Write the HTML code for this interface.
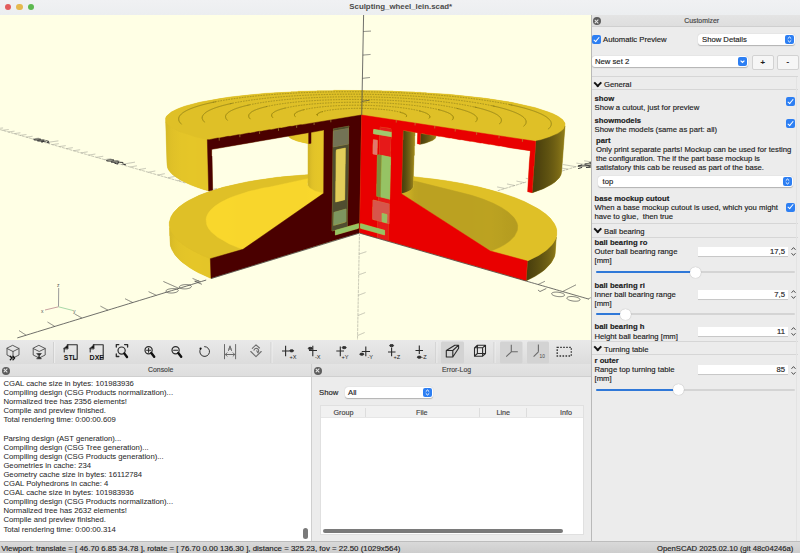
<!DOCTYPE html>
<html><head><meta charset="utf-8">
<style>
*{box-sizing:border-box;margin:0;padding:0}
html,body{width:800px;height:553px;overflow:hidden;background:#ececec}
body{position:relative;font-family:"Liberation Sans",sans-serif;font-size:7.7px;color:#1c1c1c}
.a{position:absolute;white-space:pre;line-height:1;-webkit-text-stroke:0.15px currentColor}
.b{font-weight:bold;color:#1a1a1a}
#title{position:absolute;left:0;top:0;width:800px;height:15px;background:linear-gradient(#f0f1f3,#eceef0)}
.tl{position:absolute;top:3.7px;width:6.6px;height:6.6px;border-radius:50%}
#vp{position:absolute;left:0;top:15px;width:591px;height:325px;background:#ffffe5;overflow:hidden}
#tb{position:absolute;left:0;top:339.5px;width:591px;height:25px;background:linear-gradient(#e9e9e9,#dcdcdc);border-bottom:1px solid #c9c9c9}
.dh{position:absolute;height:13px;background:linear-gradient(#e4e4e4,#dedede);border-bottom:1px solid #cfcfcf}
.cx{position:absolute;width:8px;height:8px;border-radius:50%;background:#5d5d5d}
.cx:before,.cx:after{content:"";position:absolute;left:3.4px;top:1.5px;width:1.3px;height:5px;background:#e8e8e8;transform:rotate(45deg)}
.cx:after{transform:rotate(-45deg)}
#con{position:absolute;left:0;top:377px;width:311px;height:164px;background:#fff}
#err{position:absolute;left:311px;top:364px;width:280px;height:177px;background:#ececec;border-left:1px solid #cfcfcf}
#cust{position:absolute;left:591px;top:15px;width:209px;height:526px;background:#ececec;border-left:1px solid #b9b9b9}
#sb{position:absolute;left:0;top:541px;width:800px;height:12px;background:linear-gradient(#d9d9d9,#cdcdcd);border-top:1px solid #bdbdbd}
.cb{position:absolute;width:9px;height:9px;border-radius:2px;background:#2d7ff3}
.cb:after{content:"";position:absolute;left:2.9px;top:0.9px;width:2.2px;height:5px;border:solid #fff;border-width:0 1.4px 1.4px 0;transform:rotate(40deg)}
.combo{position:absolute;height:11px;background:#fff;border-radius:3px;box-shadow:0 0.5px 1px rgba(0,0,0,.25)}
.bbtn{position:absolute;top:1px;right:1px;width:9px;height:9px;border-radius:2px;background:#2d7ff3}
.bbtn svg{position:absolute;left:0;top:0}
.spin{position:absolute;height:9px;background:#fff;box-shadow:0 0.5px 0.5px rgba(0,0,0,.15)}
.sep{position:absolute;left:592px;width:206px;height:1px;background:#d6d6d6}
.chev{position:absolute;width:5.5px;height:5.5px;border:solid #111;border-width:0 2px 2px 0;transform:rotate(45deg)}
.track{position:absolute;height:2px;border-radius:1px;background:#d4d4d4}
.fill{position:absolute;height:2px;border-radius:1px;background:#2f78d8}
.knob{position:absolute;width:11px;height:11px;border-radius:50%;background:#fff;box-shadow:0 0 1px rgba(0,0,0,.35)}
</style></head><body>

<div id="title">
 <div class="tl" style="left:4.7px;background:#e25c5c"></div>
 <div class="tl" style="left:16.2px;background:#e5b94f"></div>
 <div class="tl" style="left:27.7px;background:#5cb84f"></div>
 <div class="a b" style="left:349.3px;top:3.3px;font-size:7.85px;color:#4a4a4a;-webkit-text-stroke:0">Sculpting_wheel_lein.scad*</div>
</div>

<div id="vp">
<svg width="591" height="325" viewBox="0 15 591 325" style="position:absolute;left:0;top:0">
<g id="model"><defs><linearGradient id="g0" gradientUnits="userSpaceOnUse" x1="165.7" y1="0" x2="208.7" y2="0"><stop offset="0.024" stop-color="#d7ba26"/><stop offset="0.071" stop-color="#dbbd27"/><stop offset="0.119" stop-color="#dec027"/><stop offset="0.167" stop-color="#e0c128"/><stop offset="0.214" stop-color="#e1c228"/><stop offset="0.262" stop-color="#e2c328"/><stop offset="0.310" stop-color="#e3c428"/><stop offset="0.357" stop-color="#e4c528"/><stop offset="0.405" stop-color="#e4c528"/><stop offset="0.452" stop-color="#e4c528"/><stop offset="0.500" stop-color="#e5c528"/><stop offset="0.548" stop-color="#e5c628"/><stop offset="0.595" stop-color="#e5c628"/><stop offset="0.643" stop-color="#e5c628"/><stop offset="0.690" stop-color="#e5c628"/><stop offset="0.738" stop-color="#e5c528"/><stop offset="0.786" stop-color="#e5c528"/><stop offset="0.833" stop-color="#e4c528"/><stop offset="0.881" stop-color="#e4c528"/><stop offset="0.929" stop-color="#e4c528"/><stop offset="0.976" stop-color="#e4c528"/></linearGradient><linearGradient id="g1" gradientUnits="userSpaceOnUse" x1="532.3" y1="0" x2="565.3" y2="0"><stop offset="0.031" stop-color="#493f0d"/><stop offset="0.094" stop-color="#4b400d"/><stop offset="0.156" stop-color="#4d430e"/><stop offset="0.219" stop-color="#50450e"/><stop offset="0.281" stop-color="#54480f"/><stop offset="0.344" stop-color="#574c0f"/><stop offset="0.406" stop-color="#5b4f10"/><stop offset="0.469" stop-color="#5f5211"/><stop offset="0.531" stop-color="#635612"/><stop offset="0.594" stop-color="#685a12"/><stop offset="0.656" stop-color="#6d5e13"/><stop offset="0.719" stop-color="#736314"/><stop offset="0.781" stop-color="#796815"/><stop offset="0.844" stop-color="#806f17"/><stop offset="0.906" stop-color="#887618"/><stop offset="0.969" stop-color="#8e7b19"/></linearGradient><linearGradient id="g2" gradientUnits="userSpaceOnUse" x1="288.7" y1="0" x2="308.7" y2="0"><stop offset="0.050" stop-color="#d8bb26"/><stop offset="0.150" stop-color="#ddbf27"/><stop offset="0.250" stop-color="#e0c228"/><stop offset="0.350" stop-color="#e3c428"/><stop offset="0.450" stop-color="#e4c528"/><stop offset="0.550" stop-color="#e5c528"/><stop offset="0.650" stop-color="#e5c628"/><stop offset="0.750" stop-color="#e5c628"/><stop offset="0.850" stop-color="#e4c528"/><stop offset="0.950" stop-color="#e4c528"/></linearGradient><linearGradient id="g3" gradientUnits="userSpaceOnUse" x1="420.3" y1="0" x2="436.3" y2="0"><stop offset="0.062" stop-color="#4b410d"/><stop offset="0.188" stop-color="#52470f"/><stop offset="0.312" stop-color="#5a4e10"/><stop offset="0.438" stop-color="#635612"/><stop offset="0.562" stop-color="#6d5e13"/><stop offset="0.688" stop-color="#786715"/><stop offset="0.812" stop-color="#857317"/><stop offset="0.938" stop-color="#96811a"/></linearGradient><linearGradient id="g4" gradientUnits="userSpaceOnUse" x1="308.0" y1="0" x2="324.0" y2="0"><stop offset="0.062" stop-color="#d2b525"/><stop offset="0.188" stop-color="#dcbe27"/><stop offset="0.312" stop-color="#e1c228"/><stop offset="0.438" stop-color="#e3c428"/><stop offset="0.562" stop-color="#e4c528"/><stop offset="0.688" stop-color="#e5c628"/><stop offset="0.812" stop-color="#e5c528"/><stop offset="0.938" stop-color="#e4c528"/></linearGradient><linearGradient id="g5" gradientUnits="userSpaceOnUse" x1="401.7" y1="0" x2="415.3" y2="0"><stop offset="0.083" stop-color="#4c420d"/><stop offset="0.250" stop-color="#564a0f"/><stop offset="0.417" stop-color="#645712"/><stop offset="0.583" stop-color="#746415"/><stop offset="0.750" stop-color="#897618"/><stop offset="0.917" stop-color="#9d871c"/></linearGradient><linearGradient id="g6" gradientUnits="userSpaceOnUse" x1="169.7" y1="0" x2="211.0" y2="0"><stop offset="0.025" stop-color="#d8ba26"/><stop offset="0.075" stop-color="#dcbe27"/><stop offset="0.125" stop-color="#dfc027"/><stop offset="0.175" stop-color="#e0c228"/><stop offset="0.225" stop-color="#e2c328"/><stop offset="0.275" stop-color="#e3c428"/><stop offset="0.325" stop-color="#e3c428"/><stop offset="0.375" stop-color="#e4c528"/><stop offset="0.425" stop-color="#e4c528"/><stop offset="0.475" stop-color="#e5c528"/><stop offset="0.525" stop-color="#e5c628"/><stop offset="0.575" stop-color="#e5c628"/><stop offset="0.625" stop-color="#e5c628"/><stop offset="0.675" stop-color="#e5c628"/><stop offset="0.725" stop-color="#e5c628"/><stop offset="0.775" stop-color="#e5c528"/><stop offset="0.825" stop-color="#e4c528"/><stop offset="0.875" stop-color="#e4c528"/><stop offset="0.925" stop-color="#e4c528"/><stop offset="0.975" stop-color="#e4c528"/></linearGradient><linearGradient id="g7" gradientUnits="userSpaceOnUse" x1="526.3" y1="0" x2="556.7" y2="0"><stop offset="0.033" stop-color="#493f0d"/><stop offset="0.100" stop-color="#4c420d"/><stop offset="0.167" stop-color="#4f440e"/><stop offset="0.233" stop-color="#53470f"/><stop offset="0.300" stop-color="#564a0f"/><stop offset="0.367" stop-color="#5a4d10"/><stop offset="0.433" stop-color="#5d5110"/><stop offset="0.500" stop-color="#615411"/><stop offset="0.567" stop-color="#665812"/><stop offset="0.633" stop-color="#6a5c13"/><stop offset="0.700" stop-color="#6f6014"/><stop offset="0.767" stop-color="#756515"/><stop offset="0.833" stop-color="#7b6b16"/><stop offset="0.900" stop-color="#837117"/><stop offset="0.967" stop-color="#8d7a19"/></linearGradient><linearGradient id="g8" gradientUnits="userSpaceOnUse" x1="206.0" y1="0" x2="323.3" y2="0"><stop offset="0.021" stop-color="#f9d72c"/><stop offset="0.062" stop-color="#f9d72c"/><stop offset="0.104" stop-color="#f9d72c"/><stop offset="0.146" stop-color="#f9d72c"/><stop offset="0.188" stop-color="#f9d72c"/><stop offset="0.229" stop-color="#f8d72c"/><stop offset="0.271" stop-color="#f8d62c"/><stop offset="0.312" stop-color="#f8d62c"/><stop offset="0.354" stop-color="#f8d62c"/><stop offset="0.396" stop-color="#f8d62c"/><stop offset="0.438" stop-color="#f8d62c"/><stop offset="0.479" stop-color="#f8d62c"/><stop offset="0.521" stop-color="#f8d62c"/><stop offset="0.562" stop-color="#f8d62c"/><stop offset="0.604" stop-color="#f8d62c"/><stop offset="0.646" stop-color="#f8d62c"/><stop offset="0.688" stop-color="#f8d62c"/><stop offset="0.729" stop-color="#f8d62c"/><stop offset="0.771" stop-color="#f8d62c"/><stop offset="0.812" stop-color="#f8d62c"/><stop offset="0.854" stop-color="#f8d62c"/><stop offset="0.896" stop-color="#f9d72c"/><stop offset="0.938" stop-color="#f9d72c"/><stop offset="0.979" stop-color="#f9d72c"/></linearGradient><linearGradient id="g9" gradientUnits="userSpaceOnUse" x1="402.0" y1="0" x2="518.0" y2="0"><stop offset="0.021" stop-color="#cdb124"/><stop offset="0.062" stop-color="#c9ad23"/><stop offset="0.104" stop-color="#bea421"/><stop offset="0.146" stop-color="#bba121"/><stop offset="0.188" stop-color="#bba121"/><stop offset="0.229" stop-color="#bba121"/><stop offset="0.271" stop-color="#bba121"/><stop offset="0.312" stop-color="#bba121"/><stop offset="0.354" stop-color="#bba121"/><stop offset="0.396" stop-color="#bba121"/><stop offset="0.438" stop-color="#bba121"/><stop offset="0.479" stop-color="#bba121"/><stop offset="0.521" stop-color="#bba121"/><stop offset="0.562" stop-color="#bba121"/><stop offset="0.604" stop-color="#bba121"/><stop offset="0.646" stop-color="#bba221"/><stop offset="0.688" stop-color="#bba221"/><stop offset="0.729" stop-color="#bca221"/><stop offset="0.771" stop-color="#bca221"/><stop offset="0.812" stop-color="#baa121"/><stop offset="0.854" stop-color="#b9a021"/><stop offset="0.896" stop-color="#b79e20"/><stop offset="0.938" stop-color="#b69d20"/><stop offset="0.979" stop-color="#b59c20"/></linearGradient></defs><path fill="#d6b82a" fill-rule="evenodd" d="M165.67 118.00 167.00 163.67 167.67 168.00 168.67 170.00 170.67 172.67 175.67 177.00 181.00 180.33 187.00 183.33 197.00 187.33 208.67 191.00 210.67 190.33 212.00 190.67 199.33 195.33 186.67 201.67 178.67 207.33 173.00 213.33 171.00 216.67 169.33 222.33 170.00 243.33 170.67 246.67 174.33 254.00 177.00 257.33 182.67 262.67 194.67 270.67 210.67 278.33 359.33 232.67 525.33 280.67 526.67 280.67 535.00 276.33 544.67 269.67 550.00 264.33 552.33 261.00 554.33 257.00 555.33 253.00 556.33 236.33 556.67 236.00 556.67 230.00 556.00 227.33 554.33 223.67 550.33 218.33 545.67 214.00 537.00 208.00 524.67 201.67 515.00 197.67 491.00 190.00 479.00 187.00 458.00 182.67 434.67 179.00 415.00 177.00 413.33 176.33 413.67 165.33 414.00 165.00 414.00 155.67 414.33 155.33 414.33 146.00 414.67 145.67 414.67 136.33 415.00 136.00 415.00 132.67 416.00 132.33 417.67 133.00 417.33 143.67 420.00 144.33 425.67 143.00 432.67 140.33 435.33 138.33 436.00 136.00 436.67 135.67 529.67 150.67 530.33 151.33 529.33 162.67 527.67 191.67 532.67 192.67 543.33 188.67 550.00 185.33 555.00 182.00 559.33 177.67 561.00 174.67 561.67 171.00 561.67 167.00 562.00 166.67 562.00 162.67 562.33 162.33 562.33 158.33 562.67 158.00 562.67 154.00 563.00 153.67 563.00 149.67 563.33 149.33 563.33 145.33 563.67 145.00 563.67 141.00 565.00 127.67 565.00 123.33 562.67 119.67 557.00 115.67 548.00 111.67 535.33 107.67 511.33 102.33 485.67 98.33 456.00 95.00 431.67 93.33 431.33 93.00 426.67 93.00 426.33 92.67 401.67 91.67 401.33 91.33 393.00 91.33 392.67 91.00 364.67 90.67 364.33 90.33 333.67 90.33 333.33 90.67 306.33 91.00 306.00 91.33 298.00 91.33 297.67 91.67 274.33 92.67 274.00 93.00 269.67 93.00 269.33 93.33 247.00 95.00 220.67 98.33 197.67 102.67 182.33 107.00 175.67 109.67 171.33 112.00 166.67 116.00ZM212.00 190.33 212.33 190.00 213.00 190.33 212.67 190.67ZM412.67 187.67 413.00 187.33 413.33 187.67 413.00 188.00ZM308.00 186.33 308.33 186.00 308.67 186.33 308.33 186.67ZM307.67 185.67 308.00 185.33 308.33 185.67 308.00 186.00ZM413.33 184.67 413.67 185.00 413.33 187.33 413.00 187.00ZM307.67 182.67 308.00 183.00 307.67 185.33 307.33 185.00ZM308.00 144.00 308.00 174.33 307.67 174.67 286.00 176.33 257.67 180.00 238.00 183.67 223.00 187.33 213.67 190.33 212.67 190.00 212.00 156.00 211.67 155.67 211.67 149.67 212.00 149.33 287.00 136.33 288.33 136.33 291.33 138.67 297.00 141.00 304.33 143.00 307.33 143.33Z"/>
<path fill="#dfc027" stroke="#dfc027" stroke-width="0.45" fill-rule="evenodd" d="M165.67 118.00 165.67 121.33 166.33 122.67 169.00 125.67 172.33 128.00 183.33 133.00 195.00 136.67 206.00 139.33 209.33 139.33 217.67 137.67 219.67 137.67 228.00 136.00 230.00 136.00 360.33 114.67 367.33 115.33 374.00 116.67 391.67 119.00 398.33 120.33 416.00 122.67 422.67 124.00 433.67 125.33 440.33 126.67 458.00 129.00 460.33 129.67 475.67 131.67 478.00 132.33 500.00 135.33 535.67 141.00 549.33 137.00 557.67 133.33 561.67 130.67 563.67 128.67 565.00 126.00 565.00 123.33 562.67 119.67 558.67 116.67 553.00 113.67 535.33 107.67 511.33 102.33 485.67 98.33 448.67 94.33 426.67 93.00 426.33 92.67 421.33 92.67 421.00 92.33 415.33 92.33 415.00 92.00 393.00 91.33 392.67 91.00 382.00 91.00 381.67 90.67 333.67 90.33 333.33 90.67 317.00 90.67 316.67 91.00 298.00 91.33 297.67 91.67 291.00 91.67 290.67 92.00 265.33 93.33 230.00 97.00 200.67 102.00 185.33 106.00 178.00 108.67 171.33 112.00 166.67 116.00Z"/>
<path fill="url(#g0)" stroke="url(#g0)" stroke-width="0.45" fill-rule="evenodd" d="M165.67 121.67 167.00 163.67 167.67 168.00 168.67 170.00 172.67 174.67 181.00 180.33 191.67 185.33 204.00 189.67 208.33 190.67 207.00 139.67 195.00 137.00 179.00 131.67 170.33 127.00 166.67 123.67Z"/>
<path fill="url(#g1)" stroke="url(#g1)" stroke-width="0.45" fill-rule="evenodd" d="M565.00 126.33 564.00 128.67 561.67 131.00 557.67 133.67 549.33 137.33 541.00 140.00 536.00 141.00 532.33 192.67 543.33 188.67 551.67 184.33 555.00 182.00 559.33 177.67 561.00 174.67 561.67 171.00Z"/>
<path fill="url(#g2)" stroke="url(#g2)" stroke-width="0.45" fill-rule="evenodd" d="M308.33 143.67 308.33 133.00 288.67 136.67 291.33 138.67 297.00 141.00Z"/>
<path fill="url(#g3)" stroke="url(#g3)" stroke-width="0.45" fill-rule="evenodd" d="M420.33 144.33 425.67 143.00 432.67 140.33 435.33 138.33 436.00 136.00 420.67 133.67Z"/>
<path fill="url(#g4)" stroke="url(#g4)" stroke-width="0.45" fill-rule="evenodd" d="M323.67 130.33 311.33 132.67 311.33 143.33 309.67 144.00 308.00 144.00 308.00 185.33 308.67 186.67 311.67 189.00 317.67 191.67 323.33 193.33Z"/>
<path fill="url(#g5)" stroke="url(#g5)" stroke-width="0.45" fill-rule="evenodd" d="M403.33 130.67 403.33 139.67 403.00 140.00 401.67 193.67 409.00 191.00 410.67 190.00 413.00 187.33 414.00 155.67 414.33 155.33 414.33 146.00 414.67 145.67 414.67 136.33 415.00 136.00 415.00 132.67Z"/>
<path fill="url(#g6)" stroke="url(#g6)" stroke-width="0.45" fill-rule="evenodd" d="M169.67 227.67 169.67 235.67 170.00 236.00 170.33 245.33 171.67 249.33 175.33 255.33 180.33 260.67 189.67 267.67 198.33 272.67 210.67 278.33 210.00 258.67 201.00 255.00 191.67 250.33 182.33 244.33 178.67 241.33 173.33 235.67 170.67 231.33Z"/>
<path fill="url(#g7)" stroke="url(#g7)" stroke-width="0.45" fill-rule="evenodd" d="M556.33 237.00 556.00 238.67 553.33 243.33 547.33 249.67 538.67 255.67 527.67 261.00 526.33 280.67 535.00 276.33 541.67 272.00 544.67 269.67 551.00 263.00 554.33 257.00 555.00 254.67Z"/>
<path fill="#dfc027" stroke="#dfc027" stroke-width="0.45" fill-rule="evenodd" d="M413.67 176.67 413.67 180.67 463.33 192.67 483.67 199.00 499.33 206.00 509.33 212.67 514.00 217.33 517.33 223.00 518.00 225.67 518.00 228.67 517.00 232.33 514.67 236.33 509.67 241.33 503.33 245.67 498.33 248.33 491.67 251.00 492.00 251.33 525.33 260.33 528.00 260.67 538.67 255.33 545.67 250.67 552.00 244.67 555.67 238.67 556.67 235.00 556.67 230.00 556.00 227.33 554.33 223.67 550.33 218.33 545.67 214.00 539.67 209.67 524.67 201.67 515.00 197.67 501.33 193.00 479.00 187.00 463.33 183.67 446.00 180.67ZM307.67 174.67 277.00 177.33 248.00 181.67 223.00 187.33 207.00 192.33 199.33 195.33 189.00 200.33 184.00 203.33 178.67 207.33 174.00 212.00 171.00 216.67 169.33 222.33 169.33 225.67 171.00 231.33 175.33 237.67 178.67 241.00 184.67 245.67 191.67 250.00 201.00 254.67 210.00 258.33 242.33 249.33 232.33 245.67 222.33 240.67 215.00 235.67 209.33 230.00 206.33 224.67 205.67 219.33 206.33 216.33 208.00 213.00 210.00 210.33 214.67 206.00 220.67 202.00 228.67 198.00 235.33 195.33 244.33 192.33 257.00 189.00 307.33 178.67 307.67 178.33Z"/>
<path fill="url(#g8)" stroke="url(#g8)" stroke-width="0.45" fill-rule="evenodd" d="M323.00 193.33 315.00 191.00 309.67 188.00 307.33 185.00 307.67 178.67 269.33 187.00 263.00 188.00 249.00 191.33 235.33 195.67 228.67 198.33 220.67 202.33 214.67 206.33 210.33 210.33 208.33 213.00 206.67 216.33 206.00 219.33 206.67 224.67 208.67 228.67 211.33 232.00 217.67 237.33 229.33 244.00 239.67 248.33 243.00 249.00Z"/>
<path fill="url(#g9)" stroke="url(#g9)" stroke-width="0.45" fill-rule="evenodd" d="M402.00 193.67 405.00 196.00 491.00 251.00 499.67 247.33 505.00 244.33 509.67 241.00 514.33 236.33 517.33 230.33 517.67 225.67 517.00 223.00 515.33 219.67 513.67 217.33 507.67 211.67 501.67 207.67 493.33 203.33 483.67 199.33 471.67 195.33 414.67 181.00 413.67 181.00 413.33 187.67 410.67 190.33 406.00 192.67Z"/>
<path fill="#4a0000" stroke="#4a0000" stroke-width="0.45" fill-rule="evenodd" d="M361.33 115.00 302.33 124.67 300.33 124.67 292.00 126.33 290.00 126.33 281.67 128.00 279.67 128.00 271.33 129.67 269.33 129.67 261.00 131.33 259.00 131.33 250.67 133.00 248.67 133.00 240.33 134.67 238.33 134.67 230.00 136.33 228.00 136.33 219.67 138.00 217.67 138.00 209.33 139.67 207.33 139.67 208.67 191.00 212.67 190.00 212.00 156.00 211.67 155.67 211.67 149.67 212.00 149.33 308.33 132.67 308.67 133.00 308.67 143.67 311.00 143.33 311.00 132.67 311.33 132.33 323.67 130.00 324.00 130.33 323.67 193.33 243.00 249.33 210.33 258.67 211.00 278.33 334.00 240.33 359.00 233.00 359.33 231.67ZM349.00 125.67 349.33 127.00 349.00 127.33 347.67 226.33 358.67 223.33 359.00 223.67 359.00 228.00 358.33 228.67 335.33 235.33 335.00 235.00 335.00 230.67 332.67 231.33 331.67 231.00 333.00 128.67Z"/>
<path fill="#504e30" stroke="#504e30" stroke-width="0.45" fill-rule="evenodd" d="M348.67 144.33 333.00 147.33 332.00 231.00 347.33 226.67ZM346.00 208.67 346.33 209.00 346.33 221.67 344.67 222.67 333.67 225.67 333.33 225.33 333.67 212.33ZM345.33 147.67 345.67 148.00 345.67 163.67 345.33 164.00 345.00 199.67 344.33 200.33 335.67 202.33 335.33 202.00 335.33 181.33 335.67 181.00 335.67 153.00 336.00 150.00 337.00 149.33ZM349.00 126.00 333.33 128.67 333.33 130.67 348.33 128.33Z"/>
<path fill="#737355" stroke="#737355" stroke-width="0.45" fill-rule="evenodd" d="M348.67 128.33 333.33 131.00 333.00 147.00 348.67 144.00Z"/>
<path fill="#e1cd5a" stroke="#e1cd5a" stroke-width="0.45" fill-rule="evenodd" d="M345.33 148.00 336.33 150.00 335.67 202.00 344.67 199.67Z"/>
<path fill="#7d965f" stroke="#7d965f" stroke-width="0.45" fill-rule="evenodd" d="M346.00 209.00 334.00 212.33 333.67 225.33 346.00 221.67Z"/>
<path fill="#96c364" stroke="#96c364" stroke-width="0.45" fill-rule="evenodd" d="M358.67 223.67 335.33 230.33 335.33 235.00 358.33 228.33 358.67 228.00Z"/>
<path fill="#e90000" stroke="#e90000" stroke-width="0.45" fill-rule="evenodd" d="M361.67 115.00 359.67 231.67 359.33 232.67 377.00 238.00 377.00 233.33 376.67 233.00 360.67 228.67 360.00 228.00 360.00 223.67 361.33 223.33 377.33 228.00 377.33 220.67 373.67 220.00 372.33 219.33 372.33 207.00 372.67 206.67 372.67 200.00 373.67 199.67 378.00 200.67 378.00 196.67 377.00 196.67 376.33 196.00 376.33 184.00 376.67 183.67 377.00 155.67 377.67 154.33 379.00 154.67 379.33 135.00 373.33 134.00 373.00 131.00 373.67 129.00 379.67 130.00 380.00 126.67 391.00 128.33 391.67 132.33 391.67 136.67 391.00 139.67 391.00 151.33 390.67 151.67 391.00 164.67 390.67 165.00 390.00 199.33 389.33 200.33 389.67 213.00 389.33 213.33 389.33 223.67 388.67 224.67 388.33 241.00 526.00 280.67 527.33 261.00 490.33 251.00 401.33 193.67 403.00 130.67 403.67 130.33 417.33 132.67 417.67 133.00 417.33 143.67 420.00 144.33 420.33 133.67 422.33 133.33 428.67 134.67 430.67 134.67 439.00 136.33 441.00 136.33 449.33 138.00 451.33 138.00 459.67 139.67 461.67 139.67 470.00 141.33 472.00 141.33 480.33 143.00 482.33 143.00 488.67 144.33 490.67 144.33 499.00 146.00 501.00 146.00 509.33 147.67 529.67 150.67 530.33 151.33 529.33 162.67 527.67 191.67 532.00 192.67 532.33 190.33 532.33 185.67 532.67 185.33 533.00 176.00 533.33 175.67 533.67 166.33 534.00 166.00 535.67 141.33ZM373.33 139.33 376.33 139.67 377.67 140.33 377.67 148.00 377.33 148.33 377.33 154.67 377.00 155.00 372.67 154.00 372.67 146.00Z"/>
<path fill="#e61919" stroke="#e61919" stroke-width="0.45" fill-rule="evenodd" d="M377.67 221.00 377.67 228.00 384.67 230.00 385.00 230.33 385.00 235.00 384.33 235.33 377.33 233.33 377.33 238.00 388.00 241.00 388.33 224.67 388.67 224.00ZM378.33 196.67 378.33 200.67 378.00 201.00 389.00 203.67 389.33 199.33ZM379.67 135.00 379.33 154.67 390.33 156.67 391.00 137.00ZM380.00 127.00 380.33 130.33 391.00 132.00 391.00 128.67Z"/>
<path fill="#a0c86e" stroke="#a0c86e" stroke-width="0.45" fill-rule="evenodd" d="M373.67 129.33 373.33 133.67 391.33 136.67 391.33 132.33Z"/>
<path fill="#e1786e" stroke="#e1786e" stroke-width="0.45" fill-rule="evenodd" d="M373.33 139.67 373.00 154.00 377.00 154.67 377.33 140.33Z"/>
<path fill="#96c364" stroke="#96c364" stroke-width="0.45" fill-rule="evenodd" d="M381.67 155.33 380.67 197.00 389.67 199.33 390.67 157.33Z"/>
<path fill="#7d8c3c" stroke="#7d8c3c" stroke-width="0.45" fill-rule="evenodd" d="M377.67 154.67 377.33 155.67 376.67 196.00 380.33 197.00 381.33 155.33Z"/>
<path fill="#d7554b" stroke="#d7554b" stroke-width="0.45" fill-rule="evenodd" d="M373.00 200.00 372.67 219.33 381.67 221.67 381.67 213.33 382.67 213.00 386.67 214.00 387.33 214.67 387.00 223.00 389.00 223.67 389.33 204.00Z"/>
<path fill="#96be64" stroke="#96be64" stroke-width="0.45" fill-rule="evenodd" d="M382.00 213.33 382.00 221.67 386.67 223.00 387.00 214.67Z"/>
<path fill="#96c364" stroke="#96c364" stroke-width="0.45" fill-rule="evenodd" d="M360.33 223.67 360.33 228.00 360.67 228.33 384.67 235.00 384.67 230.33Z"/><path fill="none" stroke="#7d7018" stroke-width="0.8" stroke-opacity="0.85" d="M405.88 117.08 405.91 117.05 405.95 117.02 405.98 116.99 406.01 116.96 406.04 116.93 406.07 116.90 406.10 116.87 406.13 116.84 406.16 116.81 406.18 116.78 406.21 116.75 406.23 116.72 406.26 116.69 406.28 116.66 406.30 116.63 406.32 116.60 406.34 116.57 406.36 116.54 406.38 116.51 406.40 116.48 406.42 116.45 406.43 116.42 406.45 116.39 406.46 116.36 406.47 116.33 406.49 116.30 406.50 116.27 406.51 116.24 406.52 116.21 406.53 116.18 406.54 116.15 406.54 116.12 406.55 116.09 406.55 116.06 406.56 116.03 406.56 116.00 406.57 115.97 406.57 115.93 406.57 115.90 406.57 115.87 406.57 115.84 406.57 115.81 406.57 115.78 406.56 115.75 406.56 115.72 406.55 115.69 406.55 115.66 406.54 115.63 406.54 115.60 406.53 115.57 406.52 115.54 406.51 115.51 406.50 115.48 406.49 115.45 406.47 115.42 406.46 115.39 406.45 115.36 406.43 115.33 406.41 115.30 406.40 115.27 406.38 115.24 406.36 115.20 406.34 115.17 406.32 115.14 406.30 115.11 406.28 115.08 406.26 115.05 406.23 115.02 406.21 114.99 406.19 114.96 406.16 114.93 406.13 114.90 406.10 114.87 406.08 114.84 406.05 114.81 406.02 114.78 405.99 114.75 405.95 114.72 405.92 114.69 405.89 114.66 405.85 114.63 405.82 114.60 405.78 114.57 405.75 114.54 405.71 114.51 405.67 114.48 405.63 114.45 405.59 114.42 405.55 114.39 405.51 114.36 405.47 114.33 405.42 114.30 405.38 114.27 405.34 114.24 405.29 114.21 405.24 114.18 405.20 114.15 405.15 114.12 405.10 114.09 405.05 114.06 405.00 114.03 404.95 114.00 404.90 113.97 404.84 113.94 404.79 113.91 404.74 113.89 404.68 113.86 404.62 113.83 404.57 113.80 404.51 113.77 404.45 113.74 404.39 113.71 404.33 113.68 404.27 113.65 404.21 113.62 404.15 113.59 404.09 113.56 404.02 113.54 403.96 113.51 403.89 113.48 403.83 113.45 403.76 113.42 403.69 113.39 403.62 113.36 403.55 113.33 403.48 113.30 403.41 113.28 403.34 113.25 403.27 113.22 403.20 113.19 403.12 113.16 403.05 113.13 402.97 113.11 402.90 113.08 402.82 113.05 402.75 113.02 402.67 112.99 402.59 112.96 402.51 112.94 402.43 112.91 402.35 112.88 402.27 112.85 402.18 112.82 402.10 112.80 402.02 112.77 401.93 112.74 401.85 112.71 401.76 112.69 401.67 112.66 401.59 112.63 401.50 112.60 401.41 112.58 401.32 112.55 401.23 112.52 401.14 112.49 401.05 112.47 400.96 112.44 400.86 112.41 400.77 112.39 400.67 112.36 400.58 112.33 400.48 112.31 400.39 112.28 400.29 112.25 400.19 112.23M322.95 111.45 322.86 111.47 322.77 111.50 322.67 111.52 322.58 111.55 322.49 111.57 322.40 111.60 322.32 111.62 322.23 111.65 322.14 111.67 322.06 111.70 321.97 111.72 321.89 111.75 321.80 111.77 321.72 111.80 321.63 111.82 321.55 111.85 321.47 111.88 321.39 111.90 321.31 111.93 321.23 111.95 321.15 111.98 321.08 112.00 321.00 112.03 320.92 112.06 320.85 112.08 320.77 112.11 320.70 112.14 320.63 112.16 320.55 112.19 320.48 112.22 320.41 112.24 320.34 112.27 320.27 112.30 320.20 112.32 320.13 112.35 320.07 112.38 320.00 112.40 319.93 112.43 319.87 112.46 319.80 112.48 319.74 112.51 319.68 112.54 319.61 112.57 319.55 112.59 319.49 112.62 319.43 112.65 319.37 112.68 319.32 112.70 319.26 112.73 319.20 112.76 319.15 112.79 319.09 112.81 319.04 112.84 318.98 112.87 318.93 112.90 318.88 112.93 318.83 112.95 318.78 112.98 318.73 113.01 318.68 113.04 318.63 113.07 318.58 113.09 318.53 113.12 318.49 113.15 318.44 113.18 318.40 113.21 318.36 113.24 318.31 113.26 318.27 113.29 318.23 113.32 318.19 113.35 318.15 113.38 318.11 113.41 318.07 113.44 318.04 113.47 318.00 113.49 317.97 113.52 317.93 113.55 317.90 113.58 317.86 113.61 317.83 113.64 317.80 113.67 317.77 113.70 317.74 113.73 317.71 113.76 317.68 113.79 317.66 113.82 317.63 113.84 317.60 113.87 317.58 113.90 317.55 113.93 317.53 113.96 317.51 113.99 317.49 114.02 317.47 114.05 317.45 114.08 317.43 114.11 317.41 114.14 317.39 114.17 317.38 114.20 317.36 114.23 317.34 114.26 317.33 114.29 317.32 114.32 317.31 114.35 317.29 114.38 317.28 114.41 317.27 114.44 317.26 114.47 317.26 114.50 317.25 114.53 317.24 114.56 317.24 114.59 317.23 114.62 317.23 114.65 317.22 114.68 317.22 114.71 317.22 114.74 317.22 114.77 317.22 114.80 317.22 114.83 317.22 114.86 317.23 114.89 317.23 114.92 317.23 114.95 317.24 114.98 317.25 115.01 317.25 115.04 317.26 115.07 317.27 115.10 317.28 115.13 317.29 115.16 317.30 115.19 317.31 115.22 317.32 115.25 317.34 115.28 317.35 115.31 317.37 115.34 317.39 115.37 317.40 115.41 317.42 115.44 317.44 115.47 317.46 115.50 317.48 115.53 317.50 115.56 317.52 115.59 317.55 115.62 317.57 115.65 317.60 115.68 317.62 115.71 317.65 115.74 317.68 115.77 317.70 115.80 317.73 115.83 317.76 115.86 317.79 115.89 317.83 115.92 317.86 115.95 317.89 115.98M428.80 118.47 428.85 118.43 428.90 118.38 428.95 118.34 429.00 118.29 429.05 118.25 429.09 118.20 429.14 118.15 429.18 118.11 429.22 118.06 429.26 118.02 429.30 117.97 429.34 117.92 429.38 117.88 429.41 117.83 429.44 117.79 429.48 117.74 429.51 117.69 429.54 117.65 429.56 117.60 429.59 117.55 429.62 117.51 429.64 117.46 429.66 117.42 429.69 117.37 429.71 117.32 429.72 117.28 429.74 117.23 429.76 117.18 429.77 117.14 429.79 117.09 429.80 117.05 429.81 117.00 429.82 116.95 429.83 116.91 429.83 116.86 429.84 116.81 429.84 116.77 429.85 116.72 429.85 116.67 429.85 116.63 429.85 116.58 429.84 116.54 429.84 116.49 429.84 116.44 429.83 116.40 429.82 116.35 429.81 116.30 429.80 116.26 429.79 116.21 429.78 116.16 429.76 116.12 429.75 116.07 429.73 116.03 429.71 115.98 429.70 115.93 429.68 115.89 429.65 115.84 429.63 115.79 429.61 115.75 429.58 115.70 429.55 115.66 429.52 115.61 429.50 115.56 429.46 115.52 429.43 115.47 429.40 115.42 429.36 115.38 429.33 115.33 429.29 115.29 429.25 115.24 429.21 115.19 429.17 115.15 429.13 115.10 429.09 115.06 429.04 115.01 429.00 114.97 428.95 114.92 428.90 114.87 428.85 114.83 428.80 114.78 428.75 114.74 428.69 114.69 428.64 114.65 428.58 114.60 428.53 114.55 428.47 114.51 428.41 114.46 428.35 114.42 428.29 114.37 428.22 114.33 428.16 114.28 428.09 114.24 428.03 114.19 427.96 114.15 427.89 114.10 427.82 114.06 427.75 114.01 427.67 113.97 427.60 113.92 427.52 113.88 427.45 113.83 427.37 113.79 427.29 113.74 427.21 113.70 427.13 113.65 427.05 113.61 426.96 113.56 426.88 113.52 426.79 113.48 426.71 113.43 426.62 113.39 426.53 113.34 426.44 113.30 426.35 113.26 426.25 113.21 426.16 113.17 426.06 113.12 425.97 113.08 425.87 113.04 425.77 112.99 425.67 112.95 425.57 112.91 425.47 112.86 425.37 112.82 425.26 112.78 425.16 112.73 425.05 112.69 424.94 112.65 424.83 112.60 424.72 112.56 424.61 112.52 424.50 112.47 424.39 112.43 424.27 112.39 424.16 112.35 424.04 112.30 423.93 112.26 423.81 112.22 423.69 112.18 423.57 112.13 423.44 112.09 423.32 112.05 423.20 112.01 423.07 111.97 422.95 111.92 422.82 111.88 422.69 111.84 422.56 111.80 422.43 111.76 422.30 111.72 422.17 111.68 422.04 111.63 421.90 111.59 421.77 111.55 421.63 111.51 421.49 111.47 421.35 111.43 421.21 111.39 421.07 111.35 420.93 111.31 420.79 111.27 420.65 111.23 420.50 111.19 420.36 111.15 420.21 111.11 420.06 111.07 419.91 111.03 419.76 110.99 419.61 110.95 419.46 110.91 419.31 110.87M303.87 109.72 303.73 109.76 303.58 109.79 303.44 109.83 303.30 109.87 303.16 109.90 303.02 109.94 302.89 109.98 302.75 110.01 302.61 110.05 302.48 110.09 302.35 110.13 302.21 110.16 302.08 110.20 301.95 110.24 301.82 110.28 301.69 110.31 301.57 110.35 301.44 110.39 301.31 110.43 301.19 110.47 301.07 110.50 300.94 110.54 300.82 110.58 300.70 110.62 300.58 110.66 300.47 110.70 300.35 110.74 300.23 110.78 300.12 110.81 300.00 110.85 299.89 110.89 299.78 110.93 299.67 110.97 299.56 111.01 299.45 111.05 299.34 111.09 299.24 111.13 299.13 111.17 299.03 111.21 298.92 111.25 298.82 111.29 298.72 111.33 298.62 111.37 298.52 111.41 298.43 111.45 298.33 111.50 298.23 111.54 298.14 111.58 298.05 111.62 297.95 111.66 297.86 111.70 297.77 111.74 297.68 111.78 297.60 111.82 297.51 111.87 297.43 111.91 297.34 111.95 297.26 111.99 297.18 112.03 297.10 112.08 297.02 112.12 296.94 112.16 296.86 112.20 296.79 112.24 296.71 112.29 296.64 112.33 296.56 112.37 296.49 112.41 296.42 112.46 296.35 112.50 296.29 112.54 296.22 112.59 296.15 112.63 296.09 112.67 296.03 112.71 295.96 112.76 295.90 112.80 295.84 112.84 295.79 112.89 295.73 112.93 295.67 112.97 295.62 113.02 295.56 113.06 295.51 113.11 295.46 113.15 295.41 113.19 295.36 113.24 295.31 113.28 295.27 113.33 295.22 113.37 295.18 113.41 295.14 113.46 295.10 113.50 295.06 113.55 295.02 113.59 294.98 113.64 294.94 113.68 294.91 113.73 294.87 113.77 294.84 113.81 294.81 113.86 294.78 113.90 294.75 113.95 294.72 113.99 294.70 114.04 294.67 114.08 294.65 114.13 294.62 114.17 294.60 114.22 294.58 114.26 294.56 114.31 294.54 114.35 294.53 114.40 294.51 114.45 294.50 114.49 294.49 114.54 294.47 114.58 294.46 114.63 294.46 114.67 294.45 114.72 294.44 114.76 294.44 114.81 294.43 114.86 294.43 114.90 294.43 114.95 294.43 114.99 294.43 115.04 294.43 115.08 294.44 115.13 294.44 115.18 294.45 115.22 294.46 115.27 294.46 115.31 294.47 115.36 294.49 115.41 294.50 115.45 294.51 115.50 294.53 115.54 294.55 115.59 294.56 115.64 294.58 115.68 294.60 115.73 294.63 115.78 294.65 115.82 294.67 115.87 294.70 115.91 294.73 115.96 294.75 116.01 294.78 116.05 294.82 116.10 294.85 116.15 294.88 116.19 294.92 116.24 294.95 116.28 294.99 116.33 295.03 116.38 295.07 116.42 295.11 116.47 295.15 116.52 295.20 116.56 295.24 116.61 295.29 116.66 295.34 116.70 295.39 116.75 295.44 116.80M451.90 120.14 451.97 120.08 452.05 120.02 452.11 119.96 452.18 119.90 452.25 119.83 452.31 119.77 452.37 119.71 452.43 119.65 452.49 119.59 452.55 119.52 452.60 119.46 452.65 119.40 452.70 119.34 452.75 119.27 452.80 119.21 452.84 119.15 452.89 119.09 452.93 119.02 452.97 118.96 453.01 118.90 453.04 118.84 453.08 118.77 453.11 118.71 453.14 118.65 453.17 118.58 453.20 118.52 453.22 118.46 453.24 118.40 453.27 118.33 453.28 118.27 453.30 118.21 453.32 118.15 453.33 118.08 453.35 118.02 453.36 117.96 453.37 117.89 453.37 117.83 453.38 117.77 453.38 117.71 453.38 117.64 453.38 117.58 453.38 117.52 453.38 117.46 453.37 117.39 453.36 117.33 453.36 117.27 453.34 117.20 453.33 117.14 453.32 117.08 453.30 117.02 453.28 116.95 453.26 116.89 453.24 116.83 453.22 116.77 453.20 116.70 453.17 116.64 453.14 116.58 453.11 116.52 453.08 116.45 453.05 116.39 453.01 116.33 452.97 116.27 452.94 116.20 452.90 116.14 452.85 116.08 452.81 116.02 452.76 115.96 452.72 115.89 452.67 115.83 452.62 115.77 452.57 115.71 452.51 115.65 452.46 115.58 452.40 115.52 452.34 115.46 452.28 115.40 452.22 115.34 452.15 115.28 452.09 115.21 452.02 115.15 451.95 115.09 451.88 115.03 451.81 114.97 451.73 114.91 451.66 114.85 451.58 114.78 451.50 114.72 451.42 114.66 451.34 114.60 451.26 114.54 451.17 114.48 451.08 114.42 450.99 114.36 450.90 114.30 450.81 114.24 450.72 114.18 450.62 114.12 450.53 114.06 450.43 114.00 450.33 113.93 450.23 113.87 450.13 113.81 450.02 113.75 449.92 113.69 449.81 113.63 449.70 113.58 449.59 113.52 449.48 113.46 449.36 113.40 449.25 113.34 449.13 113.28 449.01 113.22 448.89 113.16 448.77 113.10 448.65 113.04 448.52 112.98 448.40 112.92 448.27 112.86 448.14 112.81 448.01 112.75 447.88 112.69 447.74 112.63 447.61 112.57 447.47 112.51 447.33 112.46 447.19 112.40 447.05 112.34 446.91 112.28 446.77 112.22 446.62 112.17 446.47 112.11 446.33 112.05 446.18 111.99 446.03 111.94 445.87 111.88 445.72 111.82 445.56 111.77 445.41 111.71 445.25 111.65 445.09 111.60 444.93 111.54 444.77 111.48 444.60 111.43 444.44 111.37 444.27 111.32 444.10 111.26 443.93 111.21 443.76 111.15 443.59 111.09 443.42 111.04 443.24 110.98 443.07 110.93 442.89 110.87 442.71 110.82 442.53 110.76 442.35 110.71 442.17 110.65 441.98 110.60 441.80 110.55 441.61 110.49 441.42 110.44 441.23 110.38 441.04 110.33 440.85 110.28 440.66 110.22 440.46 110.17 440.26 110.12 440.07 110.06 439.87 110.01 439.67 109.96 439.47 109.91 439.27 109.85 439.06 109.80 438.86 109.75 438.65 109.70 438.45 109.65 438.24 109.59 438.03 109.54M285.30 108.04 285.11 108.09 284.91 108.14 284.72 108.18 284.52 108.23 284.33 108.28 284.14 108.33 283.95 108.37 283.76 108.42 283.58 108.47 283.39 108.52 283.21 108.57 283.03 108.62 282.84 108.67 282.66 108.72 282.48 108.76 282.31 108.81 282.13 108.86 281.96 108.91 281.78 108.96 281.61 109.01 281.44 109.06 281.27 109.11 281.10 109.16 280.93 109.21 280.77 109.27 280.60 109.32 280.44 109.37 280.28 109.42 280.12 109.47 279.96 109.52 279.80 109.57 279.64 109.62 279.49 109.68 279.34 109.73 279.18 109.78 279.03 109.83 278.88 109.89 278.73 109.94 278.59 109.99 278.44 110.04 278.30 110.10 278.16 110.15 278.01 110.20 277.88 110.26 277.74 110.31 277.60 110.36 277.46 110.42 277.33 110.47 277.20 110.52 277.07 110.58 276.94 110.63 276.81 110.69 276.68 110.74 276.56 110.80 276.43 110.85 276.31 110.91 276.19 110.96 276.07 111.02 275.95 111.07 275.84 111.13 275.72 111.18 275.61 111.24 275.50 111.29 275.39 111.35 275.28 111.41 275.17 111.46 275.06 111.52 274.96 111.57 274.86 111.63 274.75 111.69 274.65 111.74 274.56 111.80 274.46 111.86 274.36 111.92 274.27 111.97 274.18 112.03 274.09 112.09 274.00 112.14 273.91 112.20 273.83 112.26 273.74 112.32 273.66 112.37 273.58 112.43 273.50 112.49 273.42 112.55 273.34 112.61 273.27 112.67 273.19 112.72 273.12 112.78 273.05 112.84 272.98 112.90 272.92 112.96 272.85 113.02 272.79 113.08 272.72 113.14 272.66 113.19 272.61 113.25 272.55 113.31 272.49 113.37 272.44 113.43 272.39 113.49 272.33 113.55 272.29 113.61 272.24 113.67 272.19 113.73 272.15 113.79 272.11 113.85 272.06 113.91 272.03 113.97 271.99 114.03 271.95 114.09 271.92 114.15 271.88 114.21 271.85 114.27 271.82 114.33 271.80 114.39 271.77 114.46 271.75 114.52 271.72 114.58 271.70 114.64 271.68 114.70 271.67 114.76 271.65 114.82 271.64 114.88 271.62 114.94 271.61 115.01 271.60 115.07 271.60 115.13 271.59 115.19 271.59 115.25 271.59 115.31 271.58 115.37 271.59 115.44 271.59 115.50 271.59 115.56 271.60 115.62 271.61 115.68 271.62 115.75 271.63 115.81 271.64 115.87 271.66 115.93 271.68 115.99 271.69 116.06 271.71 116.12 271.74 116.18 271.76 116.24 271.79 116.30 271.81 116.37 271.84 116.43 271.87 116.49 271.91 116.55 271.94 116.62 271.98 116.68 272.02 116.74 272.05 116.80 272.10 116.87 272.14 116.93 272.18 116.99 272.23 117.05 272.28 117.12 272.33 117.18 272.38 117.24 272.44 117.30 272.49 117.37 272.55 117.43 272.61 117.49 272.67 117.56 272.73 117.62 272.80 117.68 272.86 117.74 272.93 117.81 273.00 117.87M475.37 122.00 475.46 121.92 475.55 121.84 475.64 121.76 475.72 121.68 475.80 121.60 475.88 121.52 475.96 121.45 476.04 121.37 476.11 121.29 476.18 121.21 476.25 121.13 476.32 121.05 476.38 120.97 476.44 120.89 476.50 120.81 476.56 120.73 476.62 120.65 476.67 120.57 476.72 120.49 476.77 120.41 476.81 120.33 476.85 120.25 476.89 120.17 476.93 120.09 476.97 120.01 477.00 119.93 477.03 119.85 477.06 119.77 477.09 119.70 477.11 119.62 477.14 119.54 477.16 119.46 477.17 119.38 477.19 119.30 477.20 119.22 477.21 119.14 477.22 119.06 477.23 118.98 477.23 118.90 477.23 118.82 477.23 118.74 477.23 118.66 477.22 118.58 477.22 118.50 477.21 118.42 477.19 118.34 477.18 118.26 477.16 118.18 477.14 118.10 477.12 118.02 477.10 117.94 477.07 117.87 477.05 117.79 477.02 117.71 476.99 117.63 476.95 117.55 476.91 117.47 476.88 117.39 476.84 117.31 476.79 117.23 476.75 117.15 476.70 117.08 476.65 117.00 476.60 116.92 476.55 116.84 476.49 116.76 476.43 116.68 476.37 116.60 476.31 116.52 476.24 116.45 476.18 116.37 476.11 116.29 476.04 116.21 475.97 116.13 475.89 116.06 475.81 115.98 475.73 115.90 475.65 115.82 475.57 115.74 475.48 115.67 475.40 115.59 475.31 115.51 475.21 115.43 475.12 115.36 475.02 115.28 474.93 115.20 474.83 115.13 474.72 115.05 474.62 114.97 474.51 114.89 474.41 114.82 474.30 114.74 474.18 114.66 474.07 114.59 473.95 114.51 473.84 114.44 473.72 114.36 473.59 114.28 473.47 114.21 473.34 114.13 473.22 114.06 473.09 113.98 472.95 113.90 472.82 113.83 472.68 113.75 472.55 113.68 472.41 113.60 472.27 113.53 472.12 113.45 471.98 113.38 471.83 113.30 471.68 113.23 471.53 113.16 471.38 113.08 471.22 113.01 471.06 112.93 470.91 112.86 470.75 112.79 470.58 112.71 470.42 112.64 470.25 112.56 470.09 112.49 469.92 112.42 469.74 112.35 469.57 112.27 469.40 112.20 469.22 112.13 469.04 112.05 468.86 111.98 468.68 111.91 468.49 111.84 468.31 111.77 468.12 111.69 467.93 111.62 467.74 111.55 467.55 111.48 467.35 111.41 467.16 111.34 466.96 111.27 466.76 111.20 466.56 111.13 466.35 111.05 466.15 110.98 465.94 110.91 465.73 110.84 465.52 110.77 465.31 110.70 465.10 110.63 464.88 110.57 464.67 110.50 464.45 110.43 464.23 110.36 464.01 110.29 463.78 110.22 463.56 110.15 463.33 110.08 463.10 110.02 462.87 109.95 462.64 109.88 462.41 109.81 462.17 109.75 461.94 109.68 461.70 109.61 461.46 109.54 461.22 109.48 460.98 109.41 460.73 109.34 460.49 109.28 460.24 109.21 459.99 109.15 459.74 109.08 459.49 109.01 459.24 108.95 458.98 108.88 458.73 108.82 458.47 108.75 458.21 108.69 457.95 108.62 457.69 108.56 457.42 108.50 457.16 108.43 456.89 108.37 456.62 108.30 456.35 108.24M267.23 106.41 266.98 106.46 266.73 106.52 266.48 106.58 266.23 106.64 265.98 106.70 265.74 106.75 265.50 106.81 265.25 106.87 265.01 106.93 264.78 106.99 264.54 107.05 264.30 107.11 264.07 107.17 263.84 107.23 263.61 107.29 263.38 107.35 263.15 107.41 262.92 107.47 262.70 107.53 262.48 107.59 262.25 107.65 262.03 107.72 261.82 107.78 261.60 107.84 261.38 107.90 261.17 107.96 260.96 108.03 260.75 108.09 260.54 108.15 260.33 108.22 260.12 108.28 259.92 108.34 259.72 108.41 259.52 108.47 259.32 108.53 259.12 108.60 258.93 108.66 258.73 108.73 258.54 108.79 258.35 108.86 258.16 108.92 257.97 108.99 257.79 109.05 257.60 109.12 257.42 109.19 257.24 109.25 257.06 109.32 256.88 109.38 256.71 109.45 256.53 109.52 256.36 109.58 256.19 109.65 256.02 109.72 255.85 109.79 255.69 109.85 255.53 109.92 255.36 109.99 255.20 110.06 255.05 110.13 254.89 110.19 254.74 110.26 254.58 110.33 254.43 110.40 254.28 110.47 254.14 110.54 253.99 110.61 253.85 110.68 253.71 110.75 253.57 110.82 253.43 110.89 253.29 110.96 253.16 111.03 253.02 111.10 252.89 111.17 252.77 111.24 252.64 111.31 252.51 111.38 252.39 111.45 252.27 111.52 252.15 111.59 252.03 111.67 251.92 111.74 251.80 111.81 251.69 111.88 251.58 111.95 251.47 112.03 251.37 112.10 251.26 112.17 251.16 112.24 251.06 112.32 250.96 112.39 250.87 112.46 250.77 112.54 250.68 112.61 250.59 112.68 250.50 112.76 250.42 112.83 250.33 112.90 250.25 112.98 250.17 113.05 250.09 113.13 250.01 113.20 249.94 113.27 249.87 113.35 249.80 113.42 249.73 113.50 249.66 113.57 249.60 113.65 249.54 113.72 249.47 113.80 249.42 113.87 249.36 113.95 249.31 114.03 249.25 114.10 249.20 114.18 249.16 114.25 249.11 114.33 249.07 114.41 249.03 114.48 248.99 114.56 248.95 114.63 248.91 114.71 248.88 114.79 248.85 114.86 248.82 114.94 248.79 115.02 248.77 115.09 248.75 115.17 248.73 115.25 248.71 115.33 248.69 115.40 248.68 115.48 248.67 115.56 248.66 115.64 248.65 115.71 248.64 115.79 248.64 115.87 248.64 115.95 248.64 116.02 248.64 116.10 248.65 116.18 248.66 116.26 248.67 116.34 248.68 116.42 248.69 116.49 248.71 116.57 248.73 116.65 248.75 116.73 248.77 116.81 248.79 116.89 248.82 116.96 248.85 117.04 248.88 117.12 248.92 117.20 248.95 117.28 248.99 117.36 249.03 117.44 249.08 117.52 249.12 117.60 249.17 117.68 249.22 117.75 249.27 117.83 249.32 117.91 249.38 117.99 249.44 118.07 249.50 118.15 249.56 118.23 249.63 118.31 249.70 118.39 249.77 118.47 249.84 118.55 249.91 118.63 249.99 118.71 250.07 118.79 250.15 118.87 250.23 118.95 250.32 119.03 250.41 119.11M499.20 124.10 499.31 124.00 499.42 123.90 499.53 123.81 499.63 123.71 499.73 123.61 499.83 123.52 499.93 123.42 500.02 123.32 500.11 123.22 500.20 123.13 500.28 123.03 500.36 122.93 500.44 122.84 500.51 122.74 500.59 122.64 500.65 122.54 500.72 122.45 500.78 122.35 500.84 122.25 500.90 122.15 500.96 122.06 501.01 121.96 501.06 121.86 501.10 121.76 501.15 121.67 501.19 121.57 501.22 121.47 501.26 121.38 501.29 121.28 501.32 121.18 501.35 121.08 501.37 120.99 501.39 120.89 501.41 120.79 501.42 120.69 501.44 120.60 501.45 120.50 501.45 120.40 501.46 120.31 501.46 120.21 501.45 120.11 501.45 120.01 501.44 119.92 501.43 119.82 501.42 119.72 501.41 119.63 501.39 119.53 501.37 119.43 501.34 119.34 501.32 119.24 501.29 119.14 501.26 119.05 501.22 118.95 501.18 118.85 501.14 118.76 501.10 118.66 501.06 118.57 501.01 118.47 500.96 118.37 500.91 118.28 500.85 118.18 500.79 118.09 500.73 117.99 500.67 117.89 500.60 117.80 500.53 117.70 500.46 117.61 500.39 117.51 500.31 117.42 500.23 117.32 500.15 117.23 500.06 117.13 499.98 117.04 499.89 116.94 499.80 116.85 499.70 116.75 499.60 116.66 499.50 116.56 499.40 116.47 499.30 116.37 499.19 116.28 499.08 116.19 498.97 116.09 498.86 116.00 498.74 115.90 498.62 115.81 498.50 115.72 498.37 115.62 498.25 115.53 498.12 115.44 497.98 115.35 497.85 115.25 497.71 115.16 497.58 115.07 497.43 114.97 497.29 114.88 497.14 114.79 497.00 114.70 496.85 114.61 496.69 114.51 496.54 114.42 496.38 114.33 496.22 114.24 496.06 114.15 495.89 114.06 495.73 113.97 495.56 113.88 495.38 113.78 495.21 113.69 495.03 113.60 494.86 113.51 494.68 113.42 494.49 113.33 494.31 113.24 494.12 113.15 493.93 113.07 493.74 112.98 493.54 112.89 493.35 112.80 493.15 112.71 492.95 112.62 492.75 112.53 492.54 112.44 492.33 112.36 492.13 112.27 491.91 112.18 491.70 112.09 491.49 112.00 491.27 111.92 491.05 111.83 490.83 111.74 490.60 111.66 490.38 111.57 490.15 111.48 489.92 111.40 489.68 111.31 489.45 111.23 489.21 111.14 488.97 111.06 488.73 110.97 488.49 110.88 488.25 110.80 488.00 110.72 487.75 110.63 487.50 110.55 487.25 110.46 486.99 110.38 486.74 110.29 486.48 110.21 486.22 110.13 485.96 110.04 485.69 109.96 485.43 109.88 485.16 109.80 484.89 109.71 484.62 109.63 484.34 109.55 484.07 109.47 483.79 109.39 483.51 109.31 483.23 109.22 482.95 109.14 482.66 109.06 482.37 108.98 482.09 108.90 481.80 108.82 481.50 108.74 481.21 108.66 480.91 108.58 480.62 108.50 480.32 108.43 480.02 108.35 479.71 108.27 479.41 108.19 479.10 108.11 478.79 108.03 478.48 107.96 478.17 107.88 477.86 107.80 477.55 107.72 477.23 107.65 476.91 107.57 476.59 107.50 476.27 107.42 475.95 107.34 475.62 107.27 475.29 107.19 474.97 107.12 474.64 107.04 474.31 106.97M249.62 104.81 249.32 104.88 249.01 104.95 248.70 105.02 248.40 105.08 248.10 105.15 247.80 105.22 247.50 105.29 247.20 105.36 246.91 105.43 246.61 105.50 246.32 105.57 246.03 105.64 245.74 105.71 245.46 105.78 245.17 105.85 244.89 105.92 244.61 105.99 244.33 106.06 244.05 106.13 243.77 106.21 243.50 106.28 243.23 106.35 242.95 106.42 242.69 106.50 242.42 106.57 242.15 106.64 241.89 106.72 241.63 106.79 241.37 106.86 241.11 106.94 240.85 107.01 240.60 107.09 240.34 107.16 240.09 107.24 239.84 107.31 239.60 107.39 239.35 107.46 239.11 107.54 238.87 107.62 238.63 107.69 238.39 107.77 238.16 107.85 237.92 107.93 237.69 108.00 237.46 108.08 237.23 108.16 237.01 108.24 236.78 108.32 236.56 108.39 236.34 108.47 236.12 108.55 235.91 108.63 235.69 108.71 235.48 108.79 235.27 108.87 235.06 108.95 234.86 109.03 234.65 109.11 234.45 109.19 234.25 109.27 234.05 109.35 233.86 109.44 233.66 109.52 233.47 109.60 233.28 109.68 233.10 109.76 232.91 109.85 232.73 109.93 232.55 110.01 232.37 110.09 232.19 110.18 232.02 110.26 231.84 110.34 231.67 110.43 231.51 110.51 231.34 110.60 231.18 110.68 231.02 110.77 230.86 110.85 230.70 110.94 230.54 111.02 230.39 111.11 230.24 111.19 230.09 111.28 229.95 111.36 229.80 111.45 229.66 111.54 229.52 111.62 229.38 111.71 229.25 111.80 229.12 111.88 228.99 111.97 228.86 112.06 228.73 112.14 228.61 112.23 228.49 112.32 228.37 112.41 228.25 112.50 228.14 112.59 228.03 112.67 227.92 112.76 227.81 112.85 227.71 112.94 227.61 113.03 227.51 113.12 227.41 113.21 227.31 113.30 227.22 113.39 227.13 113.48 227.04 113.57 226.96 113.66 226.87 113.75 226.79 113.84 226.72 113.93 226.64 114.02 226.57 114.11 226.50 114.20 226.43 114.29 226.36 114.39 226.30 114.48 226.24 114.57 226.18 114.66 226.12 114.75 226.07 114.85 226.02 114.94 225.97 115.03 225.92 115.12 225.88 115.22 225.84 115.31 225.80 115.40 225.77 115.49 225.73 115.59 225.70 115.68 225.67 115.77 225.65 115.87 225.63 115.96 225.61 116.05 225.59 116.15 225.57 116.24 225.56 116.34 225.55 116.43 225.54 116.53 225.54 116.62 225.54 116.71 225.54 116.81 225.54 116.90 225.54 117.00 225.55 117.09 225.56 117.19 225.58 117.28 225.59 117.38 225.61 117.47 225.63 117.57 225.66 117.66 225.69 117.76 225.72 117.86 225.75 117.95 225.78 118.05 225.82 118.14 225.86 118.24 225.90 118.33 225.95 118.43 226.00 118.53 226.05 118.62 226.11 118.72 226.16 118.82 226.22 118.91 226.28 119.01 226.35 119.11 226.42 119.20 226.49 119.30 226.56 119.39 226.64 119.49 226.72 119.59 226.80 119.69 226.88 119.78 226.97 119.88 227.06 119.98 227.15 120.07 227.25 120.17 227.35 120.27 227.45 120.36 227.55 120.46 227.66 120.56M523.47 126.45 523.60 126.34 523.73 126.22 523.86 126.11 523.98 125.99 524.10 125.88 524.22 125.76 524.33 125.64 524.44 125.53 524.55 125.41 524.65 125.30 524.75 125.18 524.84 125.07 524.94 124.95 525.02 124.83 525.11 124.72 525.19 124.60 525.27 124.49 525.34 124.37 525.42 124.25 525.48 124.14 525.55 124.02 525.61 123.91 525.67 123.79 525.72 123.67 525.77 123.56 525.82 123.44 525.86 123.33 525.90 123.21 525.94 123.10 525.97 122.98 526.00 122.86 526.03 122.75 526.05 122.63 526.07 122.52 526.09 122.40 526.10 122.29 526.11 122.17 526.12 122.05 526.12 121.94 526.12 121.82 526.12 121.71 526.11 121.59 526.10 121.48 526.09 121.36 526.07 121.25 526.06 121.13 526.03 121.02 526.01 120.90 525.98 120.79 525.95 120.67 525.91 120.56 525.87 120.45 525.83 120.33 525.78 120.22 525.74 120.10 525.68 119.99 525.63 119.87 525.57 119.76 525.51 119.65 525.45 119.53 525.38 119.42 525.31 119.31 525.24 119.19 525.16 119.08 525.08 118.96 525.00 118.85 524.91 118.74 524.82 118.63 524.73 118.51 524.64 118.40 524.54 118.29 524.44 118.18 524.33 118.06 524.23 117.95 524.12 117.84 524.01 117.73 523.89 117.62 523.77 117.50 523.65 117.39 523.53 117.28 523.40 117.17 523.27 117.06 523.13 116.95 523.00 116.84 522.86 116.73 522.72 116.62 522.57 116.51 522.42 116.40 522.27 116.29 522.12 116.18 521.96 116.07 521.81 115.96 521.64 115.85 521.48 115.74 521.31 115.63 521.14 115.52 520.97 115.41 520.79 115.30 520.61 115.19 520.43 115.09 520.25 114.98 520.06 114.87 519.87 114.76 519.68 114.65 519.49 114.55 519.29 114.44 519.09 114.33 518.89 114.23 518.68 114.12 518.47 114.01 518.26 113.91 518.05 113.80 517.83 113.70 517.62 113.59 517.40 113.48 517.17 113.38 516.95 113.27 516.72 113.17 516.49 113.07 516.25 112.96 516.02 112.86 515.78 112.75 515.54 112.65 515.29 112.55 515.05 112.44 514.80 112.34 514.55 112.24 514.29 112.13 514.04 112.03 513.78 111.93 513.52 111.83 513.26 111.72 512.99 111.62 512.72 111.52 512.45 111.42 512.18 111.32 511.90 111.22 511.63 111.12 511.35 111.02 511.07 110.92 510.78 110.82 510.49 110.72 510.21 110.62 509.91 110.52 509.62 110.42 509.33 110.32 509.03 110.23 508.73 110.13 508.43 110.03 508.12 109.93 507.81 109.83 507.50 109.74 507.19 109.64 506.88 109.54 506.56 109.45 506.25 109.35 505.93 109.26 505.61 109.16 505.28 109.06 504.96 108.97 504.63 108.87 504.30 108.78 503.96 108.69 503.63 108.59 503.29 108.50 502.95 108.40 502.61 108.31 502.27 108.22 501.93 108.12 501.58 108.03 501.23 107.94 500.88 107.85 500.53 107.76 500.17 107.66 499.82 107.57 499.46 107.48 499.10 107.39 498.73 107.30 498.37 107.21 498.00 107.12 497.64 107.03 497.27 106.94 496.89 106.85 496.52 106.76 496.14 106.68 495.77 106.59 495.39 106.50 495.01 106.41 494.62 106.32 494.24 106.24 493.85 106.15 493.46 106.06 493.07 105.98 492.68 105.89 492.29 105.81 491.89 105.72M232.47 103.26 232.11 103.34 231.74 103.41 231.38 103.49 231.02 103.57 230.66 103.65 230.30 103.72 229.94 103.80 229.59 103.88 229.24 103.96 228.89 104.04 228.54 104.12 228.19 104.20 227.85 104.28 227.50 104.36 227.16 104.44 226.82 104.52 226.49 104.60 226.15 104.68 225.82 104.77 225.49 104.85 225.16 104.93 224.83 105.01 224.50 105.10 224.18 105.18 223.86 105.26 223.54 105.35 223.22 105.43 222.90 105.52 222.59 105.60 222.28 105.69 221.97 105.77 221.66 105.86 221.36 105.94 221.05 106.03 220.75 106.12 220.45 106.20 220.15 106.29 219.86 106.38 219.57 106.46 219.27 106.55 218.99 106.64 218.70 106.73 218.41 106.82 218.13 106.91 217.85 107.00 217.57 107.09 217.30 107.17 217.02 107.26 216.75 107.36 216.48 107.45 216.22 107.54 215.95 107.63 215.69 107.72 215.43 107.81 215.17 107.90 214.91 107.99 214.66 108.09 214.41 108.18 214.16 108.27 213.91 108.37 213.67 108.46 213.42 108.55 213.18 108.65 212.95 108.74 212.71 108.84 212.48 108.93 212.25 109.03 212.02 109.12 211.79 109.22 211.57 109.31 211.35 109.41 211.13 109.51 210.91 109.60 210.70 109.70 210.49 109.80 210.28 109.89 210.07 109.99 209.87 110.09 209.67 110.19 209.47 110.28 209.27 110.38 209.08 110.48 208.89 110.58 208.70 110.68 208.51 110.78 208.33 110.88 208.14 110.98 207.97 111.08 207.79 111.18 207.62 111.28 207.44 111.38 207.28 111.48 207.11 111.58 206.95 111.68 206.78 111.79 206.63 111.89 206.47 111.99 206.32 112.09 206.17 112.20 206.02 112.30 205.87 112.40 205.73 112.50 205.59 112.61 205.46 112.71 205.32 112.82 205.19 112.92 205.06 113.02 204.93 113.13 204.81 113.23 204.69 113.34 204.57 113.44 204.46 113.55 204.35 113.65 204.24 113.76 204.13 113.87 204.03 113.97 203.92 114.08 203.83 114.18 203.73 114.29 203.64 114.40 203.55 114.50 203.46 114.61 203.38 114.72 203.30 114.83 203.22 114.93 203.14 115.04 203.07 115.15 203.00 115.26 202.93 115.37 202.87 115.48 202.81 115.58 202.75 115.69 202.70 115.80 202.64 115.91 202.59 116.02 202.55 116.13 202.51 116.24 202.47 116.35 202.43 116.46 202.39 116.57 202.36 116.68 202.34 116.79 202.31 116.90 202.29 117.01 202.27 117.13 202.25 117.24 202.24 117.35 202.23 117.46 202.22 117.57 202.22 117.68 202.22 117.79 202.22 117.91 202.23 118.02 202.24 118.13 202.25 118.24 202.26 118.36 202.28 118.47 202.30 118.58 202.33 118.69 202.36 118.81 202.39 118.92 202.42 119.03 202.46 119.15 202.50 119.26 202.54 119.37 202.59 119.49 202.64 119.60 202.69 119.71 202.75 119.83 202.81 119.94 202.87 120.06 202.94 120.17 203.01 120.29 203.08 120.40 203.16 120.51 203.24 120.63 203.32 120.74 203.41 120.86 203.50 120.97 203.59 121.09 203.68 121.20 203.78 121.32 203.89 121.43 203.99 121.55 204.10 121.66 204.21 121.78 204.33 121.89 204.45 122.01 204.57 122.12 204.70 122.24 204.83 122.36M548.08 129.23 548.24 129.09 548.39 128.95 548.55 128.82 548.70 128.68 548.84 128.55 548.98 128.41 549.11 128.28 549.25 128.14 549.37 128.01 549.50 127.87 549.62 127.74 549.73 127.60 549.84 127.46 549.95 127.33 550.05 127.19 550.15 127.06 550.24 126.92 550.33 126.79 550.42 126.65 550.50 126.52 550.58 126.38 550.65 126.24 550.72 126.11 550.79 125.97 550.85 125.84 550.91 125.70 550.96 125.57 551.01 125.43 551.06 125.30 551.10 125.16 551.14 125.03 551.17 124.89 551.20 124.76 551.23 124.62 551.25 124.49 551.27 124.35 551.28 124.22 551.29 124.08 551.30 123.95 551.30 123.81 551.30 123.68 551.30 123.54 551.29 123.41 551.28 123.27 551.26 123.14 551.24 123.01 551.21 122.87 551.19 122.74 551.16 122.60 551.12 122.47 551.08 122.34 551.04 122.20 550.99 122.07 550.94 121.94 550.89 121.80 550.83 121.67 550.77 121.54 550.70 121.41 550.64 121.27 550.56 121.14 550.49 121.01 550.41 120.88 550.32 120.74 550.24 120.61 550.15 120.48 550.05 120.35 549.96 120.22 549.86 120.09 549.75 119.95 549.64 119.82 549.53 119.69 549.42 119.56 549.30 119.43 549.18 119.30 549.05 119.17 548.92 119.04 548.79 118.91 548.66 118.78 548.52 118.65 548.37 118.52 548.23 118.39 548.08 118.26 547.93 118.14 547.77 118.01 547.61 117.88 547.45 117.75 547.28 117.62 547.11 117.49 546.94 117.37 546.77 117.24 546.59 117.11 546.41 116.98 546.22 116.86 546.03 116.73 545.84 116.60 545.65 116.48 545.45 116.35 545.25 116.23 545.04 116.10 544.84 115.98 544.63 115.85 544.41 115.73 544.19 115.60 543.98 115.48 543.75 115.35 543.53 115.23 543.30 115.10 543.07 114.98 542.83 114.86 542.59 114.73 542.35 114.61 542.11 114.49 541.86 114.37 541.61 114.24 541.36 114.12 541.10 114.00 540.84 113.88 540.58 113.76 540.32 113.64 540.05 113.52 539.78 113.40 539.51 113.28 539.23 113.16 538.95 113.04 538.67 112.92 538.39 112.80 538.10 112.68 537.81 112.56 537.52 112.44 537.22 112.32 536.93 112.21 536.63 112.09 536.32 111.97 536.02 111.85 535.71 111.74 535.40 111.62 535.08 111.50 534.77 111.39 534.45 111.27 534.12 111.16 533.80 111.04 533.47 110.93 533.14 110.81 532.81 110.70 532.48 110.59 532.14 110.47 531.80 110.36 531.46 110.25 531.11 110.13 530.76 110.02 530.41 109.91 530.06 109.80 529.71 109.68 529.35 109.57 528.99 109.46 528.63 109.35 528.26 109.24 527.90 109.13 527.53 109.02 527.16 108.91 526.78 108.80 526.41 108.69 526.03 108.58 525.65 108.48 525.27 108.37 524.88 108.26 524.49 108.15 524.10 108.05 523.71 107.94 523.32 107.83 522.92 107.73 522.52 107.62 522.12 107.51 521.72 107.41 521.31 107.30 520.90 107.20 520.49 107.10 520.08 106.99 519.67 106.89 519.25 106.78 518.83 106.68 518.41 106.58 517.99 106.48 517.57 106.37 517.14 106.27 516.71 106.17 516.28 106.07 515.85 105.97 515.41 105.87 514.98 105.77 514.54 105.67 514.10 105.57 513.65 105.47 513.21 105.37 512.76 105.27 512.31 105.18 511.86 105.08 511.41 104.98 510.96 104.88 510.50 104.79 510.04 104.69 509.58 104.59 509.12 104.50M215.76 101.75 215.33 101.83 214.91 101.92 214.49 102.01 214.07 102.09 213.65 102.18 213.23 102.27 212.82 102.35 212.40 102.44 211.99 102.53 211.58 102.62 211.18 102.71 210.77 102.80 210.37 102.89 209.97 102.98 209.57 103.07 209.17 103.16 208.78 103.25 208.38 103.34 207.99 103.43 207.60 103.52 207.22 103.61 206.83 103.71 206.45 103.80 206.07 103.89 205.69 103.99 205.31 104.08 204.94 104.17 204.57 104.27 204.20 104.36 203.83 104.46 203.47 104.56 203.10 104.65 202.74 104.75 202.38 104.84 202.03 104.94 201.67 105.04 201.32 105.14 200.97 105.23 200.62 105.33 200.28 105.43 199.93 105.53 199.59 105.63 199.25 105.73 198.92 105.83 198.58 105.93 198.25 106.03 197.92 106.13 197.60 106.23 197.27 106.33 196.95 106.44 196.63 106.54 196.31 106.64 196.00 106.74 195.69 106.85 195.38 106.95 195.07 107.05 194.76 107.16 194.46 107.26 194.16 107.37 193.86 107.47 193.57 107.58 193.28 107.68 192.99 107.79 192.70 107.90 192.42 108.00 192.13 108.11 191.85 108.22 191.58 108.32 191.30 108.43 191.03 108.54 190.76 108.65 190.49 108.76 190.23 108.87 189.97 108.98 189.71 109.09 189.45 109.20 189.20 109.31 188.95 109.42 188.70 109.53 188.46 109.64 188.21 109.75 187.97 109.86 187.74 109.97 187.50 110.09 187.27 110.20 187.04 110.31 186.82 110.43 186.59 110.54 186.37 110.65 186.15 110.77 185.94 110.88 185.73 111.00 185.52 111.11 185.31 111.23 185.11 111.34 184.91 111.46 184.71 111.57 184.52 111.69 184.33 111.81 184.14 111.92 183.95 112.04 183.77 112.16 183.59 112.28 183.41 112.39 183.24 112.51 183.07 112.63 182.90 112.75 182.74 112.87 182.58 112.99 182.42 113.11 182.26 113.23 182.11 113.35 181.96 113.47 181.82 113.59 181.67 113.71 181.53 113.83 181.40 113.95 181.26 114.07 181.13 114.20 181.01 114.32 180.88 114.44 180.76 114.56 180.64 114.69 180.53 114.81 180.42 114.93 180.31 115.05 180.21 115.18 180.10 115.30 180.01 115.43 179.91 115.55 179.82 115.68 179.73 115.80 179.65 115.93 179.56 116.05 179.49 116.18 179.41 116.30 179.34 116.43 179.27 116.55 179.21 116.68 179.15 116.81 179.09 116.93 179.03 117.06 178.98 117.19 178.94 117.32 178.89 117.44 178.85 117.57 178.81 117.70 178.78 117.83 178.75 117.96 178.72 118.08 178.70 118.21 178.68 118.34 178.66 118.47 178.65 118.60 178.64 118.73 178.64 118.86 178.64 118.99 178.64 119.12 178.64 119.25 178.65 119.38 178.66 119.51 178.68 119.64 178.70 119.77 178.72 119.90 178.75 120.03 178.78 120.16 178.82 120.30 178.86 120.43 178.90 120.56 178.94 120.69 178.99 120.82 179.05 120.96 179.10 121.09 179.16 121.22 179.23 121.35 179.30 121.49 179.37 121.62 179.44 121.75 179.52 121.88 179.61 122.02 179.69 122.15 179.78 122.28 179.88 122.42 179.98 122.55 180.08 122.68 180.19 122.82 180.30 122.95 180.41 123.09 180.53 123.22 180.65 123.36 180.78 123.49 180.91 123.62 181.04 123.76 181.18 123.89 181.32 124.03 181.47 124.16 181.62 124.30"/>
<path fill="none" stroke="#7d7018" stroke-width="0.8" stroke-opacity="0.75" stroke-dasharray="1.6 1.1" d="M400.86 112.41 400.77 112.39 400.67 112.36 400.58 112.33 400.48 112.31 400.39 112.28 400.29 112.25 400.19 112.23 400.09 112.20 399.99 112.17 399.90 112.15 399.79 112.12 399.69 112.09 399.59 112.07 399.49 112.04 399.39 112.02 399.28 111.99 399.18 111.96 399.07 111.94 398.97 111.91 398.86 111.89 398.75 111.86 398.65 111.83 398.54 111.81 398.43 111.78 398.32 111.76 398.21 111.73 398.10 111.71 397.99 111.68 397.87 111.66 397.76 111.63 397.65 111.61 397.53 111.58 397.42 111.56 397.30 111.53 397.19 111.51 397.07 111.48 396.95 111.46 396.84 111.43 396.72 111.41 396.60 111.39 396.48 111.36 396.36 111.34 396.24 111.31 396.12 111.29 396.00 111.26 395.87 111.24 395.75 111.22 395.63 111.19 395.50 111.17 395.38 111.15 395.25 111.12 395.13 111.10 395.00 111.08 394.87 111.05 394.74 111.03 394.62 111.01 394.49 110.98 394.36 110.96 394.23 110.94 394.10 110.91 393.97 110.89 393.84 110.87 393.70 110.85 393.57 110.82 393.44 110.80 393.30 110.78 393.17 110.76 393.03 110.74 392.90 110.71 392.76 110.69 392.63 110.67 392.49 110.65 392.35 110.63 392.21 110.60 392.08 110.58 391.94 110.56 391.80 110.54 391.66 110.52 391.52 110.50 391.38 110.48 391.23 110.46 391.09 110.44 390.95 110.41 390.81 110.39 390.66 110.37 390.52 110.35 390.38 110.33 390.23 110.31 390.09 110.29 389.94 110.27 389.79 110.25 389.65 110.23 389.50 110.21 389.35 110.19 389.20 110.17 389.05 110.15 388.91 110.13 388.76 110.11 388.61 110.09 388.46 110.08 388.30 110.06 388.15 110.04 388.00 110.02 387.85 110.00 387.70 109.98 387.54 109.96 387.39 109.94 387.24 109.93 387.08 109.91 386.93 109.89 386.77 109.87 386.62 109.85 386.46 109.83 386.30 109.82 386.15 109.80 385.99 109.78 385.83 109.76 385.67 109.75 385.52 109.73 385.36 109.71 385.20 109.70 385.04 109.68 384.88 109.66 384.72 109.64 384.56 109.63 384.40 109.61 384.23 109.59 384.07 109.58 383.91 109.56 383.75 109.55 383.59 109.53 383.42 109.51 383.26 109.50 383.09 109.48 382.93 109.47 382.77 109.45 382.60 109.43 382.43 109.42 382.27 109.40 382.10 109.39 381.94 109.37 381.77 109.36 381.60 109.34 381.44 109.33 381.27 109.31 381.10 109.30 380.93 109.29 380.76 109.27 380.59 109.26 380.42 109.24 380.26 109.23 380.09 109.21 379.92 109.20 379.75 109.19 379.57 109.17 379.40 109.16 379.23 109.15 379.06 109.13 378.89 109.12 378.72 109.11 378.54 109.09 378.37 109.08 378.20 109.07 378.03 109.06 377.85 109.04 377.68 109.03 377.50 109.02 377.33 109.01 377.16 109.00 376.98 108.98 376.81 108.97 376.63 108.96 376.46 108.95 376.28 108.94 376.10 108.93 375.93 108.91 375.75 108.90 375.57 108.89 375.40 108.88 375.22 108.87 375.04 108.86 374.87 108.85 374.69 108.84 374.51 108.83 374.33 108.82 374.15 108.81 373.98 108.80 373.80 108.79 373.62 108.78 373.44 108.77 373.26 108.76 373.08 108.75 372.90 108.74 372.72 108.73 372.54 108.72 372.36 108.71 372.18 108.70 372.00 108.69 371.82 108.69 371.64 108.68 371.46 108.67 371.28 108.66 371.10 108.65 370.91 108.64 370.73 108.64 370.55 108.63 370.37 108.62 370.19 108.61 370.01 108.61 369.82 108.60 369.64 108.59 369.46 108.58 369.28 108.58 369.09 108.57 368.91 108.56 368.73 108.56 368.55 108.55 368.36 108.54 368.18 108.54 368.00 108.53 367.81 108.52 367.63 108.52 367.45 108.51 367.26 108.51 367.08 108.50 366.89 108.50 366.71 108.49 366.53 108.48 366.34 108.48 366.16 108.47 365.97 108.47 365.79 108.46 365.61 108.46 365.42 108.46 365.24 108.45 365.05 108.45 364.87 108.44 364.68 108.44 364.50 108.43 364.31 108.43 364.13 108.43 363.94 108.42 363.76 108.42 363.57 108.42 363.39 108.41 363.21 108.41 363.02 108.41 362.84 108.40 362.65 108.40 362.47 108.40 362.28 108.40 362.10 108.39 361.91 108.39 361.73 108.39 361.54 108.39 361.36 108.38 361.17 108.38 360.99 108.38 360.80 108.38 360.62 108.38 360.43 108.38 360.25 108.37 360.06 108.37 359.88 108.37 359.69 108.37 359.51 108.37 359.32 108.37 359.14 108.37 358.96 108.37 358.77 108.37 358.59 108.37 358.40 108.37 358.22 108.37 358.03 108.37 357.85 108.37 357.67 108.37 357.48 108.37 357.30 108.37 357.11 108.37 356.93 108.37 356.75 108.37 356.56 108.37 356.38 108.38 356.20 108.38 356.01 108.38 355.83 108.38 355.65 108.38 355.46 108.38 355.28 108.39 355.10 108.39 354.92 108.39 354.73 108.39 354.55 108.39 354.37 108.40 354.19 108.40 354.00 108.40 353.82 108.40 353.64 108.41 353.46 108.41 353.28 108.41 353.10 108.42 352.91 108.42 352.73 108.42 352.55 108.43 352.37 108.43 352.19 108.44 352.01 108.44 351.83 108.44 351.65 108.45 351.47 108.45 351.29 108.46 351.11 108.46 350.93 108.47 350.75 108.47 350.57 108.48 350.39 108.48 350.22 108.49 350.04 108.49 349.86 108.50 349.68 108.50 349.50 108.51 349.33 108.52 349.15 108.52 348.97 108.53 348.79 108.53 348.62 108.54 348.44 108.55 348.26 108.55 348.09 108.56 347.91 108.57 347.74 108.57 347.56 108.58 347.39 108.59 347.21 108.59 347.04 108.60 346.86 108.61 346.69 108.62 346.51 108.62 346.34 108.63 346.17 108.64 345.99 108.65 345.82 108.66 345.65 108.67 345.47 108.67 345.30 108.68 345.13 108.69 344.96 108.70 344.79 108.71 344.62 108.72 344.45 108.73 344.27 108.74 344.10 108.74 343.93 108.75 343.77 108.76 343.60 108.77 343.43 108.78 343.26 108.79 343.09 108.80 342.92 108.81 342.75 108.82 342.59 108.83 342.42 108.84 342.25 108.85 342.09 108.87 341.92 108.88 341.75 108.89 341.59 108.90 341.42 108.91 341.26 108.92 341.09 108.93 340.93 108.94 340.77 108.95 340.60 108.97 340.44 108.98 340.28 108.99 340.11 109.00 339.95 109.01 339.79 109.03 339.63 109.04 339.47 109.05 339.31 109.06 339.15 109.08 338.99 109.09 338.83 109.10 338.67 109.12 338.51 109.13 338.35 109.14 338.19 109.15 338.04 109.17 337.88 109.18 337.72 109.20 337.57 109.21 337.41 109.22 337.26 109.24 337.10 109.25 336.95 109.27 336.79 109.28 336.64 109.29 336.48 109.31 336.33 109.32 336.18 109.34 336.03 109.35 335.88 109.37 335.72 109.38 335.57 109.40 335.42 109.41 335.27 109.43 335.12 109.44 334.97 109.46 334.83 109.48 334.68 109.49 334.53 109.51 334.38 109.52 334.24 109.54 334.09 109.56 333.94 109.57 333.80 109.59 333.65 109.60 333.51 109.62 333.37 109.64 333.22 109.65 333.08 109.67 332.94 109.69 332.79 109.71 332.65 109.72 332.51 109.74 332.37 109.76 332.23 109.77 332.09 109.79 331.95 109.81 331.81 109.83 331.68 109.85 331.54 109.86 331.40 109.88 331.27 109.90 331.13 109.92 330.99 109.94 330.86 109.96 330.72 109.97 330.59 109.99 330.46 110.01 330.32 110.03 330.19 110.05 330.06 110.07 329.93 110.09 329.80 110.11 329.67 110.13 329.54 110.15 329.41 110.16 329.28 110.18 329.15 110.20 329.03 110.22 328.90 110.24 328.77 110.26 328.65 110.28 328.52 110.30 328.40 110.32 328.27 110.34 328.15 110.37 328.03 110.39 327.91 110.41 327.78 110.43 327.66 110.45 327.54 110.47 327.42 110.49 327.30 110.51 327.19 110.53 327.07 110.55 326.95 110.57 326.83 110.60 326.72 110.62 326.60 110.64 326.49 110.66 326.37 110.68 326.26 110.70 326.14 110.73 326.03 110.75 325.92 110.77 325.81 110.79 325.70 110.82 325.59 110.84 325.48 110.86 325.37 110.88 325.26 110.91 325.15 110.93 325.05 110.95 324.94 110.97 324.83 111.00 324.73 111.02 324.62 111.04 324.52 111.07 324.42 111.09 324.31 111.11 324.21 111.14 324.11 111.16 324.01 111.18 323.91 111.21 323.81 111.23 323.71 111.26 323.62 111.28 323.52 111.30 323.42 111.33 323.33 111.35 323.23 111.38 323.14 111.40 323.04 111.42 322.95 111.45 322.86 111.47 322.77 111.50 322.67 111.52 322.58 111.55 322.49 111.57 322.40 111.60 322.32 111.62M420.36 111.15 420.21 111.11 420.06 111.07 419.91 111.03 419.76 110.99 419.61 110.95 419.46 110.91 419.31 110.87 419.16 110.83 419.00 110.79 418.85 110.75 418.69 110.71 418.53 110.67 418.38 110.64 418.22 110.60 418.06 110.56 417.90 110.52 417.73 110.48 417.57 110.44 417.41 110.40 417.24 110.37 417.08 110.33 416.91 110.29 416.74 110.25 416.58 110.22 416.41 110.18 416.24 110.14 416.07 110.10 415.89 110.07 415.72 110.03 415.55 109.99 415.37 109.96 415.20 109.92 415.02 109.88 414.84 109.85 414.67 109.81 414.49 109.77 414.31 109.74 414.13 109.70 413.94 109.66 413.76 109.63 413.58 109.59 413.39 109.56 413.21 109.52 413.02 109.49 412.84 109.45 412.65 109.42 412.46 109.38 412.27 109.35 412.08 109.31 411.89 109.28 411.70 109.24 411.51 109.21 411.32 109.17 411.12 109.14 410.93 109.11 410.73 109.07 410.54 109.04 410.34 109.00 410.14 108.97 409.94 108.94 409.74 108.90 409.54 108.87 409.34 108.84 409.14 108.81 408.94 108.77 408.74 108.74 408.53 108.71 408.33 108.68 408.12 108.64 407.92 108.61 407.71 108.58 407.50 108.55 407.29 108.52 407.08 108.48 406.87 108.45 406.66 108.42 406.45 108.39 406.24 108.36 406.03 108.33 405.81 108.30 405.60 108.27 405.39 108.24 405.17 108.21 404.96 108.18 404.74 108.15 404.52 108.12 404.30 108.09 404.08 108.06 403.87 108.03 403.65 108.00 403.43 107.97 403.20 107.94 402.98 107.91 402.76 107.88 402.54 107.85 402.31 107.82 402.09 107.80 401.86 107.77 401.64 107.74 401.41 107.71 401.18 107.68 400.96 107.66 400.73 107.63 400.50 107.60 400.27 107.57 400.04 107.55 399.81 107.52 399.58 107.49 399.35 107.47 399.12 107.44 398.88 107.41 398.65 107.39 398.42 107.36 398.18 107.34 397.95 107.31 397.71 107.28 397.47 107.26 397.24 107.23 397.00 107.21 396.76 107.18 396.52 107.16 396.29 107.13 396.05 107.11 395.81 107.08 395.57 107.06 395.33 107.04 395.08 107.01 394.84 106.99 394.60 106.96 394.36 106.94 394.11 106.92 393.87 106.89 393.63 106.87 393.38 106.85 393.14 106.83 392.89 106.80 392.64 106.78 392.40 106.76 392.15 106.74 391.90 106.71 391.65 106.69 391.41 106.67 391.16 106.65 390.91 106.63 390.66 106.61 390.41 106.59 390.16 106.56 389.91 106.54 389.65 106.52 389.40 106.50 389.15 106.48 388.90 106.46 388.64 106.44 388.39 106.42 388.14 106.40 387.88 106.38 387.63 106.36 387.37 106.34 387.12 106.33 386.86 106.31 386.61 106.29 386.35 106.27 386.09 106.25 385.83 106.23 385.58 106.22 385.32 106.20 385.06 106.18 384.80 106.16 384.54 106.14 384.28 106.13 384.02 106.11 383.76 106.09 383.50 106.08 383.24 106.06 382.98 106.04 382.72 106.03 382.46 106.01 382.20 106.00 381.94 105.98 381.67 105.96 381.41 105.95 381.15 105.93 380.88 105.92 380.62 105.90 380.36 105.89 380.09 105.87 379.83 105.86 379.56 105.84 379.30 105.83 379.03 105.82 378.77 105.80 378.50 105.79 378.24 105.78 377.97 105.76 377.71 105.75 377.44 105.74 377.17 105.72 376.91 105.71 376.64 105.70 376.37 105.69 376.10 105.67 375.84 105.66 375.57 105.65 375.30 105.64 375.03 105.63 374.76 105.62 374.49 105.60 374.22 105.59 373.96 105.58 373.69 105.57 373.42 105.56 373.15 105.55 372.88 105.54 372.61 105.53 372.34 105.52 372.07 105.51 371.80 105.50 371.53 105.49 371.26 105.48 370.99 105.47 370.72 105.47 370.44 105.46 370.17 105.45 369.90 105.44 369.63 105.43 369.36 105.42 369.09 105.42 368.82 105.41 368.54 105.40 368.27 105.39 368.00 105.39 367.73 105.38 367.46 105.37 367.19 105.37 366.91 105.36 366.64 105.35 366.37 105.35 366.10 105.34 365.82 105.34 365.55 105.33 365.28 105.32 365.01 105.32 364.73 105.31 364.46 105.31 364.19 105.30 363.92 105.30 363.64 105.30 363.37 105.29 363.10 105.29 362.83 105.28 362.55 105.28 362.28 105.28 362.01 105.27 361.74 105.27 361.46 105.27 361.19 105.26 360.92 105.26 360.64 105.26 360.37 105.26 360.10 105.25 359.83 105.25 359.56 105.25 359.28 105.25 359.01 105.25 358.74 105.25 358.47 105.24 358.19 105.24 357.92 105.24 357.65 105.24 357.38 105.24 357.11 105.24 356.83 105.24 356.56 105.24 356.29 105.24 356.02 105.24 355.75 105.24 355.48 105.24 355.21 105.24 354.93 105.25 354.66 105.25 354.39 105.25 354.12 105.25 353.85 105.25 353.58 105.25 353.31 105.26 353.04 105.26 352.77 105.26 352.50 105.26 352.23 105.27 351.96 105.27 351.69 105.27 351.42 105.28 351.15 105.28 350.88 105.28 350.62 105.29 350.35 105.29 350.08 105.29 349.81 105.30 349.54 105.30 349.27 105.31 349.01 105.31 348.74 105.32 348.47 105.32 348.20 105.33 347.94 105.33 347.67 105.34 347.40 105.35 347.14 105.35 346.87 105.36 346.61 105.36 346.34 105.37 346.08 105.38 345.81 105.38 345.55 105.39 345.28 105.40 345.02 105.41 344.75 105.41 344.49 105.42 344.23 105.43 343.96 105.44 343.70 105.44 343.44 105.45 343.18 105.46 342.91 105.47 342.65 105.48 342.39 105.49 342.13 105.50 341.87 105.51 341.61 105.52 341.35 105.53 341.09 105.54 340.83 105.55 340.57 105.56 340.31 105.57 340.05 105.58 339.79 105.59 339.54 105.60 339.28 105.61 339.02 105.62 338.77 105.63 338.51 105.64 338.25 105.66 338.00 105.67 337.74 105.68 337.49 105.69 337.23 105.71 336.98 105.72 336.72 105.73 336.47 105.74 336.22 105.76 335.96 105.77 335.71 105.78 335.46 105.80 335.21 105.81 334.96 105.82 334.71 105.84 334.46 105.85 334.21 105.87 333.96 105.88 333.71 105.90 333.46 105.91 333.21 105.93 332.96 105.94 332.72 105.96 332.47 105.97 332.22 105.99 331.98 106.00 331.73 106.02 331.49 106.04 331.24 106.05 331.00 106.07 330.76 106.09 330.51 106.10 330.27 106.12 330.03 106.14 329.79 106.15 329.55 106.17 329.31 106.19 329.07 106.21 328.83 106.23 328.59 106.24 328.35 106.26 328.11 106.28 327.87 106.30 327.64 106.32 327.40 106.34 327.16 106.36 326.93 106.38 326.69 106.40 326.46 106.41 326.23 106.43 325.99 106.45 325.76 106.47 325.53 106.49 325.30 106.51 325.07 106.54 324.84 106.56 324.61 106.58 324.38 106.60 324.15 106.62 323.92 106.64 323.69 106.66 323.47 106.68 323.24 106.71 323.02 106.73 322.79 106.75 322.57 106.77 322.34 106.79 322.12 106.82 321.90 106.84 321.68 106.86 321.46 106.89 321.23 106.91 321.01 106.93 320.80 106.96 320.58 106.98 320.36 107.00 320.14 107.03 319.92 107.05 319.71 107.07 319.49 107.10 319.28 107.12 319.07 107.15 318.85 107.17 318.64 107.20 318.43 107.22 318.22 107.25 318.01 107.27 317.80 107.30 317.59 107.33 317.38 107.35 317.17 107.38 316.96 107.40 316.76 107.43 316.55 107.46 316.35 107.48 316.14 107.51 315.94 107.54 315.74 107.56 315.53 107.59 315.33 107.62 315.13 107.65 314.93 107.67 314.73 107.70 314.54 107.73 314.34 107.76 314.14 107.78 313.95 107.81 313.75 107.84 313.56 107.87 313.36 107.90 313.17 107.93 312.98 107.96 312.79 107.99 312.60 108.02 312.41 108.04 312.22 108.07 312.03 108.10 311.84 108.13 311.66 108.16 311.47 108.19 311.29 108.22 311.10 108.25 310.92 108.29 310.74 108.32 310.55 108.35 310.37 108.38 310.19 108.41 310.01 108.44 309.84 108.47 309.66 108.50 309.48 108.53 309.31 108.57 309.13 108.60 308.96 108.63 308.79 108.66 308.61 108.69 308.44 108.73 308.27 108.76 308.10 108.79 307.93 108.83 307.77 108.86 307.60 108.89 307.43 108.92 307.27 108.96 307.10 108.99 306.94 109.02 306.78 109.06 306.62 109.09 306.46 109.13 306.30 109.16 306.14 109.19 305.98 109.23 305.82 109.26 305.67 109.30 305.51 109.33 305.36 109.37 305.21 109.40 305.05 109.44 304.90 109.47 304.75 109.51 304.60 109.54 304.45 109.58 304.31 109.61 304.16 109.65 304.01 109.69 303.87 109.72 303.73 109.76 303.58 109.79 303.44 109.83 303.30 109.87 303.16 109.90 303.02 109.94 302.89 109.98M439.47 109.91 439.27 109.85 439.06 109.80 438.86 109.75 438.65 109.70 438.45 109.65 438.24 109.59 438.03 109.54 437.82 109.49 437.60 109.44 437.39 109.39 437.18 109.34 436.96 109.29 436.74 109.23 436.53 109.18 436.31 109.13 436.09 109.08 435.87 109.03 435.64 108.98 435.42 108.93 435.19 108.88 434.97 108.83 434.74 108.78 434.51 108.73 434.28 108.69 434.05 108.64 433.82 108.59 433.59 108.54 433.35 108.49 433.12 108.44 432.88 108.39 432.64 108.35 432.40 108.30 432.16 108.25 431.92 108.20 431.68 108.15 431.44 108.11 431.19 108.06 430.95 108.01 430.70 107.97 430.46 107.92 430.21 107.87 429.96 107.83 429.71 107.78 429.46 107.74 429.21 107.69 428.95 107.64 428.70 107.60 428.44 107.55 428.19 107.51 427.93 107.46 427.67 107.42 427.41 107.37 427.15 107.33 426.89 107.28 426.63 107.24 426.36 107.20 426.10 107.15 425.83 107.11 425.57 107.07 425.30 107.02 425.03 106.98 424.76 106.94 424.49 106.89 424.22 106.85 423.95 106.81 423.68 106.77 423.40 106.72 423.13 106.68 422.85 106.64 422.58 106.60 422.30 106.56 422.02 106.52 421.74 106.47 421.46 106.43 421.18 106.39 420.90 106.35 420.62 106.31 420.33 106.27 420.05 106.23 419.76 106.19 419.48 106.15 419.19 106.11 418.90 106.07 418.61 106.03 418.32 106.00 418.03 105.96 417.74 105.92 417.45 105.88 417.16 105.84 416.87 105.80 416.57 105.77 416.28 105.73 415.98 105.69 415.68 105.65 415.39 105.62 415.09 105.58 414.79 105.54 414.49 105.51 414.19 105.47 413.89 105.44 413.59 105.40 413.28 105.36 412.98 105.33 412.68 105.29 412.37 105.26 412.07 105.22 411.76 105.19 411.45 105.15 411.15 105.12 410.84 105.09 410.53 105.05 410.22 105.02 409.91 104.98 409.60 104.95 409.29 104.92 408.97 104.88 408.66 104.85 408.35 104.82 408.03 104.79 407.72 104.75 407.40 104.72 407.09 104.69 406.77 104.66 406.45 104.63 406.13 104.60 405.81 104.57 405.49 104.53 405.17 104.50 404.85 104.47 404.53 104.44 404.21 104.41 403.89 104.38 403.57 104.35 403.24 104.32 402.92 104.29 402.59 104.27 402.27 104.24 401.94 104.21 401.62 104.18 401.29 104.15 400.96 104.12 400.63 104.10 400.31 104.07 399.98 104.04 399.65 104.01 399.32 103.99 398.99 103.96 398.66 103.93 398.33 103.91 397.99 103.88 397.66 103.85 397.33 103.83 396.99 103.80 396.66 103.78 396.33 103.75 395.99 103.73 395.66 103.70 395.32 103.68 394.98 103.65 394.65 103.63 394.31 103.61 393.97 103.58 393.64 103.56 393.30 103.53 392.96 103.51 392.62 103.49 392.28 103.47 391.94 103.44 391.60 103.42 391.26 103.40 390.92 103.38 390.58 103.36 390.23 103.33 389.89 103.31 389.55 103.29 389.21 103.27 388.86 103.25 388.52 103.23 388.18 103.21 387.83 103.19 387.49 103.17 387.14 103.15 386.80 103.13 386.45 103.11 386.10 103.09 385.76 103.07 385.41 103.06 385.06 103.04 384.72 103.02 384.37 103.00 384.02 102.98 383.67 102.97 383.33 102.95 382.98 102.93 382.63 102.92 382.28 102.90 381.93 102.88 381.58 102.87 381.23 102.85 380.88 102.83 380.53 102.82 380.18 102.80 379.83 102.79 379.48 102.77 379.13 102.76 378.77 102.74 378.42 102.73 378.07 102.72 377.72 102.70 377.37 102.69 377.01 102.68 376.66 102.66 376.31 102.65 375.95 102.64 375.60 102.62 375.25 102.61 374.89 102.60 374.54 102.59 374.19 102.58 373.83 102.57 373.48 102.55 373.12 102.54 372.77 102.53 372.42 102.52 372.06 102.51 371.71 102.50 371.35 102.49 371.00 102.48 370.64 102.47 370.29 102.46 369.93 102.45 369.57 102.44 369.22 102.44 368.86 102.43 368.51 102.42 368.15 102.41 367.80 102.40 367.44 102.40 367.09 102.39 366.73 102.38 366.37 102.37 366.02 102.37 365.66 102.36 365.31 102.36 364.95 102.35 364.59 102.34 364.24 102.34 363.88 102.33 363.52 102.33 363.17 102.32 362.81 102.32 362.46 102.31 362.10 102.31 361.74 102.30 361.39 102.30 361.03 102.30 360.68 102.29 360.32 102.29 359.96 102.29 359.61 102.28 359.25 102.28 358.90 102.28 358.54 102.28 358.18 102.28 357.83 102.27 357.47 102.27 357.12 102.27 356.76 102.27 356.41 102.27 356.05 102.27 355.70 102.27 355.34 102.27 354.99 102.27 354.63 102.27 354.28 102.27 353.92 102.27 353.57 102.27 353.22 102.27 352.86 102.27 352.51 102.28 352.15 102.28 351.80 102.28 351.45 102.28 351.09 102.28 350.74 102.29 350.39 102.29 350.03 102.29 349.68 102.30 349.33 102.30 348.98 102.30 348.63 102.31 348.27 102.31 347.92 102.32 347.57 102.32 347.22 102.33 346.87 102.33 346.52 102.34 346.17 102.34 345.82 102.35 345.47 102.35 345.12 102.36 344.77 102.37 344.42 102.37 344.07 102.38 343.72 102.39 343.37 102.39 343.02 102.40 342.68 102.41 342.33 102.42 341.98 102.42 341.63 102.43 341.29 102.44 340.94 102.45 340.59 102.46 340.25 102.47 339.90 102.48 339.56 102.49 339.21 102.50 338.87 102.51 338.52 102.52 338.18 102.53 337.84 102.54 337.49 102.55 337.15 102.56 336.81 102.57 336.46 102.58 336.12 102.60 335.78 102.61 335.44 102.62 335.10 102.63 334.76 102.64 334.42 102.66 334.08 102.67 333.74 102.68 333.40 102.70 333.06 102.71 332.73 102.73 332.39 102.74 332.05 102.75 331.71 102.77 331.38 102.78 331.04 102.80 330.71 102.81 330.37 102.83 330.04 102.84 329.70 102.86 329.37 102.88 329.04 102.89 328.70 102.91 328.37 102.93 328.04 102.94 327.71 102.96 327.38 102.98 327.05 102.99 326.72 103.01 326.39 103.03 326.06 103.05 325.73 103.07 325.41 103.09 325.08 103.10 324.75 103.12 324.43 103.14 324.10 103.16 323.78 103.18 323.45 103.20 323.13 103.22 322.81 103.24 322.48 103.26 322.16 103.28 321.84 103.30 321.52 103.33 321.20 103.35 320.88 103.37 320.56 103.39 320.24 103.41 319.92 103.43 319.61 103.46 319.29 103.48 318.97 103.50 318.66 103.53 318.34 103.55 318.03 103.57 317.71 103.60 317.40 103.62 317.09 103.64 316.78 103.67 316.47 103.69 316.16 103.72 315.85 103.74 315.54 103.77 315.23 103.79 314.92 103.82 314.61 103.84 314.31 103.87 314.00 103.90 313.70 103.92 313.39 103.95 313.09 103.98 312.79 104.00 312.48 104.03 312.18 104.06 311.88 104.08 311.58 104.11 311.28 104.14 310.98 104.17 310.69 104.20 310.39 104.23 310.09 104.25 309.80 104.28 309.50 104.31 309.21 104.34 308.92 104.37 308.62 104.40 308.33 104.43 308.04 104.46 307.75 104.49 307.46 104.52 307.17 104.55 306.89 104.58 306.60 104.61 306.31 104.65 306.03 104.68 305.74 104.71 305.46 104.74 305.18 104.77 304.90 104.81 304.62 104.84 304.34 104.87 304.06 104.90 303.78 104.94 303.50 104.97 303.22 105.00 302.95 105.04 302.67 105.07 302.40 105.11 302.13 105.14 301.85 105.17 301.58 105.21 301.31 105.24 301.04 105.28 300.77 105.31 300.51 105.35 300.24 105.39 299.97 105.42 299.71 105.46 299.45 105.49 299.18 105.53 298.92 105.57 298.66 105.60 298.40 105.64 298.14 105.68 297.88 105.71 297.62 105.75 297.37 105.79 297.11 105.83 296.86 105.87 296.60 105.90 296.35 105.94 296.10 105.98 295.85 106.02 295.60 106.06 295.35 106.10 295.11 106.14 294.86 106.18 294.61 106.22 294.37 106.26 294.13 106.30 293.88 106.34 293.64 106.38 293.40 106.42 293.16 106.46 292.93 106.50 292.69 106.54 292.45 106.58 292.22 106.62 291.99 106.66 291.75 106.71 291.52 106.75 291.29 106.79 291.06 106.83 290.83 106.88 290.61 106.92 290.38 106.96 290.16 107.00 289.93 107.05 289.71 107.09 289.49 107.13 289.27 107.18 289.05 107.22 288.83 107.27 288.61 107.31 288.40 107.36 288.18 107.40 287.97 107.44 287.76 107.49 287.55 107.53 287.34 107.58 287.13 107.63 286.92 107.67 286.71 107.72 286.51 107.76 286.30 107.81 286.10 107.86 285.90 107.90 285.70 107.95 285.50 107.99 285.30 108.04 285.11 108.09 284.91 108.14 284.72 108.18 284.52 108.23 284.33 108.28 284.14 108.33 283.95 108.37M458.21 108.69 457.95 108.62 457.69 108.56 457.42 108.50 457.16 108.43 456.89 108.37 456.62 108.30 456.35 108.24 456.08 108.18 455.81 108.12 455.54 108.05 455.26 107.99 454.99 107.93 454.71 107.86 454.43 107.80 454.15 107.74 453.87 107.68 453.58 107.62 453.30 107.56 453.01 107.50 452.73 107.43 452.44 107.37 452.15 107.31 451.85 107.25 451.56 107.19 451.27 107.13 450.97 107.07 450.68 107.01 450.38 106.95 450.08 106.89 449.78 106.84 449.48 106.78 449.17 106.72 448.87 106.66 448.56 106.60 448.26 106.54 447.95 106.49 447.64 106.43 447.33 106.37 447.01 106.31 446.70 106.26 446.39 106.20 446.07 106.14 445.75 106.09 445.44 106.03 445.12 105.98 444.80 105.92 444.48 105.87 444.15 105.81 443.83 105.75 443.50 105.70 443.18 105.65 442.85 105.59 442.52 105.54 442.19 105.48 441.86 105.43 441.53 105.38 441.20 105.32 440.86 105.27 440.53 105.22 440.19 105.16 439.85 105.11 439.51 105.06 439.18 105.01 438.83 104.96 438.49 104.90 438.15 104.85 437.81 104.80 437.46 104.75 437.12 104.70 436.77 104.65 436.42 104.60 436.07 104.55 435.72 104.50 435.37 104.45 435.02 104.40 434.67 104.35 434.31 104.30 433.96 104.25 433.60 104.21 433.24 104.16 432.89 104.11 432.53 104.06 432.17 104.01 431.81 103.97 431.45 103.92 431.08 103.87 430.72 103.83 430.36 103.78 429.99 103.73 429.62 103.69 429.26 103.64 428.89 103.60 428.52 103.55 428.15 103.51 427.78 103.46 427.41 103.42 427.04 103.37 426.66 103.33 426.29 103.28 425.91 103.24 425.54 103.20 425.16 103.15 424.78 103.11 424.40 103.07 424.03 103.03 423.65 102.98 423.27 102.94 422.88 102.90 422.50 102.86 422.12 102.82 421.73 102.78 421.35 102.74 420.96 102.70 420.58 102.66 420.19 102.62 419.80 102.58 419.42 102.54 419.03 102.50 418.64 102.46 418.25 102.42 417.86 102.38 417.46 102.34 417.07 102.30 416.68 102.27 416.28 102.23 415.89 102.19 415.49 102.15 415.10 102.12 414.70 102.08 414.30 102.04 413.90 102.01 413.51 101.97 413.11 101.94 412.71 101.90 412.31 101.87 411.90 101.83 411.50 101.80 411.10 101.76 410.70 101.73 410.29 101.69 409.89 101.66 409.48 101.63 409.08 101.59 408.67 101.56 408.27 101.53 407.86 101.50 407.45 101.46 407.04 101.43 406.63 101.40 406.22 101.37 405.81 101.34 405.40 101.31 404.99 101.28 404.58 101.24 404.17 101.21 403.76 101.18 403.34 101.15 402.93 101.13 402.51 101.10 402.10 101.07 401.69 101.04 401.27 101.01 400.85 100.98 400.44 100.95 400.02 100.93 399.60 100.90 399.18 100.87 398.77 100.84 398.35 100.82 397.93 100.79 397.51 100.76 397.09 100.74 396.67 100.71 396.25 100.69 395.83 100.66 395.41 100.64 394.98 100.61 394.56 100.59 394.14 100.56 393.71 100.54 393.29 100.52 392.87 100.49 392.44 100.47 392.02 100.45 391.59 100.42 391.17 100.40 390.74 100.38 390.32 100.36 389.89 100.34 389.46 100.32 389.04 100.29 388.61 100.27 388.18 100.25 387.75 100.23 387.33 100.21 386.90 100.19 386.47 100.17 386.04 100.15 385.61 100.13 385.18 100.12 384.75 100.10 384.32 100.08 383.89 100.06 383.46 100.04 383.03 100.02 382.60 100.01 382.17 99.99 381.74 99.97 381.31 99.96 380.87 99.94 380.44 99.93 380.01 99.91 379.58 99.89 379.14 99.88 378.71 99.86 378.28 99.85 377.85 99.83 377.41 99.82 376.98 99.81 376.55 99.79 376.11 99.78 375.68 99.77 375.24 99.75 374.81 99.74 374.38 99.73 373.94 99.72 373.51 99.70 373.07 99.69 372.64 99.68 372.20 99.67 371.77 99.66 371.33 99.65 370.90 99.64 370.46 99.63 370.03 99.62 369.59 99.61 369.16 99.60 368.72 99.59 368.29 99.58 367.85 99.57 367.42 99.57 366.98 99.56 366.54 99.55 366.11 99.54 365.67 99.53 365.24 99.53 364.80 99.52 364.37 99.51 363.93 99.51 363.49 99.50 363.06 99.50 362.62 99.49 362.19 99.49 361.75 99.48 361.32 99.48 360.88 99.47 360.45 99.47 360.01 99.46 359.57 99.46 359.14 99.46 358.70 99.45 358.27 99.45 357.83 99.45 357.40 99.45 356.96 99.45 356.53 99.44 356.09 99.44 355.66 99.44 355.23 99.44 354.79 99.44 354.36 99.44 353.92 99.44 353.49 99.44 353.06 99.44 352.62 99.44 352.19 99.44 351.75 99.44 351.32 99.44 350.89 99.44 350.46 99.45 350.02 99.45 349.59 99.45 349.16 99.45 348.73 99.46 348.29 99.46 347.86 99.46 347.43 99.47 347.00 99.47 346.57 99.48 346.14 99.48 345.71 99.48 345.28 99.49 344.85 99.49 344.42 99.50 343.99 99.51 343.56 99.51 343.13 99.52 342.70 99.52 342.27 99.53 341.84 99.54 341.41 99.55 340.98 99.55 340.56 99.56 340.13 99.57 339.70 99.58 339.28 99.59 338.85 99.60 338.42 99.61 338.00 99.61 337.57 99.62 337.15 99.63 336.72 99.64 336.30 99.65 335.87 99.67 335.45 99.68 335.03 99.69 334.60 99.70 334.18 99.71 333.76 99.72 333.34 99.74 332.92 99.75 332.49 99.76 332.07 99.77 331.65 99.79 331.23 99.80 330.81 99.81 330.40 99.83 329.98 99.84 329.56 99.86 329.14 99.87 328.72 99.89 328.31 99.90 327.89 99.92 327.47 99.93 327.06 99.95 326.64 99.97 326.23 99.98 325.82 100.00 325.40 100.02 324.99 100.04 324.58 100.05 324.16 100.07 323.75 100.09 323.34 100.11 322.93 100.13 322.52 100.15 322.11 100.16 321.70 100.18 321.29 100.20 320.89 100.22 320.48 100.24 320.07 100.26 319.67 100.29 319.26 100.31 318.85 100.33 318.45 100.35 318.05 100.37 317.64 100.39 317.24 100.42 316.84 100.44 316.44 100.46 316.04 100.48 315.64 100.51 315.24 100.53 314.84 100.55 314.44 100.58 314.04 100.60 313.64 100.63 313.25 100.65 312.85 100.68 312.46 100.70 312.06 100.73 311.67 100.75 311.27 100.78 310.88 100.81 310.49 100.83 310.10 100.86 309.71 100.89 309.32 100.92 308.93 100.94 308.54 100.97 308.15 101.00 307.77 101.03 307.38 101.06 306.99 101.08 306.61 101.11 306.22 101.14 305.84 101.17 305.46 101.20 305.08 101.23 304.70 101.26 304.32 101.29 303.94 101.32 303.56 101.36 303.18 101.39 302.80 101.42 302.43 101.45 302.05 101.48 301.68 101.52 301.30 101.55 300.93 101.58 300.56 101.61 300.19 101.65 299.82 101.68 299.45 101.71 299.08 101.75 298.71 101.78 298.34 101.82 297.98 101.85 297.61 101.89 297.25 101.92 296.88 101.96 296.52 101.99 296.16 102.03 295.80 102.07 295.44 102.10 295.08 102.14 294.72 102.18 294.36 102.21 294.01 102.25 293.65 102.29 293.30 102.33 292.94 102.37 292.59 102.40 292.24 102.44 291.89 102.48 291.54 102.52 291.19 102.56 290.84 102.60 290.50 102.64 290.15 102.68 289.81 102.72 289.46 102.76 289.12 102.80 288.78 102.84 288.44 102.88 288.10 102.93 287.76 102.97 287.42 103.01 287.09 103.05 286.75 103.09 286.42 103.14 286.08 103.18 285.75 103.22 285.42 103.27 285.09 103.31 284.76 103.36 284.43 103.40 284.11 103.44 283.78 103.49 283.45 103.53 283.13 103.58 282.81 103.62 282.49 103.67 282.17 103.72 281.85 103.76 281.53 103.81 281.21 103.85 280.90 103.90 280.58 103.95 280.27 103.99 279.96 104.04 279.65 104.09 279.34 104.14 279.03 104.19 278.72 104.23 278.42 104.28 278.11 104.33 277.81 104.38 277.51 104.43 277.20 104.48 276.90 104.53 276.61 104.58 276.31 104.63 276.01 104.68 275.72 104.73 275.42 104.78 275.13 104.83 274.84 104.88 274.55 104.93 274.26 104.99 273.97 105.04 273.69 105.09 273.40 105.14 273.12 105.20 272.84 105.25 272.56 105.30 272.28 105.35 272.00 105.41 271.72 105.46 271.45 105.52 271.17 105.57 270.90 105.62 270.63 105.68 270.36 105.73 270.09 105.79 269.82 105.84 269.56 105.90 269.29 105.95 269.03 106.01 268.77 106.07 268.51 106.12 268.25 106.18 267.99 106.23 267.74 106.29 267.48 106.35 267.23 106.41 266.98 106.46 266.73 106.52 266.48 106.58 266.23 106.64 265.98 106.70 265.74 106.75 265.50 106.81M476.59 107.50 476.27 107.42 475.95 107.34 475.62 107.27 475.29 107.19 474.97 107.12 474.64 107.04 474.31 106.97 473.97 106.89 473.64 106.82 473.30 106.75 472.96 106.67 472.62 106.60 472.28 106.52 471.94 106.45 471.60 106.38 471.25 106.31 470.90 106.23 470.56 106.16 470.21 106.09 469.85 106.02 469.50 105.95 469.15 105.88 468.79 105.81 468.43 105.73 468.07 105.66 467.71 105.59 467.35 105.52 466.99 105.46 466.62 105.39 466.26 105.32 465.89 105.25 465.52 105.18 465.15 105.11 464.78 105.04 464.40 104.97 464.03 104.91 463.65 104.84 463.27 104.77 462.90 104.71 462.52 104.64 462.13 104.57 461.75 104.51 461.37 104.44 460.98 104.38 460.59 104.31 460.21 104.24 459.82 104.18 459.43 104.12 459.03 104.05 458.64 103.99 458.25 103.92 457.85 103.86 457.45 103.80 457.05 103.73 456.65 103.67 456.25 103.61 455.85 103.55 455.45 103.48 455.04 103.42 454.64 103.36 454.23 103.30 453.82 103.24 453.41 103.18 453.00 103.12 452.59 103.06 452.18 103.00 451.76 102.94 451.35 102.88 450.93 102.82 450.52 102.76 450.10 102.70 449.68 102.64 449.26 102.59 448.84 102.53 448.41 102.47 447.99 102.41 447.56 102.36 447.14 102.30 446.71 102.24 446.28 102.19 445.85 102.13 445.42 102.08 444.99 102.02 444.56 101.97 444.13 101.91 443.69 101.86 443.26 101.80 442.82 101.75 442.38 101.70 441.94 101.64 441.51 101.59 441.07 101.54 440.62 101.49 440.18 101.43 439.74 101.38 439.29 101.33 438.85 101.28 438.40 101.23 437.96 101.18 437.51 101.13 437.06 101.08 436.61 101.03 436.16 100.98 435.71 100.93 435.26 100.88 434.80 100.83 434.35 100.78 433.90 100.73 433.44 100.68 432.98 100.64 432.53 100.59 432.07 100.54 431.61 100.49 431.15 100.45 430.69 100.40 430.23 100.36 429.77 100.31 429.30 100.26 428.84 100.22 428.37 100.17 427.91 100.13 427.44 100.08 426.98 100.04 426.51 100.00 426.04 99.95 425.57 99.91 425.10 99.87 424.63 99.82 424.16 99.78 423.69 99.74 423.22 99.70 422.74 99.66 422.27 99.62 421.79 99.57 421.32 99.53 420.84 99.49 420.37 99.45 419.89 99.41 419.41 99.37 418.93 99.34 418.45 99.30 417.97 99.26 417.49 99.22 417.01 99.18 416.53 99.14 416.05 99.11 415.57 99.07 415.08 99.03 414.60 99.00 414.11 98.96 413.63 98.92 413.14 98.89 412.66 98.85 412.17 98.82 411.68 98.78 411.20 98.75 410.71 98.71 410.22 98.68 409.73 98.65 409.24 98.61 408.75 98.58 408.26 98.55 407.77 98.51 407.27 98.48 406.78 98.45 406.29 98.42 405.80 98.39 405.30 98.36 404.81 98.33 404.31 98.29 403.82 98.26 403.32 98.23 402.83 98.21 402.33 98.18 401.83 98.15 401.33 98.12 400.84 98.09 400.34 98.06 399.84 98.03 399.34 98.01 398.84 97.98 398.34 97.95 397.84 97.93 397.34 97.90 396.84 97.87 396.34 97.85 395.84 97.82 395.34 97.80 394.83 97.77 394.33 97.75 393.83 97.72 393.33 97.70 392.82 97.68 392.32 97.65 391.81 97.63 391.31 97.61 390.81 97.58 390.30 97.56 389.80 97.54 389.29 97.52 388.78 97.50 388.28 97.48 387.77 97.45 387.27 97.43 386.76 97.41 386.25 97.39 385.75 97.37 385.24 97.36 384.73 97.34 384.22 97.32 383.71 97.30 383.21 97.28 382.70 97.26 382.19 97.25 381.68 97.23 381.17 97.21 380.66 97.20 380.15 97.18 379.64 97.16 379.13 97.15 378.62 97.13 378.11 97.12 377.60 97.10 377.09 97.09 376.58 97.07 376.07 97.06 375.56 97.05 375.05 97.03 374.54 97.02 374.03 97.01 373.52 96.99 373.01 96.98 372.50 96.97 371.99 96.96 371.48 96.95 370.97 96.94 370.45 96.93 369.94 96.92 369.43 96.91 368.92 96.90 368.41 96.89 367.90 96.88 367.39 96.87 366.87 96.86 366.36 96.85 365.85 96.84 365.34 96.84 364.83 96.83 364.32 96.82 363.81 96.81 363.29 96.81 362.78 96.80 362.27 96.80 361.76 96.79 361.25 96.79 360.74 96.78 360.23 96.78 359.72 96.77 359.20 96.77 358.69 96.76 358.18 96.76 357.67 96.76 357.16 96.75 356.65 96.75 356.14 96.75 355.63 96.75 355.12 96.75 354.61 96.74 354.10 96.74 353.59 96.74 353.08 96.74 352.57 96.74 352.06 96.74 351.55 96.74 351.04 96.74 350.53 96.74 350.02 96.74 349.52 96.75 349.01 96.75 348.50 96.75 347.99 96.75 347.48 96.76 346.98 96.76 346.47 96.76 345.96 96.77 345.45 96.77 344.95 96.77 344.44 96.78 343.93 96.78 343.43 96.79 342.92 96.79 342.42 96.80 341.91 96.81 341.41 96.81 340.90 96.82 340.40 96.83 339.89 96.83 339.39 96.84 338.89 96.85 338.38 96.86 337.88 96.86 337.38 96.87 336.88 96.88 336.37 96.89 335.87 96.90 335.37 96.91 334.87 96.92 334.37 96.93 333.87 96.94 333.37 96.95 332.87 96.97 332.37 96.98 331.87 96.99 331.37 97.00 330.88 97.01 330.38 97.03 329.88 97.04 329.38 97.05 328.89 97.07 328.39 97.08 327.90 97.10 327.40 97.11 326.91 97.13 326.41 97.14 325.92 97.16 325.42 97.17 324.93 97.19 324.44 97.21 323.95 97.22 323.46 97.24 322.96 97.26 322.47 97.27 321.98 97.29 321.49 97.31 321.01 97.33 320.52 97.35 320.03 97.37 319.54 97.39 319.05 97.41 318.57 97.43 318.08 97.45 317.60 97.47 317.11 97.49 316.63 97.51 316.14 97.53 315.66 97.55 315.18 97.57 314.70 97.60 314.21 97.62 313.73 97.64 313.25 97.67 312.77 97.69 312.29 97.71 311.82 97.74 311.34 97.76 310.86 97.79 310.38 97.81 309.91 97.84 309.43 97.86 308.96 97.89 308.48 97.91 308.01 97.94 307.54 97.97 307.07 98.00 306.60 98.02 306.13 98.05 305.66 98.08 305.19 98.11 304.72 98.14 304.25 98.16 303.78 98.19 303.32 98.22 302.85 98.25 302.39 98.28 301.92 98.31 301.46 98.34 301.00 98.37 300.53 98.41 300.07 98.44 299.61 98.47 299.15 98.50 298.69 98.53 298.24 98.57 297.78 98.60 297.32 98.63 296.87 98.67 296.41 98.70 295.96 98.73 295.50 98.77 295.05 98.80 294.60 98.84 294.15 98.87 293.70 98.91 293.25 98.95 292.80 98.98 292.36 99.02 291.91 99.05 291.46 99.09 291.02 99.13 290.58 99.17 290.13 99.20 289.69 99.24 289.25 99.28 288.81 99.32 288.37 99.36 287.93 99.40 287.50 99.44 287.06 99.48 286.62 99.52 286.19 99.56 285.76 99.60 285.32 99.64 284.89 99.68 284.46 99.72 284.03 99.77 283.60 99.81 283.18 99.85 282.75 99.89 282.32 99.94 281.90 99.98 281.48 100.02 281.05 100.07 280.63 100.11 280.21 100.16 279.79 100.20 279.37 100.25 278.96 100.29 278.54 100.34 278.13 100.38 277.71 100.43 277.30 100.48 276.89 100.52 276.48 100.57 276.07 100.62 275.66 100.66 275.25 100.71 274.84 100.76 274.44 100.81 274.04 100.86 273.63 100.91 273.23 100.96 272.83 101.01 272.43 101.06 272.03 101.11 271.64 101.16 271.24 101.21 270.85 101.26 270.45 101.31 270.06 101.36 269.67 101.41 269.28 101.46 268.89 101.52 268.50 101.57 268.12 101.62 267.73 101.68 267.35 101.73 266.97 101.78 266.59 101.84 266.21 101.89 265.83 101.95 265.45 102.00 265.08 102.06 264.70 102.11 264.33 102.17 263.96 102.22 263.59 102.28 263.22 102.34 262.85 102.39 262.48 102.45 262.12 102.51 261.75 102.56 261.39 102.62 261.03 102.68 260.67 102.74 260.31 102.80 259.96 102.86 259.60 102.91 259.25 102.97 258.89 103.03 258.54 103.09 258.19 103.15 257.84 103.21 257.50 103.28 257.15 103.34 256.81 103.40 256.47 103.46 256.12 103.52 255.78 103.58 255.45 103.65 255.11 103.71 254.78 103.77 254.44 103.83 254.11 103.90 253.78 103.96 253.45 104.03 253.12 104.09 252.80 104.15 252.47 104.22 252.15 104.28 251.83 104.35 251.51 104.41 251.19 104.48 250.87 104.55 250.56 104.61 250.25 104.68 249.93 104.75 249.62 104.81 249.32 104.88 249.01 104.95 248.70 105.02 248.40 105.08 248.10 105.15 247.80 105.22 247.50 105.29M494.62 106.32 494.24 106.24 493.85 106.15 493.46 106.06 493.07 105.98 492.68 105.89 492.29 105.81 491.89 105.72 491.49 105.64 491.09 105.55 490.69 105.47 490.29 105.38 489.89 105.30 489.48 105.21 489.07 105.13 488.66 105.05 488.25 104.96 487.84 104.88 487.43 104.80 487.01 104.72 486.59 104.64 486.17 104.55 485.75 104.47 485.33 104.39 484.91 104.31 484.48 104.23 484.05 104.15 483.62 104.07 483.19 103.99 482.76 103.91 482.33 103.83 481.89 103.76 481.46 103.68 481.02 103.60 480.58 103.52 480.14 103.45 479.70 103.37 479.25 103.29 478.81 103.22 478.36 103.14 477.91 103.06 477.46 102.99 477.01 102.91 476.56 102.84 476.11 102.76 475.65 102.69 475.19 102.61 474.74 102.54 474.28 102.47 473.82 102.39 473.35 102.32 472.89 102.25 472.43 102.18 471.96 102.11 471.49 102.03 471.02 101.96 470.55 101.89 470.08 101.82 469.61 101.75 469.13 101.68 468.66 101.61 468.18 101.54 467.71 101.47 467.23 101.40 466.75 101.34 466.26 101.27 465.78 101.20 465.30 101.13 464.81 101.07 464.33 101.00 463.84 100.93 463.35 100.87 462.86 100.80 462.37 100.73 461.88 100.67 461.38 100.60 460.89 100.54 460.39 100.48 459.90 100.41 459.40 100.35 458.90 100.28 458.40 100.22 457.90 100.16 457.40 100.10 456.89 100.03 456.39 99.97 455.88 99.91 455.38 99.85 454.87 99.79 454.36 99.73 453.85 99.67 453.34 99.61 452.83 99.55 452.32 99.49 451.80 99.43 451.29 99.37 450.77 99.31 450.26 99.26 449.74 99.20 449.22 99.14 448.70 99.08 448.18 99.03 447.66 98.97 447.14 98.91 446.61 98.86 446.09 98.80 445.56 98.75 445.04 98.69 444.51 98.64 443.98 98.59 443.46 98.53 442.93 98.48 442.40 98.43 441.87 98.37 441.33 98.32 440.80 98.27 440.27 98.22 439.73 98.16 439.20 98.11 438.66 98.06 438.12 98.01 437.59 97.96 437.05 97.91 436.51 97.86 435.97 97.81 435.43 97.76 434.89 97.72 434.35 97.67 433.80 97.62 433.26 97.57 432.72 97.52 432.17 97.48 431.62 97.43 431.08 97.38 430.53 97.34 429.98 97.29 429.43 97.25 428.89 97.20 428.34 97.16 427.78 97.11 427.23 97.07 426.68 97.03 426.13 96.98 425.58 96.94 425.02 96.90 424.47 96.85 423.91 96.81 423.36 96.77 422.80 96.73 422.24 96.69 421.69 96.65 421.13 96.61 420.57 96.57 420.01 96.53 419.45 96.49 418.89 96.45 418.33 96.41 417.77 96.37 417.21 96.33 416.65 96.30 416.08 96.26 415.52 96.22 414.96 96.19 414.39 96.15 413.83 96.11 413.26 96.08 412.70 96.04 412.13 96.01 411.56 95.97 411.00 95.94 410.43 95.90 409.86 95.87 409.29 95.84 408.72 95.80 408.15 95.77 407.58 95.74 407.01 95.71 406.44 95.67 405.87 95.64 405.30 95.61 404.73 95.58 404.16 95.55 403.58 95.52 403.01 95.49 402.44 95.46 401.86 95.43 401.29 95.40 400.71 95.37 400.14 95.35 399.56 95.32 398.99 95.29 398.41 95.26 397.84 95.24 397.26 95.21 396.68 95.18 396.11 95.16 395.53 95.13 394.95 95.11 394.37 95.08 393.80 95.06 393.22 95.03 392.64 95.01 392.06 94.99 391.48 94.96 390.90 94.94 390.32 94.92 389.74 94.90 389.16 94.87 388.58 94.85 388.00 94.83 387.42 94.81 386.84 94.79 386.26 94.77 385.68 94.75 385.10 94.73 384.52 94.71 383.94 94.69 383.35 94.67 382.77 94.66 382.19 94.64 381.61 94.62 381.02 94.60 380.44 94.59 379.86 94.57 379.28 94.55 378.69 94.54 378.11 94.52 377.53 94.51 376.94 94.49 376.36 94.48 375.78 94.46 375.19 94.45 374.61 94.44 374.03 94.42 373.44 94.41 372.86 94.40 372.28 94.39 371.69 94.37 371.11 94.36 370.52 94.35 369.94 94.34 369.36 94.33 368.77 94.32 368.19 94.31 367.61 94.30 367.02 94.29 366.44 94.28 365.85 94.27 365.27 94.26 364.69 94.26 364.10 94.25 363.52 94.24 362.93 94.24 362.35 94.23 361.77 94.22 361.18 94.22 360.60 94.21 360.02 94.21 359.43 94.20 358.85 94.20 358.27 94.19 357.68 94.19 357.10 94.18 356.52 94.18 355.94 94.18 355.35 94.18 354.77 94.17 354.19 94.17 353.61 94.17 353.02 94.17 352.44 94.17 351.86 94.17 351.28 94.17 350.70 94.17 350.12 94.17 349.54 94.17 348.95 94.17 348.37 94.17 347.79 94.17 347.21 94.17 346.63 94.18 346.05 94.18 345.47 94.18 344.89 94.19 344.31 94.19 343.74 94.19 343.16 94.20 342.58 94.20 342.00 94.21 341.42 94.21 340.84 94.22 340.27 94.23 339.69 94.23 339.11 94.24 338.54 94.25 337.96 94.25 337.38 94.26 336.81 94.27 336.23 94.28 335.66 94.29 335.08 94.30 334.51 94.31 333.94 94.31 333.36 94.33 332.79 94.34 332.22 94.35 331.64 94.36 331.07 94.37 330.50 94.38 329.93 94.39 329.36 94.40 328.79 94.42 328.22 94.43 327.65 94.44 327.08 94.46 326.51 94.47 325.94 94.49 325.37 94.50 324.80 94.52 324.23 94.53 323.67 94.55 323.10 94.56 322.53 94.58 321.97 94.60 321.40 94.61 320.84 94.63 320.27 94.65 319.71 94.67 319.15 94.69 318.59 94.70 318.02 94.72 317.46 94.74 316.90 94.76 316.34 94.78 315.78 94.80 315.22 94.82 314.66 94.84 314.10 94.87 313.54 94.89 312.99 94.91 312.43 94.93 311.87 94.95 311.32 94.98 310.76 95.00 310.21 95.02 309.65 95.05 309.10 95.07 308.55 95.10 308.00 95.12 307.44 95.15 306.89 95.17 306.34 95.20 305.79 95.23 305.24 95.25 304.70 95.28 304.15 95.31 303.60 95.33 303.05 95.36 302.51 95.39 301.96 95.42 301.42 95.45 300.87 95.48 300.33 95.51 299.79 95.54 299.25 95.57 298.71 95.60 298.17 95.63 297.63 95.66 297.09 95.69 296.55 95.72 296.01 95.76 295.48 95.79 294.94 95.82 294.41 95.86 293.87 95.89 293.34 95.92 292.81 95.96 292.27 95.99 291.74 96.03 291.21 96.06 290.68 96.10 290.16 96.13 289.63 96.17 289.10 96.21 288.57 96.24 288.05 96.28 287.53 96.32 287.00 96.36 286.48 96.40 285.96 96.43 285.44 96.47 284.92 96.51 284.40 96.55 283.88 96.59 283.36 96.63 282.85 96.67 282.33 96.71 281.81 96.75 281.30 96.80 280.79 96.84 280.28 96.88 279.77 96.92 279.26 96.97 278.75 97.01 278.24 97.05 277.73 97.10 277.23 97.14 276.72 97.19 276.22 97.23 275.71 97.28 275.21 97.32 274.71 97.37 274.21 97.41 273.71 97.46 273.21 97.51 272.72 97.55 272.22 97.60 271.73 97.65 271.23 97.70 270.74 97.74 270.25 97.79 269.76 97.84 269.27 97.89 268.78 97.94 268.29 97.99 267.81 98.04 267.32 98.09 266.84 98.14 266.36 98.20 265.88 98.25 265.40 98.30 264.92 98.35 264.44 98.40 263.96 98.46 263.49 98.51 263.01 98.56 262.54 98.62 262.07 98.67 261.60 98.73 261.13 98.78 260.66 98.84 260.19 98.89 259.73 98.95 259.26 99.00 258.80 99.06 258.34 99.12 257.87 99.18 257.42 99.23 256.96 99.29 256.50 99.35 256.04 99.41 255.59 99.47 255.14 99.52 254.68 99.58 254.23 99.64 253.79 99.70 253.34 99.76 252.89 99.83 252.45 99.89 252.00 99.95 251.56 100.01 251.12 100.07 250.68 100.13 250.24 100.20 249.81 100.26 249.37 100.32 248.94 100.39 248.50 100.45 248.07 100.51 247.64 100.58 247.22 100.64 246.79 100.71 246.36 100.77 245.94 100.84 245.52 100.91 245.10 100.97 244.68 101.04 244.26 101.11 243.84 101.17 243.43 101.24 243.02 101.31 242.61 101.38 242.20 101.45 241.79 101.51 241.38 101.58 240.97 101.65 240.57 101.72 240.17 101.79 239.77 101.86 239.37 101.93 238.97 102.01 238.58 102.08 238.18 102.15 237.79 102.22 237.40 102.29 237.01 102.37 236.62 102.44 236.24 102.51 235.85 102.59 235.47 102.66 235.09 102.73 234.71 102.81 234.33 102.88 233.96 102.96 233.58 103.03 233.21 103.11 232.84 103.18 232.47 103.26 232.11 103.34 231.74 103.41 231.38 103.49 231.02 103.57 230.66 103.65 230.30 103.72 229.94 103.80M512.31 105.18 511.86 105.08 511.41 104.98 510.96 104.88 510.50 104.79 510.04 104.69 509.58 104.59 509.12 104.50 508.66 104.40 508.19 104.31 507.72 104.21 507.26 104.12 506.78 104.02 506.31 103.93 505.84 103.84 505.36 103.74 504.88 103.65 504.40 103.56 503.92 103.47 503.44 103.37 502.95 103.28 502.47 103.19 501.98 103.10 501.49 103.01 501.00 102.92 500.51 102.83 500.01 102.74 499.51 102.65 499.02 102.56 498.52 102.48 498.01 102.39 497.51 102.30 497.01 102.21 496.50 102.13 495.99 102.04 495.48 101.95 494.97 101.87 494.46 101.78 493.95 101.70 493.43 101.61 492.91 101.53 492.40 101.44 491.88 101.36 491.35 101.28 490.83 101.19 490.31 101.11 489.78 101.03 489.25 100.95 488.73 100.87 488.20 100.78 487.66 100.70 487.13 100.62 486.60 100.54 486.06 100.46 485.52 100.38 484.99 100.30 484.45 100.22 483.91 100.15 483.36 100.07 482.82 99.99 482.27 99.91 481.73 99.84 481.18 99.76 480.63 99.68 480.08 99.61 479.53 99.53 478.98 99.46 478.42 99.38 477.87 99.31 477.31 99.23 476.76 99.16 476.20 99.09 475.64 99.01 475.08 98.94 474.51 98.87 473.95 98.80 473.38 98.72 472.82 98.65 472.25 98.58 471.68 98.51 471.11 98.44 470.54 98.37 469.97 98.30 469.40 98.23 468.83 98.16 468.25 98.09 467.68 98.03 467.10 97.96 466.52 97.89 465.94 97.82 465.36 97.76 464.78 97.69 464.20 97.63 463.62 97.56 463.03 97.50 462.45 97.43 461.86 97.37 461.27 97.30 460.69 97.24 460.10 97.18 459.51 97.11 458.92 97.05 458.32 96.99 457.73 96.93 457.14 96.86 456.54 96.80 455.95 96.74 455.35 96.68 454.75 96.62 454.15 96.56 453.56 96.50 452.96 96.44 452.35 96.38 451.75 96.33 451.15 96.27 450.55 96.21 449.94 96.15 449.34 96.10 448.73 96.04 448.12 95.98 447.52 95.93 446.91 95.87 446.30 95.82 445.69 95.76 445.08 95.71 444.47 95.66 443.86 95.60 443.24 95.55 442.63 95.50 442.02 95.44 441.40 95.39 440.78 95.34 440.17 95.29 439.55 95.24 438.93 95.19 438.32 95.14 437.70 95.09 437.08 95.04 436.46 94.99 435.83 94.94 435.21 94.89 434.59 94.84 433.97 94.80 433.34 94.75 432.72 94.70 432.09 94.66 431.47 94.61 430.84 94.56 430.22 94.52 429.59 94.47 428.96 94.43 428.33 94.38 427.70 94.34 427.07 94.30 426.44 94.25 425.81 94.21 425.18 94.17 424.55 94.13 423.92 94.08 423.28 94.04 422.65 94.00 422.02 93.96 421.38 93.92 420.75 93.88 420.11 93.84 419.48 93.80 418.84 93.76 418.20 93.72 417.57 93.69 416.93 93.65 416.29 93.61 415.65 93.57 415.01 93.54 414.37 93.50 413.73 93.46 413.09 93.43 412.45 93.39 411.81 93.36 411.17 93.32 410.53 93.29 409.89 93.26 409.25 93.22 408.60 93.19 407.96 93.16 407.32 93.12 406.67 93.09 406.03 93.06 405.38 93.03 404.74 93.00 404.09 92.97 403.45 92.94 402.80 92.91 402.16 92.88 401.51 92.85 400.86 92.82 400.22 92.79 399.57 92.77 398.92 92.74 398.27 92.71 397.63 92.68 396.98 92.66 396.33 92.63 395.68 92.61 395.03 92.58 394.38 92.56 393.73 92.53 393.08 92.51 392.43 92.48 391.78 92.46 391.13 92.44 390.48 92.41 389.83 92.39 389.18 92.37 388.53 92.35 387.88 92.33 387.23 92.30 386.58 92.28 385.93 92.26 385.27 92.24 384.62 92.22 383.97 92.20 383.32 92.19 382.67 92.17 382.01 92.15 381.36 92.13 380.71 92.11 380.06 92.10 379.40 92.08 378.75 92.06 378.10 92.05 377.45 92.03 376.79 92.02 376.14 92.00 375.49 91.99 374.83 91.97 374.18 91.96 373.53 91.95 372.88 91.93 372.22 91.92 371.57 91.91 370.92 91.90 370.26 91.89 369.61 91.87 368.96 91.86 368.30 91.85 367.65 91.84 367.00 91.83 366.34 91.82 365.69 91.82 365.04 91.81 364.39 91.80 363.73 91.79 363.08 91.78 362.43 91.78 361.77 91.77 361.12 91.76 360.47 91.76 359.82 91.75 359.16 91.75 358.51 91.74 357.86 91.74 357.21 91.73 356.56 91.73 355.90 91.72 355.25 91.72 354.60 91.72 353.95 91.72 353.30 91.71 352.65 91.71 352.00 91.71 351.35 91.71 350.70 91.71 350.05 91.71 349.40 91.71 348.75 91.71 348.10 91.71 347.45 91.71 346.80 91.71 346.15 91.71 345.50 91.72 344.85 91.72 344.20 91.72 343.55 91.73 342.91 91.73 342.26 91.73 341.61 91.74 340.96 91.74 340.32 91.75 339.67 91.75 339.02 91.76 338.38 91.77 337.73 91.77 337.08 91.78 336.44 91.79 335.79 91.80 335.15 91.80 334.51 91.81 333.86 91.82 333.22 91.83 332.57 91.84 331.93 91.85 331.29 91.86 330.65 91.87 330.00 91.88 329.36 91.89 328.72 91.90 328.08 91.92 327.44 91.93 326.80 91.94 326.16 91.96 325.52 91.97 324.88 91.98 324.24 92.00 323.61 92.01 322.97 92.03 322.33 92.04 321.69 92.06 321.06 92.07 320.42 92.09 319.79 92.11 319.15 92.12 318.52 92.14 317.88 92.16 317.25 92.18 316.62 92.20 315.98 92.22 315.35 92.24 314.72 92.26 314.09 92.28 313.46 92.30 312.83 92.32 312.20 92.34 311.57 92.36 310.94 92.38 310.31 92.40 309.69 92.43 309.06 92.45 308.43 92.47 307.81 92.50 307.18 92.52 306.56 92.55 305.93 92.57 305.31 92.60 304.69 92.62 304.06 92.65 303.44 92.67 302.82 92.70 302.20 92.73 301.58 92.75 300.96 92.78 300.34 92.81 299.73 92.84 299.11 92.87 298.49 92.90 297.88 92.93 297.26 92.96 296.65 92.99 296.03 93.02 295.42 93.05 294.81 93.08 294.20 93.11 293.58 93.14 292.97 93.18 292.36 93.21 291.76 93.24 291.15 93.28 290.54 93.31 289.93 93.34 289.33 93.38 288.72 93.41 288.12 93.45 287.52 93.49 286.91 93.52 286.31 93.56 285.71 93.60 285.11 93.63 284.51 93.67 283.91 93.71 283.31 93.75 282.72 93.79 282.12 93.82 281.52 93.86 280.93 93.90 280.34 93.94 279.74 93.98 279.15 94.03 278.56 94.07 277.97 94.11 277.38 94.15 276.79 94.19 276.20 94.24 275.62 94.28 275.03 94.32 274.45 94.37 273.86 94.41 273.28 94.46 272.70 94.50 272.12 94.55 271.54 94.59 270.96 94.64 270.38 94.68 269.80 94.73 269.23 94.78 268.65 94.82 268.08 94.87 267.50 94.92 266.93 94.97 266.36 95.02 265.79 95.07 265.22 95.12 264.65 95.17 264.09 95.22 263.52 95.27 262.96 95.32 262.39 95.37 261.83 95.42 261.27 95.48 260.71 95.53 260.15 95.58 259.59 95.63 259.03 95.69 258.48 95.74 257.92 95.80 257.37 95.85 256.82 95.91 256.26 95.96 255.71 96.02 255.16 96.07 254.62 96.13 254.07 96.19 253.52 96.25 252.98 96.30 252.44 96.36 251.90 96.42 251.35 96.48 250.82 96.54 250.28 96.60 249.74 96.66 249.20 96.72 248.67 96.78 248.14 96.84 247.61 96.90 247.07 96.96 246.55 97.02 246.02 97.09 245.49 97.15 244.97 97.21 244.44 97.28 243.92 97.34 243.40 97.40 242.88 97.47 242.36 97.53 241.84 97.60 241.33 97.67 240.81 97.73 240.30 97.80 239.79 97.86 239.28 97.93 238.77 98.00 238.26 98.07 237.75 98.14 237.25 98.20 236.75 98.27 236.25 98.34 235.75 98.41 235.25 98.48 234.75 98.55 234.25 98.62 233.76 98.69 233.27 98.77 232.78 98.84 232.29 98.91 231.80 98.98 231.31 99.06 230.83 99.13 230.34 99.20 229.86 99.28 229.38 99.35 228.90 99.43 228.43 99.50 227.95 99.58 227.48 99.65 227.01 99.73 226.54 99.81 226.07 99.88 225.60 99.96 225.13 100.04 224.67 100.11 224.21 100.19 223.75 100.27 223.29 100.35 222.83 100.43 222.38 100.51 221.92 100.59 221.47 100.67 221.02 100.75 220.57 100.83 220.13 100.91 219.68 101.00 219.24 101.08 218.80 101.16 218.36 101.24 217.92 101.33 217.49 101.41 217.05 101.49 216.62 101.58 216.19 101.66 215.76 101.75 215.33 101.83 214.91 101.92 214.49 102.01 214.07 102.09 213.65 102.18 213.23 102.27 212.82 102.35"/>
<path fill="none" stroke="#4a4a4a" stroke-width="0.7" d="M361.96 101.32 369.54 100.23"/>
<path fill="none" stroke="#b09a3a" stroke-width="0.8" stroke-opacity="0.8" d="M330.85 119.93 330.83 122.28M396.31 120.17 396.24 122.52M314.10 122.63 314.09 125.02M415.14 123.01 415.06 125.41M296.66 125.45 296.66 127.88M434.79 125.97 434.69 128.42M278.51 128.37 278.52 130.86M455.29 129.06 455.18 131.56M259.58 131.43 259.60 133.96M476.71 132.29 476.57 134.84M239.83 134.61 239.87 137.20M499.10 135.67 498.95 138.28M219.20 137.94 219.26 140.58M522.54 139.20 522.37 141.87"/>
<path fill="none" stroke="#4a4a4a" stroke-width="0.8" d="M206.20 280.04 201.39 281.51 196.53 283.00 191.62 284.50 186.67 286.02 181.66 287.56 176.60 289.11 171.49 290.67 166.32 292.26 161.10 293.85 155.83 295.47 150.50 297.10 145.12 298.75 139.68 300.42 134.18 302.10 128.62 303.81 123.00 305.53 117.32 307.27 111.58 309.03 105.78 310.81 99.91 312.60 93.98 314.42 87.98 316.26 81.91 318.12 75.78 320.00 69.58 321.90 63.30 323.82 56.95 325.76 50.53 327.73 44.04 329.72 37.47 331.73 30.82 333.77 24.10 335.83 17.29 337.91M526.26 281.10 528.95 281.87 531.65 282.65 534.37 283.43 537.10 284.22 539.84 285.01 542.60 285.80 545.38 286.60 548.17 287.41 550.97 288.21 553.79 289.02 556.62 289.84 559.47 290.66 562.34 291.49 565.22 292.32 568.11 293.15 571.02 293.99 573.95 294.83 576.89 295.68 579.85 296.53 582.83 297.39 585.82 298.25 588.83 299.11M361.71 114.96 363.73 7.65M359.48 233.08 355.13 234.41 350.73 235.76 346.28 237.12 341.79 238.50 337.24 239.89 332.65 241.30 328.00 242.72 323.31 244.16 318.56 245.62 313.75 247.09 308.89 248.58 303.98 250.08 299.01 251.60 293.98 253.14 288.90 254.70 283.75 256.28 278.55 257.87 273.28 259.49 267.95 261.12 262.56 262.77 257.10 264.44 251.58 266.13 245.99 267.85 240.33 269.58 234.60 271.34 228.80 273.11 222.93 274.91 216.99 276.73 210.97 278.58M359.48 233.08 364.33 234.47 369.23 235.88 374.19 237.31 379.20 238.75 384.27 240.22 389.40 241.69 394.59 243.19 399.84 244.70 405.16 246.23 410.53 247.78 415.97 249.34 421.48 250.93 427.05 252.53 432.68 254.15 438.39 255.80 444.17 257.46 450.01 259.14 455.93 260.85 461.93 262.58 468.00 264.32 474.15 266.09 480.37 267.88 486.67 269.70 493.06 271.54 499.53 273.40 506.08 275.29 512.72 277.20 519.45 279.14 526.26 281.10"/>
<path fill="none" stroke="#a8a89a" stroke-width="0.7" stroke-dasharray="3 0.8" d="M497.69 190.73 500.23 189.96 502.75 189.18 505.25 188.42 507.73 187.66 510.19 186.90 512.64 186.15 515.07 185.41 517.48 184.67 519.87 183.94 522.24 183.21 524.60 182.49 526.94 181.77M562.20 170.97 564.28 170.33 566.34 169.70 568.39 169.07 570.42 168.45 572.44 167.83 574.45 167.21 576.45 166.60 578.43 166.00 580.39 165.39 582.35 164.80 584.29 164.20 586.22 163.61 588.13 163.02 590.04 162.44M185.31 182.93 184.00 182.55 182.70 182.17 181.40 181.80 180.11 181.43 178.82 181.06 177.53 180.69 176.25 180.32 174.98 179.95 173.71 179.58 172.44 179.22 171.18 178.86 169.92 178.50 168.67 178.14 167.42 177.78 166.18 177.42 164.95 177.06 163.71 176.71 162.48 176.35 161.26 176.00 160.04 175.65 158.82 175.30 157.61 174.95 156.41 174.60 155.21 174.26 154.01 173.91 152.82 173.57 151.63 173.23 150.44 172.89 149.26 172.55 148.09 172.21 146.91 171.87 145.75 171.53 144.58 171.20 143.42 170.87 142.27 170.53 141.12 170.20 139.97 169.87 138.83 169.54 137.69 169.21 136.55 168.89 135.42 168.56 134.30 168.24 133.17 167.91 132.06 167.59 130.94 167.27 129.83 166.95 128.72 166.63 127.62 166.31 126.52 166.00 125.42 165.68 124.33 165.37 123.24 165.06 122.16 164.74 121.08 164.43 120.00 164.12 118.93 163.81 117.86 163.50 116.79 163.20 115.73 162.89 114.67 162.59 113.62 162.28 112.57 161.98 111.52 161.68 110.48 161.38 109.44 161.08 108.40 160.78 107.37 160.48 106.33 160.19 105.31 159.89 104.29 159.60 103.27 159.30 102.25 159.01 101.24 158.72 100.23 158.43 99.22 158.14 98.22 157.85 97.22 157.56 96.22 157.27 95.23 156.99 94.24 156.70 93.25 156.42 92.27 156.14 91.29 155.85 90.31 155.57 89.34 155.29 88.37 155.01 87.40 154.73 86.44 154.46 85.48 154.18 84.52 153.90 83.56 153.63 82.61 153.36 81.66 153.08 80.72 152.81 79.78 152.54 78.84 152.27 77.90 152.00 76.97 151.73 76.04 151.46 75.11 151.20 74.19 150.93 73.26 150.66 72.35 150.40 71.43 150.14 70.52 149.87 69.61 149.61 68.70 149.35 67.80 149.09 66.90 148.83 66.00 148.57 65.10 148.31 64.21 148.06 63.32 147.80 62.43 147.54 61.55 147.29 60.67 147.04 59.79 146.78 58.91 146.53 58.04 146.28 57.17 146.03 56.30 145.78 55.43 145.53 54.57 145.28 53.71 145.03 52.85 144.79 52.00 144.54 51.15 144.30 50.30 144.05 49.45 143.81 48.61 143.56 47.76 143.32 46.93 143.08 46.09 142.84 45.25 142.60 44.42 142.36 43.59 142.12 42.77 141.88 41.94 141.65 41.12 141.41 40.30 141.17 39.49 140.94 38.67 140.70 37.86 140.47 37.05 140.24 36.24 140.00 35.44 139.77 34.64 139.54 33.84 139.31 33.04 139.08 32.24 138.85 31.45 138.62 30.66 138.40 29.87 138.17 29.09 137.94 28.30 137.72 27.52 137.49 26.74 137.27 25.97 137.05 25.19 136.82 24.42 136.60 23.65 136.38 22.88 136.16 22.12 135.94 21.36 135.72 20.59 135.50 19.84 135.28 19.08 135.06 18.33 134.84 17.57 134.63 16.82 134.41 16.08 134.20 15.33 133.98 14.59 133.77 13.84 133.55 13.11 133.34 12.37 133.13 11.63 132.92 10.90 132.71 10.17 132.50 9.44 132.29 8.71 132.08 7.99 131.87 7.27 131.66 6.55 131.45 5.83 131.25 5.11 131.04 4.40 130.83 3.68 130.63 2.97 130.42 2.26 130.22 1.56 130.02 0.85 129.81 0.15 129.61M359.48 233.08 359.47 233.61 359.46 234.14 359.45 234.67 359.44 235.19 359.43 235.72 359.42 236.25 359.41 236.78 359.40 237.31 359.39 237.84 359.38 238.37 359.37 238.89 359.36 239.42 359.35 239.95 359.34 240.48 359.33 241.00 359.32 241.53 359.31 242.06 359.30 242.59 359.29 243.11 359.28 243.64 359.27 244.17 359.26 244.69 359.25 245.22 359.24 245.74 359.23 246.27 359.22 246.80 359.21 247.32 359.20 247.85 359.19 248.37 359.18 248.90 359.17 249.42 359.16 249.95 359.15 250.47 359.14 250.99 359.13 251.52 359.12 252.04 359.11 252.57 359.10 253.09 359.09 253.61 359.08 254.14 359.07 254.66 359.06 255.18 359.05 255.71 359.04 256.23 359.03 256.75 359.03 257.27 359.02 257.80 359.01 258.32 359.00 258.84 358.99 259.36 358.98 259.88 358.97 260.40 358.96 260.92 358.95 261.45 358.94 261.97 358.93 262.49 358.92 263.01 358.91 263.53 358.90 264.05 358.89 264.57 358.88 265.09 358.87 265.61 358.86 266.13 358.85 266.65 358.84 267.17 358.83 267.69 358.82 268.21 358.81 268.72 358.80 269.24 358.79 269.76 358.78 270.28 358.77 270.80 358.76 271.32 358.75 271.83 358.74 272.35 358.73 272.87 358.72 273.39 358.71 273.90 358.70 274.42 358.69 274.94 358.68 275.45 358.67 275.97 358.66 276.49 358.65 277.00 358.64 277.52 358.63 278.03 358.62 278.55 358.61 279.07 358.60 279.58 358.59 280.10 358.59 280.61 358.58 281.13 358.57 281.64 358.56 282.16 358.55 282.67 358.54 283.19 358.53 283.70 358.52 284.21 358.51 284.73 358.50 285.24 358.49 285.75 358.48 286.27 358.47 286.78 358.46 287.29 358.45 287.81 358.44 288.32 358.43 288.83 358.42 289.35 358.41 289.86 358.40 290.37 358.39 290.88 358.38 291.39 358.37 291.91 358.36 292.42 358.35 292.93 358.34 293.44 358.33 293.95 358.32 294.46 358.31 294.97 358.30 295.48 358.30 295.99 358.29 296.50 358.28 297.01 358.27 297.52 358.26 298.03 358.25 298.54 358.24 299.05 358.23 299.56 358.22 300.07 358.21 300.58 358.20 301.09 358.19 301.60 358.18 302.11 358.17 302.61 358.16 303.12 358.15 303.63 358.14 304.14 358.13 304.65 358.12 305.15 358.11 305.66 358.10 306.17 358.09 306.68 358.08 307.18 358.07 307.69 358.07 308.20 358.06 308.70 358.05 309.21 358.04 309.72 358.03 310.22 358.02 310.73 358.01 311.23 358.00 311.74 357.99 312.24 357.98 312.75 357.97 313.25 357.96 313.76 357.95 314.26 357.94 314.77 357.93 315.27 357.92 315.78 357.91 316.28 357.90 316.79 357.89 317.29 357.88 317.79 357.87 318.30 357.87 318.80 357.86 319.30 357.85 319.81 357.84 320.31 357.83 320.81 357.82 321.32 357.81 321.82 357.80 322.32 357.79 322.82 357.78 323.32 357.77 323.83 357.76 324.33 357.75 324.83 357.74 325.33 357.73 325.83 357.72 326.33 357.71 326.84 357.70 327.34 357.70 327.84 357.69 328.34 357.68 328.84 357.67 329.34 357.66 329.84 357.65 330.34 357.64 330.84 357.63 331.34 357.62 331.84 357.61 332.34 357.60 332.84 357.59 333.33 357.58 333.83 357.57 334.33 357.56 334.83 357.55 335.33 357.54 335.83 357.54 336.33 357.53 336.82 357.52 337.32 357.51 337.82 357.50 338.32 357.49 338.81 357.48 339.31 357.47 339.81"/>
<path fill="none" stroke="#4a4a4a" stroke-width="0.7" d="M362.40 78.36 362.80 78.32 363.21 78.27 363.61 78.22 364.01 78.17 364.42 78.13 364.82 78.08 365.22 78.03 365.62 77.99 366.02 77.94 366.43 77.89 366.83 77.85 367.23 77.80 367.63 77.75 368.03 77.71 368.43 77.66 368.82 77.62 369.22 77.57 369.62 77.52 370.02 77.48M362.84 55.10 363.24 55.07 363.65 55.03 364.06 54.99 364.46 54.96 364.87 54.92 365.27 54.89 365.68 54.85 366.08 54.82 366.49 54.78 366.89 54.75 367.29 54.71 367.69 54.68 368.10 54.64 368.50 54.61 368.90 54.57 369.30 54.54 369.70 54.50 370.10 54.47 370.50 54.43M200.52 281.78 200.10 281.60 199.68 281.42 199.25 281.25 198.83 281.07 198.41 280.89 197.99 280.71 197.58 280.54 197.16 280.36 196.74 280.18 196.32 280.01 195.90 279.83 195.49 279.66 195.07 279.48 194.66 279.30 194.24 279.13 193.83 278.95 193.41 278.78 193.00 278.61 192.59 278.43M538.10 284.51 538.47 284.34 538.83 284.16 539.20 283.99 539.56 283.82 539.93 283.64 540.29 283.47 540.65 283.30 541.02 283.13 541.38 282.96 541.74 282.78 542.10 282.61 542.46 282.44 542.82 282.27 543.18 282.10 543.54 281.93 543.90 281.76 544.26 281.59 544.62 281.42 544.98 281.25M363.28 31.53 363.69 31.51 364.10 31.49 364.51 31.46 364.92 31.44 365.32 31.41 365.73 31.39 366.14 31.37 366.54 31.34 366.95 31.32 367.36 31.30 367.76 31.27 368.17 31.25 368.57 31.23 368.98 31.20 369.38 31.18 369.78 31.15 370.19 31.13 370.59 31.11 370.99 31.08M178.93 288.39 178.09 288.02 177.26 287.65 176.43 287.28 175.60 286.91 174.77 286.54 173.94 286.18 173.12 285.81 172.30 285.44 171.48 285.08 170.66 284.71 169.84 284.35 169.03 283.99 168.22 283.63 167.41 283.27 166.60 282.91 165.79 282.55 164.99 282.19 164.19 281.83 163.39 281.48M562.62 291.57 563.34 291.20 564.06 290.84 564.77 290.48 565.48 290.12 566.20 289.76 566.91 289.40 567.62 289.04 568.32 288.69 569.03 288.33 569.73 287.98 570.44 287.62 571.14 287.27 571.84 286.91 572.53 286.56 573.23 286.21 573.92 285.86 574.62 285.51 575.31 285.16 576.00 284.81M156.35 295.31 155.94 295.12 155.53 294.92 155.11 294.73 154.70 294.53 154.29 294.34 153.88 294.15 153.47 293.95 153.06 293.76 152.65 293.57 152.24 293.37 151.83 293.18 151.42 292.99 151.02 292.80 150.61 292.61 150.20 292.42 149.80 292.22 149.39 292.03 148.99 291.84 148.58 291.65M588.32 298.97 588.67 298.78 589.02 298.59 589.37 298.40 589.72 298.21 590.08 298.02 590.43 297.83 590.78 297.64M132.73 302.55 132.32 302.34 131.91 302.14 131.50 301.94 131.10 301.73 130.69 301.53 130.29 301.33 129.88 301.13 129.48 300.93 129.07 300.72 128.67 300.52 128.27 300.32 127.86 300.12 127.46 299.92 127.06 299.72 126.66 299.52 126.26 299.32 125.86 299.12 125.46 298.92 125.06 298.72M107.97 310.13 107.57 309.92 107.17 309.71 106.77 309.49 106.37 309.28 105.97 309.07 105.57 308.85 105.17 308.64 104.78 308.43 104.38 308.22 103.98 308.01 103.59 307.80 103.19 307.59 102.80 307.38 102.40 307.17 102.01 306.96 101.61 306.75 101.22 306.54 100.83 306.33 100.43 306.12M82.01 318.09 81.62 317.86 81.23 317.64 80.83 317.41 80.44 317.19 80.05 316.97 79.66 316.75 79.27 316.52 78.88 316.30 78.49 316.08 78.10 315.86 77.71 315.64 77.32 315.42 76.93 315.19 76.55 314.97 76.16 314.75 75.77 314.53 75.39 314.31 75.00 314.10 74.62 313.88M54.75 326.44 54.37 326.20 53.98 325.97 53.60 325.73 53.22 325.50 52.83 325.26 52.45 325.03 52.07 324.80 51.69 324.56 51.31 324.33 50.93 324.10 50.55 323.86 50.17 323.63 49.79 323.40 49.41 323.17 49.03 322.94 48.66 322.71 48.28 322.48 47.90 322.25 47.53 322.02M26.09 335.22 25.72 334.97 25.34 334.72 24.97 334.48 24.60 334.23 24.22 333.98 23.85 333.74 23.48 333.49 23.11 333.25 22.74 333.00 22.37 332.76 22.00 332.51 21.63 332.27 21.26 332.02 20.90 331.78 20.53 331.54 20.16 331.30 19.80 331.05 19.43 330.81 19.06 330.57"/>
<path fill="none" stroke="#9a9a90" stroke-width="0.6" d="M359.09 254.08 359.47 253.96 359.86 253.83 360.24 253.70 360.63 253.57 361.01 253.44 361.40 253.32 361.78 253.19 362.17 253.06 362.55 252.93 362.93 252.81 363.31 252.68 363.70 252.55 364.08 252.43 364.46 252.30 364.84 252.17 365.22 252.05 365.60 251.92 365.98 251.79 366.36 251.67M358.69 274.83 359.08 274.70 359.46 274.56 359.85 274.42 360.23 274.29 360.61 274.15 360.99 274.01 361.38 273.88 361.76 273.74 362.14 273.60 362.52 273.47 362.90 273.33 363.28 273.19 363.66 273.06 364.04 272.92 364.42 272.79 364.80 272.65 365.17 272.52 365.55 272.38 365.93 272.25M358.31 295.33 358.69 295.18 359.07 295.04 359.45 294.89 359.83 294.75 360.21 294.60 360.59 294.45 360.97 294.31 361.35 294.16 361.73 294.02 362.11 293.87 362.49 293.73 362.87 293.59 363.24 293.44 363.62 293.30 364.00 293.15 364.38 293.01 364.75 292.86 365.13 292.72 365.50 292.58M357.93 315.58 358.31 315.42 358.69 315.27 359.06 315.11 359.44 314.96 359.82 314.80 360.20 314.65 360.58 314.50 360.95 314.34 361.33 314.19 361.71 314.04 362.08 313.88 362.46 313.73 362.84 313.58 363.21 313.42 363.59 313.27 363.96 313.12 364.33 312.97 364.71 312.81 365.08 312.66M357.55 335.58 357.93 335.42 358.30 335.25 358.68 335.09 359.06 334.93 359.43 334.76 359.81 334.60 360.19 334.44 360.56 334.28 360.94 334.12 361.31 333.95 361.68 333.79 362.06 333.63 362.43 333.47 362.80 333.31 363.18 333.15 363.55 332.99 363.92 332.83 364.29 332.67 364.67 332.51M213.33 189.28 213.71 189.20 214.08 189.12 214.46 189.04 214.84 188.96 215.21 188.88 215.59 188.80 215.97 188.72 216.34 188.64 216.72 188.56 217.09 188.48M504.95 188.51 504.53 188.42 504.12 188.34 503.70 188.26 503.29 188.17 502.88 188.09 502.46 188.01 502.05 187.92 501.64 187.84 501.23 187.76 500.81 187.67 500.40 187.59 499.99 187.51 499.58 187.42 499.17 187.34 498.76 187.26 498.35 187.17 497.94 187.09 497.53 187.01 497.12 186.93M514.75 185.51 514.34 185.42 513.93 185.34 513.51 185.26 513.10 185.18 512.69 185.10 512.28 185.02 511.87 184.94 511.46 184.86 511.05 184.77 510.64 184.69 510.23 184.61 509.82 184.53 509.41 184.45 509.00 184.37 508.59 184.29 508.19 184.21 507.78 184.13 507.37 184.05 506.97 183.97M524.27 182.59 523.86 182.51 523.45 182.43 523.04 182.35 522.63 182.27 522.22 182.19 521.81 182.12 521.40 182.04 520.99 181.96 520.59 181.88 520.18 181.80 519.77 181.72 519.36 181.64 518.96 181.57 518.55 181.49 518.15 181.41 517.74 181.33 517.33 181.25 516.93 181.17 516.52 181.10M177.71 180.74 178.09 180.66 178.46 180.59 178.84 180.52 179.21 180.44 179.58 180.37 179.96 180.29 180.33 180.22M528.23 178.76 527.83 178.69 527.42 178.61 527.02 178.53 526.62 178.46 526.22 178.38 525.81 178.31M167.61 177.83 167.99 177.76 168.36 177.69 168.73 177.61 169.10 177.54 169.48 177.47 169.85 177.40 170.22 177.33 170.59 177.26 170.96 177.18 171.34 177.11 171.71 177.04 172.08 176.97 172.45 176.90 172.82 176.83 173.19 176.76 173.56 176.68 173.93 176.61 174.29 176.54 174.66 176.47M157.81 175.01 158.18 174.94 158.55 174.87 158.92 174.80 159.29 174.73 159.66 174.66 160.03 174.59 160.40 174.52 160.77 174.45 161.14 174.38 161.51 174.31 161.88 174.24 162.25 174.17 162.62 174.10 162.99 174.03 163.36 173.96 163.72 173.89 164.09 173.83 164.46 173.76 164.83 173.69M148.29 172.27 148.66 172.20 149.03 172.13 149.39 172.06 149.76 171.99 150.13 171.93 150.50 171.86 150.87 171.79 151.24 171.72 151.61 171.66 151.97 171.59 152.34 171.52 152.71 171.45 153.07 171.39 153.44 171.32 153.81 171.25 154.17 171.18 154.54 171.12 154.90 171.05 155.27 170.98M139.03 169.60 139.40 169.54 139.77 169.47 140.14 169.40 140.50 169.34 140.87 169.27 141.24 169.21 141.60 169.14 141.97 169.07 142.34 169.01 142.70 168.94 143.07 168.88 143.43 168.81 143.80 168.75 144.16 168.68 144.53 168.62 144.89 168.55 145.25 168.49 145.62 168.42 145.98 168.36M568.00 169.19 567.60 169.12 567.20 169.05 566.80 168.98 566.41 168.92 566.01 168.85 565.61 168.78 565.21 168.71 564.82 168.64 564.42 168.57 564.02 168.51 563.63 168.44 563.23 168.37 562.84 168.30 562.44 168.23 562.05 168.16M130.04 167.01 130.41 166.95 130.77 166.88 131.14 166.82 131.50 166.76 131.87 166.69 132.23 166.63 132.60 166.56 132.96 166.50 133.33 166.44 133.69 166.37 134.05 166.31 134.42 166.24 134.78 166.18 135.14 166.12 135.50 166.05 135.87 165.99 136.23 165.93 136.59 165.86 136.95 165.80M576.05 166.73 575.25 166.59 574.46 166.46 573.67 166.32 572.88 166.19 572.09 166.06 571.31 165.93 570.52 165.79 569.73 165.66 568.95 165.53 568.17 165.40 567.39 165.26 566.61 165.13 565.83 165.00 565.05 164.87 564.27 164.74 563.50 164.61 562.72 164.48M121.30 164.49 122.02 164.37 122.75 164.24 123.48 164.12 124.20 164.00 124.92 163.87 125.65 163.75 126.37 163.62 127.09 163.50 127.81 163.38 128.53 163.25 129.24 163.13 129.96 163.01 130.68 162.88 131.39 162.76 132.11 162.64 132.82 162.52 133.53 162.40 134.24 162.27 134.95 162.15M583.88 164.33 583.49 164.26 583.09 164.19 582.70 164.13 582.31 164.06 581.91 164.00 581.52 163.93 581.13 163.87 580.74 163.80 580.34 163.74 579.95 163.68 579.56 163.61 579.17 163.55 578.78 163.48 578.39 163.42 578.00 163.35 577.61 163.29 577.22 163.22 576.83 163.16 576.44 163.09M112.79 162.04 113.15 161.98 113.51 161.92 113.87 161.86 114.23 161.80 114.60 161.74 114.96 161.68 115.32 161.62 115.68 161.56 116.04 161.50 116.40 161.44 116.76 161.38 117.12 161.32 117.47 161.26 117.83 161.20 118.19 161.14 118.55 161.08 118.91 161.02 119.27 160.96 119.62 160.90M590.73 161.86 590.34 161.80 589.95 161.73 589.56 161.67 589.16 161.61 588.77 161.54 588.38 161.48 587.99 161.42 587.61 161.35 587.22 161.29 586.83 161.23 586.44 161.17 586.05 161.10 585.66 161.04 585.27 160.98 584.89 160.91 584.50 160.85 584.11 160.79M104.51 159.66 104.87 159.60 105.23 159.54 105.59 159.48 105.95 159.42 106.31 159.37 106.67 159.31 107.02 159.25 107.38 159.19 107.74 159.13 108.10 159.07 108.45 159.01 108.81 158.95 109.17 158.90 109.53 158.84 109.88 158.78 110.24 158.72 110.59 158.66 110.95 158.60 111.31 158.54M96.45 157.34 96.81 157.28 97.17 157.22 97.52 157.17 97.88 157.11 98.24 157.05 98.59 157.00 98.95 156.94 99.31 156.88 99.66 156.82 100.02 156.77 100.37 156.71 100.73 156.65 101.08 156.59 101.44 156.54 101.79 156.48 102.15 156.42 102.50 156.37 102.85 156.31 103.21 156.25M88.60 155.08 88.96 155.02 89.31 154.97 89.67 154.91 90.02 154.86 90.38 154.80 90.73 154.74 91.09 154.69 91.44 154.63 91.79 154.58 92.15 154.52 92.50 154.47 92.85 154.41 93.21 154.35 93.56 154.30 93.91 154.24 94.26 154.19 94.62 154.13 94.97 154.08 95.32 154.02M80.96 152.88 81.31 152.82 81.66 152.77 82.02 152.71 82.37 152.66 82.72 152.61 83.07 152.55 83.43 152.50 83.78 152.44 84.13 152.39 84.48 152.33 84.83 152.28 85.18 152.23 85.53 152.17 85.88 152.12 86.23 152.06 86.59 152.01 86.93 151.95 87.28 151.90 87.63 151.85M73.50 150.73 73.86 150.68 74.21 150.63 74.56 150.57 74.91 150.52 75.26 150.47 75.61 150.41 75.96 150.36 76.31 150.31 76.66 150.25 77.01 150.20 77.36 150.15 77.71 150.10 78.06 150.04 78.40 149.99 78.75 149.94 79.10 149.88 79.45 149.83 79.80 149.78 80.14 149.73M66.24 148.64 66.59 148.59 66.94 148.54 67.29 148.49 67.64 148.43 67.98 148.38 68.33 148.33 68.68 148.28 69.03 148.23 69.38 148.18 69.72 148.12 70.07 148.07 70.42 148.02 70.76 147.97 71.11 147.92 71.46 147.87 71.80 147.81 72.15 147.76 72.49 147.71 72.84 147.66M59.16 146.60 59.50 146.55 59.85 146.50 60.20 146.45 60.54 146.40 60.89 146.35 61.24 146.30 61.58 146.25 61.93 146.20 62.27 146.15 62.62 146.10 62.96 146.05 63.31 146.00 63.65 145.95 64.00 145.90 64.34 145.85 64.69 145.80 65.03 145.75 65.37 145.69 65.72 145.64M52.25 144.61 52.59 144.56 52.94 144.51 53.28 144.46 53.63 144.41 53.97 144.37 54.31 144.32 54.66 144.27 55.00 144.22 55.34 144.17 55.69 144.12 56.03 144.07 56.37 144.02 56.72 143.97 57.06 143.92 57.40 143.87 57.74 143.83 58.08 143.78 58.43 143.73 58.77 143.68M45.50 142.67 46.19 142.57 46.87 142.48 47.56 142.38 48.24 142.29 48.92 142.19 49.61 142.09 50.29 142.00 50.97 141.90 51.65 141.81 52.32 141.71 53.00 141.62 53.68 141.52 54.35 141.43 55.03 141.33 55.70 141.24 56.38 141.14 57.05 141.05 57.72 140.95 58.39 140.86M38.92 140.78 39.26 140.73 39.60 140.68 39.95 140.63 40.29 140.59 40.63 140.54 40.97 140.49 41.30 140.45 41.64 140.40 41.98 140.35 42.32 140.31 42.66 140.26 43.00 140.21 43.34 140.17 43.68 140.12 44.01 140.07 44.35 140.03 44.69 139.98 45.03 139.93 45.36 139.89M32.50 138.93 32.84 138.88 33.18 138.83 33.51 138.79 33.85 138.74 34.19 138.70 34.53 138.65 34.86 138.60 35.20 138.56 35.54 138.51 35.88 138.47 36.21 138.42 36.55 138.38 36.89 138.33 37.22 138.28 37.56 138.24 37.89 138.19 38.23 138.15 38.56 138.10 38.90 138.06M26.22 137.12 26.56 137.07 26.90 137.03 27.23 136.98 27.57 136.94 27.90 136.89 28.24 136.85 28.58 136.81 28.91 136.76 29.25 136.72 29.58 136.67 29.92 136.63 30.25 136.58 30.58 136.54 30.92 136.49 31.25 136.45 31.59 136.40 31.92 136.36 32.25 136.32 32.58 136.27M20.09 135.35 20.43 135.31 20.76 135.27 21.10 135.22 21.43 135.18 21.76 135.14 22.10 135.09 22.43 135.05 22.76 135.00 23.10 134.96 23.43 134.92 23.76 134.87 24.09 134.83 24.43 134.79 24.76 134.74 25.09 134.70 25.42 134.66 25.75 134.61 26.08 134.57 26.42 134.53M14.10 133.63 14.44 133.59 14.77 133.54 15.10 133.50 15.43 133.46 15.76 133.42 16.10 133.37 16.43 133.33 16.76 133.29 17.09 133.24 17.42 133.20 17.75 133.16 18.08 133.12 18.41 133.07 18.74 133.03 19.07 132.99 19.40 132.95 19.73 132.90 20.06 132.86 20.39 132.82M8.25 131.94 8.58 131.90 8.91 131.86 9.24 131.82 9.57 131.78 9.90 131.73 10.23 131.69 10.56 131.65 10.89 131.61 11.22 131.57 11.54 131.53 11.87 131.48 12.20 131.44 12.53 131.40 12.86 131.36 13.18 131.32 13.51 131.28 13.84 131.23 14.17 131.19 14.49 131.15M2.53 130.30 2.85 130.25 3.18 130.21 3.51 130.17 3.84 130.13 4.17 130.09 4.49 130.05 4.82 130.01 5.15 129.97 5.47 129.93 5.80 129.89 6.13 129.85 6.45 129.81 6.78 129.76 7.10 129.72 7.43 129.68 7.76 129.64 8.08 129.60 8.41 129.56 8.73 129.52M0.18 128.28 0.51 128.24 0.83 128.20 1.15 128.17 1.48 128.13 1.80 128.09 2.13 128.05 2.45 128.01 2.77 127.97 3.09 127.93"/>
<path fill="none" stroke="#4a4a4a" stroke-width="0.7" d="M201.90 284.30 194.68 281.23 198.97 280.97M180.43 288.23 179.92 287.96 179.55 287.65 179.33 287.32 179.27 286.98 179.37 286.63 179.62 286.28 180.02 285.94 180.56 285.63 181.22 285.35 181.99 285.10 182.84 284.89 183.75 284.73 184.71 284.62 185.68 284.56 186.64 284.57 187.57 284.62 188.44 284.73 189.24 284.89 189.94 285.10 190.52 285.35 190.96 285.64 191.27 285.96 191.42 286.29 191.41 286.64 191.25 286.99 190.93 287.33 190.47 287.66 189.88 287.97 189.16 288.24 188.35 288.48 187.46 288.66 186.51 288.80 185.53 288.89 184.54 288.91 183.58 288.89 182.66 288.80 181.82 288.66 181.07 288.47 180.43 288.23M167.03 292.34 166.53 292.06 166.17 291.74 165.96 291.41 165.92 291.05 166.03 290.69 166.31 290.34 166.73 289.99 167.28 289.67 167.97 289.37 168.75 289.12 169.62 288.91 170.56 288.74 171.53 288.63 172.52 288.57 173.49 288.57 174.43 288.63 175.31 288.75 176.11 288.91 176.81 289.13 177.38 289.38 177.82 289.68 178.12 290.00 178.26 290.35 178.24 290.70 178.06 291.06 177.72 291.42 177.24 291.75 176.62 292.07 175.89 292.35 175.05 292.59 174.14 292.78 173.17 292.93 172.17 293.01 171.17 293.04 170.20 293.01 169.27 292.92 168.42 292.78 167.67 292.58 167.03 292.34M546.30 288.48 539.99 291.56 537.96 289.97M563.78 296.03 563.21 296.26 562.50 296.45 561.67 296.58 560.75 296.65 559.76 296.67 558.73 296.62 557.68 296.52 556.64 296.36 555.64 296.14 554.71 295.88 553.86 295.59 553.13 295.26 552.52 294.91 552.06 294.54 551.76 294.17 551.62 293.81 551.65 293.46 551.84 293.14 552.20 292.85 552.70 292.60 553.35 292.39 554.11 292.23 554.98 292.13 555.92 292.09 556.92 292.11 557.95 292.18 558.98 292.31 560.00 292.49 560.96 292.72 561.85 293.00 562.64 293.31 563.32 293.64 563.87 294.00 564.26 294.37 564.50 294.74 564.57 295.09 564.47 295.44 564.20 295.75 563.78 296.03M579.29 300.55 578.72 300.80 578.01 300.99 577.18 301.12 576.25 301.20 575.25 301.21 574.20 301.16 573.13 301.06 572.07 300.89 571.04 300.67 570.08 300.41 569.21 300.10 568.44 299.76 567.81 299.40 567.33 299.02 567.00 298.64 566.85 298.27 566.86 297.91 567.04 297.58 567.38 297.28 567.88 297.02 568.53 296.81 569.29 296.65 570.17 296.55 571.12 296.50 572.14 296.52 573.19 296.59 574.24 296.73 575.28 296.92 576.26 297.15 577.18 297.44 578.00 297.75 578.71 298.10 579.28 298.47 579.70 298.85 579.96 299.22 580.05 299.59 579.96 299.94 579.71 300.27 579.29 300.55"/>
<path fill="none" stroke="#333" stroke-width="1" d="M125.97 164.88 122.50 163.89M122.93 163.23 122.93 162.45 119.52 162.26 117.80 162.55 117.76 164.11 114.36 163.13M113.17 161.22 113.74 161.13 114.34 161.06 114.95 161.01 115.56 160.97 116.15 160.95 116.71 160.96 117.21 160.98 117.66 161.02 118.04 161.07 118.33 161.15 118.53 161.23 118.64 161.33 118.65 161.44 118.56 161.56 118.38 161.68 118.10 161.80 117.74 161.92 117.30 162.03 116.80 162.13 116.25 162.23 115.66 162.31 115.05 162.37 114.44 162.42 113.83 162.44 113.25 162.45 112.71 162.44 112.23 162.41 111.82 162.36 111.48 162.29 111.23 162.21 111.08 162.12 111.03 162.01 111.07 161.90 111.21 161.78 111.45 161.66 111.77 161.54 112.17 161.42 112.64 161.32 113.17 161.22M108.61 159.91 109.18 159.83 109.77 159.76 110.38 159.70 110.99 159.67 111.57 159.65 112.12 159.65 112.63 159.67 113.07 159.71 113.44 159.77 113.73 159.84 113.93 159.93 114.03 160.02 114.04 160.13 113.95 160.25 113.76 160.36 113.49 160.48 113.13 160.60 112.69 160.71 112.19 160.81 111.64 160.90 111.05 160.98 110.45 161.05 109.83 161.09 109.23 161.12 108.66 161.13 108.12 161.12 107.64 161.09 107.23 161.04 106.90 160.97 106.66 160.89 106.51 160.80 106.46 160.69 106.51 160.58 106.65 160.46 106.89 160.35 107.21 160.23 107.61 160.11 108.08 160.01 108.61 159.91M49.47 142.97 46.79 142.21M49.03 141.47 46.38 140.72 44.47 141.54 41.86 141.34 41.22 141.99 42.54 142.38M39.56 140.14 40.10 140.07 40.65 140.01 41.21 139.97 41.76 139.94 42.28 139.93 42.77 139.93 43.21 139.95 43.59 139.98 43.90 140.02 44.13 140.08 44.28 140.15 44.34 140.22 44.31 140.31 44.19 140.40 43.98 140.49 43.69 140.59 43.33 140.68 42.90 140.76 42.42 140.84 41.90 140.92 41.36 140.98 40.80 141.03 40.24 141.06 39.69 141.08 39.18 141.09 38.71 141.08 38.30 141.06 37.95 141.02 37.68 140.97 37.49 140.91 37.39 140.83 37.38 140.75 37.46 140.66 37.63 140.57 37.88 140.48 38.21 140.38 38.61 140.30 39.06 140.21 39.56 140.14M36.02 139.12 36.55 139.06 37.10 139.00 37.66 138.96 38.21 138.93 38.73 138.92 39.21 138.92 39.65 138.94 40.03 138.97 40.33 139.01 40.56 139.06 40.71 139.13 40.76 139.21 40.73 139.29 40.61 139.38 40.40 139.47 40.11 139.56 39.75 139.66 39.33 139.74 38.85 139.82 38.33 139.89 37.78 139.95 37.23 140.00 36.67 140.04 36.13 140.06 35.62 140.06 35.15 140.06 34.74 140.03 34.40 139.99 34.13 139.94 33.95 139.88 33.85 139.81 33.84 139.73 33.92 139.64 34.09 139.55 34.34 139.46 34.67 139.37 35.07 139.28 35.52 139.20 36.02 139.12M578.17 168.61 582.14 167.38M585.99 167.46 590.62 167.29 589.88 166.24 587.22 165.80 578.03 166.12 581.94 164.92M592.22 164.25 593.04 164.39 593.79 164.55 594.46 164.72 595.02 164.89 595.46 165.06 595.76 165.22 595.93 165.37 595.94 165.51 595.82 165.64 595.54 165.74 595.13 165.82 594.60 165.87 593.95 165.90 593.21 165.90 592.39 165.87 591.52 165.81 590.62 165.73 589.71 165.63 588.82 165.51 587.96 165.36 587.17 165.21 586.46 165.04 585.86 164.88 585.37 164.71 585.00 164.54 584.78 164.38 584.70 164.24 584.76 164.11 584.97 164.00 585.31 163.91 585.78 163.84 586.37 163.80 587.06 163.79 587.83 163.80 588.67 163.84 589.55 163.91 590.45 164.00 591.35 164.11 592.22 164.25M597.13 162.72 597.95 162.86 598.70 163.02 599.36 163.18 599.92 163.35 600.36 163.52 600.67 163.68 600.83 163.83 600.86 163.97 600.73 164.09 600.46 164.19 600.06 164.27 599.53 164.32 598.89 164.35 598.16 164.34 597.34 164.32 596.48 164.26 595.58 164.18 594.68 164.08 593.79 163.96 592.94 163.82 592.15 163.67 591.44 163.51 590.84 163.34 590.35 163.17 589.98 163.01 589.75 162.85 589.67 162.71 589.73 162.58 589.93 162.47 590.27 162.39 590.73 162.32 591.32 162.28 592.00 162.27 592.77 162.29 593.60 162.33 594.47 162.39 595.37 162.48 596.26 162.59 597.13 162.72"/>
<g stroke-width="1" fill="none"><path stroke="#9a9a9a" d="M58.5 306.8L58.7 288"/><path stroke="#c8a0a0" d="M58.5 306.8L45 310"/><path stroke="#a8d8a8" d="M58.5 306.8L73 310.5"/></g>
<g font-family="Liberation Sans" font-size="5" fill="#555"><text x="57" y="287">z</text><text x="41" y="312.5">x</text><text x="73" y="313">y</text></g></g><!--/model-->
</svg>
</div>

<div id="tb"><svg width="591" height="25" viewBox="0 340 591 25" style="position:absolute;left:0;top:0">
<g fill="none" stroke="#2b2b2b" stroke-width="1" stroke-linejoin="round" stroke-linecap="round">
 <path d="M13 345.5L19 348.5L19 355L13 358L7 355L7 348.5ZM7 348.5L13 351.5L19 348.5M13 351.5V358" stroke="#4a4a4a" stroke-width="0.9"/>
 <path d="M10.3 356.3l1.6 1.7l-1.6 1.7M13 356.3l1.6 1.7l-1.6 1.7" stroke-width="1.3" stroke="#111"/>
 <path d="M39.2 345.5L45.2 348.5L45.2 355L39.2 358L33.2 355L33.2 348.5ZM33.2 348.5L39.2 351.5L45.2 348.5" stroke="#4a4a4a" stroke-width="0.9"/>
 <path d="M37 353.5H41.4L39.2 356ZM37 358.8H41.4L39.2 356.3Z" fill="#2b2b2b" stroke-width="0.6"/>
 <path d="M67.3 344.8H77.2V359.2H74.5M64.2 348V352" stroke-width="1.1"/>
 <path d="M64 348.6L68 344.6V348.6Z" fill="#111" stroke-width="0.8"/>
 <path d="M93.3 344.8H103.2V359.2H100.5M90.2 348V352" stroke-width="1.1"/>
 <path d="M90 348.6L94 344.6V348.6Z" fill="#111" stroke-width="0.8"/>
 <circle cx="121.6" cy="350.6" r="3.6" stroke-width="1.2"/>
 <path d="M124.3 353.4L127 357" stroke-width="2.4" stroke="#111"/>
 <path d="M116.3 347V344.6H118.8M124.6 344.6H127.6V347M116.3 354V356.5H118.8" stroke-width="1.3"/>
 <circle cx="148.6" cy="350.2" r="3.6" stroke-width="1.2"/>
 <path d="M146.6 350.2H150.6M148.6 348.2V352.2" stroke-width="1.1"/>
 <path d="M151.3 353L154.2 356.8" stroke-width="2.4" stroke="#111"/>
 <circle cx="175.6" cy="350.2" r="3.6" stroke-width="1.2"/>
 <path d="M173.6 350.2H177.6" stroke-width="1.1"/>
 <path d="M178.3 353L181.2 356.8" stroke-width="2.4" stroke="#111"/>
 <path d="M204.6 346.6A4.9 4.9 0 1 1 200.4 349" stroke-width="1" stroke="#333"/>
 <circle cx="200.6" cy="348.6" r="1.1" fill="#111" stroke="none"/>
 <g stroke="#6a6a6a"><path d="M224.5 344.5V358.8M235.6 344.5V358.8M225.5 354.5H234.6M227 352.8L225.3 354.5L227 356.2M233.1 352.8L234.8 354.5L233.1 356.2M228.5 350.5L230 345.8L231.5 350.5M228.9 349H231.1"/></g>
 <g stroke="#6e6e6e"><path d="M250.8 351.5L256 356.7L261.2 351.5M252.3 348.3L256 344.8L259.5 348M254 350.2a2.4 2.4 0 1 1 3.8 2.5l-1 -1.9" stroke-width="1.1"/></g>
</g>
<g font-family="Liberation Sans" font-weight="bold" fill="#111">
 <text x="63.8" y="360" font-size="7.4" textLength="13" lengthAdjust="spacingAndGlyphs">STL</text>
 <text x="89.6" y="360" font-size="7.4" textLength="14" lengthAdjust="spacingAndGlyphs">DXF</text>
</g>
<g stroke="#cfcfcf" stroke-width="1"><path d="M53.6 342V363M271 342V363M435.8 342V363M494 342V363"/></g>
<g stroke="#f7f7f7" stroke-width="0.6"><path d="M54.6 342V363M272 342V363M436.8 342V363M495 342V363"/></g>
<g fill="#d3d3d3"><rect x="441" y="341.5" width="23" height="22" rx="1.5"/><rect x="500" y="341.5" width="22.5" height="22" rx="1.5"/><rect x="527" y="341.5" width="22" height="22" rx="1.5"/></g>
<g fill="none" stroke="#2b2b2b" stroke-width="1" stroke-linejoin="round">
 <path d="M285.6 345.8V356.2M282 351H289.5" stroke-width="1.1"/>
 <ellipse cx="291.6" cy="350.8" rx="2" ry="1.1" fill="#333" stroke-width="0.9"/>
 <path d="M312.8 345.8V356.2M309 350.5H317" stroke-width="1.1"/>
 <ellipse cx="310.3" cy="348.4" rx="2" ry="1.1" fill="#333" stroke-width="0.9"/>
 <path d="M340.3 346.5V356.2M336.3 351H344" stroke-width="1.1"/>
 <ellipse cx="344.2" cy="347.6" rx="2" ry="1.1" fill="#333" stroke-width="0.9"/>
 <path d="M365.8 346.5V356.2M361.8 351.5H370" stroke-width="1.1"/>
 <ellipse cx="361.8" cy="354.2" rx="2" ry="1.1" fill="#333" stroke-width="0.9"/>
 <path d="M391.6 347.5V356.2M388 352H395.5" stroke-width="1.1"/>
 <ellipse cx="391.6" cy="345.6" rx="2" ry="1.1" fill="#333" stroke-width="0.9"/>
 <path d="M419.3 345.5V354M415.5 350.5H423" stroke-width="1.1"/>
 <ellipse cx="419.3" cy="357.2" rx="2" ry="1.1" fill="#333" stroke-width="0.9"/>
 <path d="M446.3 350.5H452.8V357H446.3ZM446.3 350.5L454.8 345.2H458.6L452.8 350.5M458.6 345.2V348.2L452.8 357" stroke-width="1.1"/>
 <path d="M474.5 347.8H482.6V356.2H474.5ZM477.4 345.2H485.5V353.5H477.4ZM474.5 347.8L477.4 345.2M482.6 347.8L485.5 345.2M482.6 356.2L485.5 353.5M474.5 356.2L477.4 353.5" stroke-width="1.1"/>
</g>
<g fill="none" stroke="#6a6a6a" stroke-width="1.1"><path d="M511.3 344.8V351.8H517.8M511.3 351.8L506.2 356.6M538.4 344.6V351.8M538.4 351.8L533.6 356.6"/></g>
<g fill="none" stroke="#333" stroke-width="1.3" stroke-dasharray="1.6 1.4"><path d="M557.2 347.3H571.3V356H557.2Z"/></g>
<g font-family="Liberation Sans" font-size="5.6" fill="#222">
 <text x="289.5" y="359">+X</text><text x="315" y="359">-X</text><text x="341.5" y="359">+Y</text><text x="367.5" y="359">-Y</text><text x="393.5" y="359">+Z</text><text x="421.5" y="359">-Z</text>
 <text x="539.5" y="358" font-size="4.8" fill="#444">10</text>
</g>
</svg></div>


<!-- Console -->
<div class="dh" style="left:0;top:364px;width:311px">
 <div class="cx" style="left:2px;top:2.5px"></div>
 <div class="a" style="left:148px;top:3.3px;color:#444;font-size:6.9px">Console</div>
</div>
<div id="con">
<div class="a" style="left:3.4px;top:2px;line-height:9.1px;-webkit-text-stroke:0.05px currentColor;color:#2a2a2a">CGAL cache size in bytes: 101983936
Compiling design (CSG Products normalization)...
Normalized tree has 2356 elements!
Compile and preview finished.
Total rendering time: 0:00:00.609

Parsing design (AST generation)...
Compiling design (CSG Tree generation)...
Compiling design (CSG Products generation)...
Geometries in cache: 234
Geometry cache size in bytes: 16112784
CGAL Polyhedrons in cache: 4
CGAL cache size in bytes: 101983936
Compiling design (CSG Products normalization)...
Normalized tree has 2632 elements!
Compile and preview finished.
Total rendering time: 0:00:00.314</div>
 <div style="position:absolute;left:303px;top:151px;width:5px;height:11px;border-radius:2.5px;background:#7a7a7a"></div>
</div>

<!-- Error log -->
<div id="err">
 <div class="dh" style="left:0;top:0;width:279px">
  <div class="cx" style="left:2px;top:2.5px"></div>
  <div class="a" style="left:130px;top:3.3px;color:#444;font-size:6.9px">Error-Log</div>
 </div>
 <div class="a" style="left:7px;top:25px;color:#222">Show</div>
 <div class="combo" style="left:33px;top:23px;width:88px"><div class="a" style="left:3px;top:2px">All</div><div class="bbtn"><svg width="9" height="9"><path d="M2.8 3.6L4.5 2L6.2 3.6M2.8 5.4L4.5 7L6.2 5.4" fill="none" stroke="#fff" stroke-width="1"/></svg></div></div>
 <div style="position:absolute;left:8px;top:41px;width:264px;height:130px;background:#fff;border:1px solid #e0e0e0">
  <div style="position:absolute;left:0;top:0;width:262px;height:12px;background:#f1f1f1;border-bottom:1px solid #e6e6e6"></div>
  <div class="a" style="left:12.5px;top:2.8px;color:#444;font-size:7.2px">Group</div>
  <div class="a" style="left:95px;top:2.8px;color:#444;font-size:7.2px">File</div>
  <div class="a" style="left:175.5px;top:2.8px;color:#444;font-size:7.2px">Line</div>
  <div class="a" style="left:239px;top:2.8px;color:#444;font-size:7.2px">Info</div>
  <div style="position:absolute;left:44px;top:2px;width:1px;height:9px;background:#ddd"></div>
  <div style="position:absolute;left:158px;top:2px;width:1px;height:9px;background:#ddd"></div>
  <div style="position:absolute;left:205px;top:2px;width:1px;height:9px;background:#ddd"></div>
  <div style="position:absolute;left:2px;top:123px;width:240px;height:4px;border-radius:2px;background:#7a7a7a"></div>
 </div>
</div>

<!-- Customizer -->
<div id="cust">
 <div class="dh" style="left:0;top:0;width:208px;height:12px"></div>
</div>
<div class="cx" style="left:593px;top:17px"></div>
<div class="a" style="left:684.2px;top:18.3px;color:#444;font-size:6.9px">Customizer</div>

<div class="cb" style="left:592px;top:35px"></div>
<div class="a" style="left:603px;top:36px">Automatic Preview</div>
<div class="combo" style="left:698px;top:34px;width:97px"><div class="a" style="left:4px;top:2px">Show Details</div><div class="bbtn"><svg width="9" height="9"><path d="M2.8 3.6L4.5 2L6.2 3.6M2.8 5.4L4.5 7L6.2 5.4" fill="none" stroke="#fff" stroke-width="1"/></svg></div></div>
<div class="combo" style="left:592px;top:56px;width:156px"><div class="a" style="left:3px;top:2px">New set 2</div><div class="bbtn"><svg width="9" height="9"><path d="M2.6 3.6L4.5 5.5L6.4 3.6" fill="none" stroke="#fff" stroke-width="1.2"/></svg></div></div>
<div style="position:absolute;left:752px;top:54.5px;width:22px;height:15px;background:#f6f6f6;border:1px solid #d2d2d2;border-radius:2px"></div>
<div class="a" style="left:760.5px;top:58.5px;font-weight:bold">+</div>
<div style="position:absolute;left:777px;top:54.5px;width:22px;height:15px;background:#f6f6f6;border:1px solid #d2d2d2;border-radius:2px"></div>
<div class="a" style="left:786.5px;top:58px;font-weight:bold">-</div>
<div class="sep" style="top:76px"></div>

<div class="chev" style="left:595px;top:80px"></div>
<div class="a" style="left:604px;top:81px">General</div>
<div class="sep" style="top:89px"></div>
<div class="a b" style="left:594.5px;top:94.5px">show</div>
<div class="a" style="left:594.5px;top:103.5px">Show a cutout, just for preview</div>
<div class="cb" style="left:786px;top:97px"></div>
<div class="a b" style="left:594.5px;top:116.5px">showmodels</div>
<div class="a" style="left:594.5px;top:125.5px">Show the models (same as part: all)</div>
<div class="cb" style="left:786px;top:119px"></div>
<div class="a b" style="left:596px;top:137px">part</div>
<div class="a" style="left:596px;top:146.3px;line-height:8.7px">Only print separate parts! Mockup can be used for testing
the configuration. The if the part base mockup is
satisfatory this cab be reused as part of the base.</div>
<div class="combo" style="left:598px;top:176px;width:195px"><div class="a" style="left:4.5px;top:2px">top</div><div class="bbtn"><svg width="9" height="9"><path d="M2.8 3.6L4.5 2L6.2 3.6M2.8 5.4L4.5 7L6.2 5.4" fill="none" stroke="#fff" stroke-width="1"/></svg></div></div>
<div class="a b" style="left:594.5px;top:194.5px">base mockup cutout</div>
<div class="a" style="left:594.5px;top:203px;line-height:9px">When a base mockup cutout is used, which you might
have to glue,  then true</div>
<div class="cb" style="left:786px;top:202.5px"></div>
<div class="sep" style="top:223px"></div>

<div class="chev" style="left:595px;top:226px"></div>
<div class="a" style="left:604px;top:227.5px">Ball bearing</div>
<div class="sep" style="top:236.5px"></div>
<div class="a b" style="left:594.5px;top:239px">ball bearing ro</div>
<div class="a" style="left:594.5px;top:247.3px;line-height:9px">Outer ball bearing range
[mm]</div>
<div class="spin" style="left:698px;top:247px;width:90px"><div class="a" style="right:3px;top:1px">17,5</div></div>
<svg style="position:absolute;left:789.5px;top:246.0px" width="7" height="11"><path d="M1.5 3.8L3.5 1.6L5.5 3.8M1.5 7.2L3.5 9.4L5.5 7.2" fill="none" stroke="#3a3a3a" stroke-width="0.9"/></svg>
<div class="track" style="left:595.5px;top:271px;width:199px"></div>
<div class="fill" style="left:595.5px;top:271px;width:100px"></div>
<div class="knob" style="left:690px;top:266.5px"></div>

<div class="a b" style="left:594.5px;top:281.5px">ball bearing ri</div>
<div class="a" style="left:594.5px;top:289.6px;line-height:9px">Inner ball bearing range
[mm]</div>
<div class="spin" style="left:698px;top:289.5px;width:90px"><div class="a" style="right:3px;top:1px">7,5</div></div>
<svg style="position:absolute;left:789.5px;top:288.5px" width="7" height="11"><path d="M1.5 3.8L3.5 1.6L5.5 3.8M1.5 7.2L3.5 9.4L5.5 7.2" fill="none" stroke="#3a3a3a" stroke-width="0.9"/></svg>
<div class="track" style="left:595.5px;top:313px;width:199px"></div>
<div class="fill" style="left:595.5px;top:313px;width:29px"></div>
<div class="knob" style="left:619.5px;top:308.5px"></div>

<div class="a b" style="left:594.5px;top:323.3px">ball bearing h</div>
<div class="a" style="left:594.5px;top:332.8px">Height ball bearing [mm]</div>
<div class="spin" style="left:698px;top:326.5px;width:90px"><div class="a" style="right:3px;top:1px">11</div></div>
<svg style="position:absolute;left:789.5px;top:325.5px" width="7" height="11"><path d="M1.5 3.8L3.5 1.6L5.5 3.8M1.5 7.2L3.5 9.4L5.5 7.2" fill="none" stroke="#3a3a3a" stroke-width="0.9"/></svg>
<div class="sep" style="top:341px"></div>
<div class="chev" style="left:595px;top:344px"></div>
<div class="a" style="left:604px;top:345.5px">Turning table</div>
<div class="sep" style="top:354px"></div>
<div class="a b" style="left:594.5px;top:357px">r outer</div>
<div class="a" style="left:594.5px;top:365.3px;line-height:9px">Range top turning table
[mm]</div>
<div class="spin" style="left:698px;top:365px;width:90px"><div class="a" style="right:3px;top:1px">85</div></div>
<svg style="position:absolute;left:789.5px;top:364.5px" width="7" height="11"><path d="M1.5 3.8L3.5 1.6L5.5 3.8M1.5 7.2L3.5 9.4L5.5 7.2" fill="none" stroke="#3a3a3a" stroke-width="0.9"/></svg>
<div class="track" style="left:595.5px;top:388.8px;width:199px"></div>
<div class="fill" style="left:595.5px;top:388.8px;width:83px"></div>
<div class="knob" style="left:673px;top:384.3px"></div>

<div style="position:absolute;left:796px;top:77px;width:1px;height:464px;background:#e3e3e3"></div>
<div id="sb">
 <div class="a" style="left:1.2px;top:2.5px;color:#222;font-size:7.86px">Viewport: translate = [ 46.70 6.85 34.78 ], rotate = [ 76.70 0.00 136.30 ], distance = 325.23, fov = 22.50 (1029x564)</div>
 <div class="a" style="left:657px;top:2.5px;color:#222">OpenSCAD 2025.02.10 (git 48c04246a)</div>
</div>

</body></html>
